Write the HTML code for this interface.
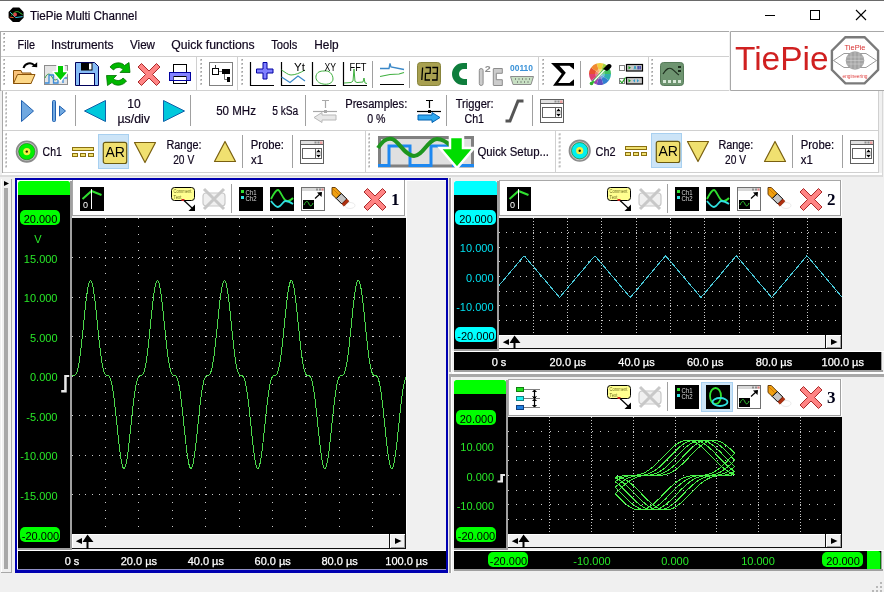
<!DOCTYPE html>
<html><head><meta charset="utf-8"><title>TiePie Multi Channel</title>
<style>html,body{margin:0;padding:0;width:884px;height:592px;overflow:hidden;background:#f0f0f0}</style>
</head><body><svg width="884" height="592" viewBox="0 0 884 592" style="display:block;will-change:transform"><rect x="0" y="0" width="884" height="592" fill="#f0f0f0" />
<rect x="0" y="0" width="884" height="31" fill="#ffffff" />
<rect x="0" y="0" width="884" height="1" fill="#6a6a6a" />
<text x="30" y="20" font-family="Liberation Sans" font-size="12" fill="#10061e" text-anchor="start" font-weight="normal" textLength="107" lengthAdjust="spacingAndGlyphs" stroke="#10061e" stroke-width="0.2">TiePie Multi Channel</text>
<rect x="765" y="15" width="10" height="1" fill="#000" />
<rect x="810.5" y="10.5" width="9" height="9" fill="none" stroke="#000" stroke-width="1"/>
<path d="M856 10 L866 20 M866 10 L856 20" stroke="#000" stroke-width="1.1"/>
<rect x="0" y="31" width="729" height="60" fill="#ffffff" />
<rect x="0" y="31" width="729" height="1" fill="#a8a8a8" />
<rect x="0" y="56" width="729" height="1" fill="#d0d0d0" />
<rect x="0" y="90" width="729" height="1" fill="#d0d0d0" />
<rect x="0" y="31" width="1" height="60" fill="#a8a8a8" />
<rect x="3" y="33" width="2" height="2" fill="#c8c8c8" />
<rect x="4" y="33" width="1" height="1" fill="#a0a0a0" />
<rect x="3" y="37" width="2" height="2" fill="#c8c8c8" />
<rect x="4" y="37" width="1" height="1" fill="#a0a0a0" />
<rect x="3" y="41" width="2" height="2" fill="#c8c8c8" />
<rect x="4" y="41" width="1" height="1" fill="#a0a0a0" />
<rect x="3" y="45" width="2" height="2" fill="#c8c8c8" />
<rect x="4" y="45" width="1" height="1" fill="#a0a0a0" />
<rect x="3" y="49" width="2" height="2" fill="#c8c8c8" />
<rect x="4" y="49" width="1" height="1" fill="#a0a0a0" />
<text x="17.5" y="49" font-family="Liberation Sans" font-size="12" fill="#10061e" text-anchor="start" font-weight="normal" textLength="17.5" lengthAdjust="spacingAndGlyphs" stroke="#10061e" stroke-width="0.2">File</text>
<text x="51" y="49" font-family="Liberation Sans" font-size="12" fill="#10061e" text-anchor="start" font-weight="normal" textLength="62.6" lengthAdjust="spacingAndGlyphs" stroke="#10061e" stroke-width="0.2">Instruments</text>
<text x="130" y="49" font-family="Liberation Sans" font-size="12" fill="#10061e" text-anchor="start" font-weight="normal" textLength="25" lengthAdjust="spacingAndGlyphs" stroke="#10061e" stroke-width="0.2">View</text>
<text x="171.3" y="49" font-family="Liberation Sans" font-size="12" fill="#10061e" text-anchor="start" font-weight="normal" textLength="83.3" lengthAdjust="spacingAndGlyphs" stroke="#10061e" stroke-width="0.2">Quick functions</text>
<text x="271.3" y="49" font-family="Liberation Sans" font-size="12" fill="#10061e" text-anchor="start" font-weight="normal" textLength="26" lengthAdjust="spacingAndGlyphs" stroke="#10061e" stroke-width="0.2">Tools</text>
<text x="314.3" y="49" font-family="Liberation Sans" font-size="12" fill="#10061e" text-anchor="start" font-weight="normal" textLength="24.4" lengthAdjust="spacingAndGlyphs" stroke="#10061e" stroke-width="0.2">Help</text>
<rect x="196" y="57" width="1" height="33" fill="#d0d0d0" />
<rect x="237" y="57" width="1" height="33" fill="#d0d0d0" />
<rect x="538" y="57" width="1" height="33" fill="#d0d0d0" />
<rect x="648" y="57" width="1" height="33" fill="#d0d0d0" />
<rect x="3" y="59" width="2" height="2" fill="#c8c8c8" />
<rect x="4" y="59" width="1" height="1" fill="#a0a0a0" />
<rect x="3" y="63" width="2" height="2" fill="#c8c8c8" />
<rect x="4" y="63" width="1" height="1" fill="#a0a0a0" />
<rect x="3" y="67" width="2" height="2" fill="#c8c8c8" />
<rect x="4" y="67" width="1" height="1" fill="#a0a0a0" />
<rect x="3" y="71" width="2" height="2" fill="#c8c8c8" />
<rect x="4" y="71" width="1" height="1" fill="#a0a0a0" />
<rect x="3" y="75" width="2" height="2" fill="#c8c8c8" />
<rect x="4" y="75" width="1" height="1" fill="#a0a0a0" />
<rect x="3" y="79" width="2" height="2" fill="#c8c8c8" />
<rect x="4" y="79" width="1" height="1" fill="#a0a0a0" />
<rect x="3" y="83" width="2" height="2" fill="#c8c8c8" />
<rect x="4" y="83" width="1" height="1" fill="#a0a0a0" />
<rect x="200" y="59" width="2" height="2" fill="#c8c8c8" />
<rect x="201" y="59" width="1" height="1" fill="#a0a0a0" />
<rect x="200" y="63" width="2" height="2" fill="#c8c8c8" />
<rect x="201" y="63" width="1" height="1" fill="#a0a0a0" />
<rect x="200" y="67" width="2" height="2" fill="#c8c8c8" />
<rect x="201" y="67" width="1" height="1" fill="#a0a0a0" />
<rect x="200" y="71" width="2" height="2" fill="#c8c8c8" />
<rect x="201" y="71" width="1" height="1" fill="#a0a0a0" />
<rect x="200" y="75" width="2" height="2" fill="#c8c8c8" />
<rect x="201" y="75" width="1" height="1" fill="#a0a0a0" />
<rect x="200" y="79" width="2" height="2" fill="#c8c8c8" />
<rect x="201" y="79" width="1" height="1" fill="#a0a0a0" />
<rect x="200" y="83" width="2" height="2" fill="#c8c8c8" />
<rect x="201" y="83" width="1" height="1" fill="#a0a0a0" />
<rect x="241" y="59" width="2" height="2" fill="#c8c8c8" />
<rect x="242" y="59" width="1" height="1" fill="#a0a0a0" />
<rect x="241" y="63" width="2" height="2" fill="#c8c8c8" />
<rect x="242" y="63" width="1" height="1" fill="#a0a0a0" />
<rect x="241" y="67" width="2" height="2" fill="#c8c8c8" />
<rect x="242" y="67" width="1" height="1" fill="#a0a0a0" />
<rect x="241" y="71" width="2" height="2" fill="#c8c8c8" />
<rect x="242" y="71" width="1" height="1" fill="#a0a0a0" />
<rect x="241" y="75" width="2" height="2" fill="#c8c8c8" />
<rect x="242" y="75" width="1" height="1" fill="#a0a0a0" />
<rect x="241" y="79" width="2" height="2" fill="#c8c8c8" />
<rect x="242" y="79" width="1" height="1" fill="#a0a0a0" />
<rect x="241" y="83" width="2" height="2" fill="#c8c8c8" />
<rect x="242" y="83" width="1" height="1" fill="#a0a0a0" />
<rect x="542" y="59" width="2" height="2" fill="#c8c8c8" />
<rect x="543" y="59" width="1" height="1" fill="#a0a0a0" />
<rect x="542" y="63" width="2" height="2" fill="#c8c8c8" />
<rect x="543" y="63" width="1" height="1" fill="#a0a0a0" />
<rect x="542" y="67" width="2" height="2" fill="#c8c8c8" />
<rect x="543" y="67" width="1" height="1" fill="#a0a0a0" />
<rect x="542" y="71" width="2" height="2" fill="#c8c8c8" />
<rect x="543" y="71" width="1" height="1" fill="#a0a0a0" />
<rect x="542" y="75" width="2" height="2" fill="#c8c8c8" />
<rect x="543" y="75" width="1" height="1" fill="#a0a0a0" />
<rect x="542" y="79" width="2" height="2" fill="#c8c8c8" />
<rect x="543" y="79" width="1" height="1" fill="#a0a0a0" />
<rect x="542" y="83" width="2" height="2" fill="#c8c8c8" />
<rect x="543" y="83" width="1" height="1" fill="#a0a0a0" />
<rect x="651" y="59" width="2" height="2" fill="#c8c8c8" />
<rect x="652" y="59" width="1" height="1" fill="#a0a0a0" />
<rect x="651" y="63" width="2" height="2" fill="#c8c8c8" />
<rect x="652" y="63" width="1" height="1" fill="#a0a0a0" />
<rect x="651" y="67" width="2" height="2" fill="#c8c8c8" />
<rect x="652" y="67" width="1" height="1" fill="#a0a0a0" />
<rect x="651" y="71" width="2" height="2" fill="#c8c8c8" />
<rect x="652" y="71" width="1" height="1" fill="#a0a0a0" />
<rect x="651" y="75" width="2" height="2" fill="#c8c8c8" />
<rect x="652" y="75" width="1" height="1" fill="#a0a0a0" />
<rect x="651" y="79" width="2" height="2" fill="#c8c8c8" />
<rect x="652" y="79" width="1" height="1" fill="#a0a0a0" />
<rect x="651" y="83" width="2" height="2" fill="#c8c8c8" />
<rect x="652" y="83" width="1" height="1" fill="#a0a0a0" />
<rect x="730" y="31" width="154" height="60" fill="#ffffff" />
<path d="M884 31.5 H730.5 V90.5 H884" fill="none" stroke="#a8a8a8"/>
<text x="735" y="70" font-family="Liberation Sans" font-size="33.4" fill="#d02020" text-anchor="start" font-weight="normal" textLength="93.5" lengthAdjust="spacingAndGlyphs" >TiePie</text>
<rect x="0" y="91" width="884" height="87" fill="#f0f0f0" />
<rect x="2" y="91" width="877" height="39" fill="#ffffff" />
<rect x="2" y="131" width="877" height="41" fill="#ffffff" />
<rect x="2" y="130" width="877" height="1" fill="#d0d0d0" />
<rect x="2" y="172" width="877" height="1" fill="#d0d0d0" />
<rect x="2" y="173" width="880" height="2" fill="#ffffff" />
<rect x="0" y="175" width="882" height="2" fill="#dcdcdc" />
<rect x="2" y="91" width="1" height="82" fill="#a8a8a8" />
<rect x="878" y="91" width="1" height="82" fill="#d0d0d0" />
<rect x="882" y="91" width="1" height="86" fill="#d8d8d8" />
<rect x="5" y="92.5" width="2" height="2" fill="#c8c8c8" />
<rect x="6" y="92.5" width="1" height="1" fill="#a0a0a0" />
<rect x="5" y="96.5" width="2" height="2" fill="#c8c8c8" />
<rect x="6" y="96.5" width="1" height="1" fill="#a0a0a0" />
<rect x="5" y="100.5" width="2" height="2" fill="#c8c8c8" />
<rect x="6" y="100.5" width="1" height="1" fill="#a0a0a0" />
<rect x="5" y="104.5" width="2" height="2" fill="#c8c8c8" />
<rect x="6" y="104.5" width="1" height="1" fill="#a0a0a0" />
<rect x="5" y="108.5" width="2" height="2" fill="#c8c8c8" />
<rect x="6" y="108.5" width="1" height="1" fill="#a0a0a0" />
<rect x="5" y="112.5" width="2" height="2" fill="#c8c8c8" />
<rect x="6" y="112.5" width="1" height="1" fill="#a0a0a0" />
<rect x="5" y="116.5" width="2" height="2" fill="#c8c8c8" />
<rect x="6" y="116.5" width="1" height="1" fill="#a0a0a0" />
<rect x="5" y="120.5" width="2" height="2" fill="#c8c8c8" />
<rect x="6" y="120.5" width="1" height="1" fill="#a0a0a0" />
<rect x="5" y="124.5" width="2" height="2" fill="#c8c8c8" />
<rect x="6" y="124.5" width="1" height="1" fill="#a0a0a0" />
<rect x="5" y="133.5" width="2" height="2" fill="#c8c8c8" />
<rect x="6" y="133.5" width="1" height="1" fill="#a0a0a0" />
<rect x="5" y="137.5" width="2" height="2" fill="#c8c8c8" />
<rect x="6" y="137.5" width="1" height="1" fill="#a0a0a0" />
<rect x="5" y="141.5" width="2" height="2" fill="#c8c8c8" />
<rect x="6" y="141.5" width="1" height="1" fill="#a0a0a0" />
<rect x="5" y="145.5" width="2" height="2" fill="#c8c8c8" />
<rect x="6" y="145.5" width="1" height="1" fill="#a0a0a0" />
<rect x="5" y="149.5" width="2" height="2" fill="#c8c8c8" />
<rect x="6" y="149.5" width="1" height="1" fill="#a0a0a0" />
<rect x="5" y="153.5" width="2" height="2" fill="#c8c8c8" />
<rect x="6" y="153.5" width="1" height="1" fill="#a0a0a0" />
<rect x="5" y="157.5" width="2" height="2" fill="#c8c8c8" />
<rect x="6" y="157.5" width="1" height="1" fill="#a0a0a0" />
<rect x="5" y="161.5" width="2" height="2" fill="#c8c8c8" />
<rect x="6" y="161.5" width="1" height="1" fill="#a0a0a0" />
<rect x="5" y="165.5" width="2" height="2" fill="#c8c8c8" />
<rect x="6" y="165.5" width="1" height="1" fill="#a0a0a0" />
<rect x="365" y="131" width="1" height="41" fill="#d0d0d0" />
<rect x="368" y="133.5" width="2" height="2" fill="#c8c8c8" />
<rect x="369" y="133.5" width="1" height="1" fill="#a0a0a0" />
<rect x="368" y="137.5" width="2" height="2" fill="#c8c8c8" />
<rect x="369" y="137.5" width="1" height="1" fill="#a0a0a0" />
<rect x="368" y="141.5" width="2" height="2" fill="#c8c8c8" />
<rect x="369" y="141.5" width="1" height="1" fill="#a0a0a0" />
<rect x="368" y="145.5" width="2" height="2" fill="#c8c8c8" />
<rect x="369" y="145.5" width="1" height="1" fill="#a0a0a0" />
<rect x="368" y="149.5" width="2" height="2" fill="#c8c8c8" />
<rect x="369" y="149.5" width="1" height="1" fill="#a0a0a0" />
<rect x="368" y="153.5" width="2" height="2" fill="#c8c8c8" />
<rect x="369" y="153.5" width="1" height="1" fill="#a0a0a0" />
<rect x="368" y="157.5" width="2" height="2" fill="#c8c8c8" />
<rect x="369" y="157.5" width="1" height="1" fill="#a0a0a0" />
<rect x="368" y="161.5" width="2" height="2" fill="#c8c8c8" />
<rect x="369" y="161.5" width="1" height="1" fill="#a0a0a0" />
<rect x="368" y="165.5" width="2" height="2" fill="#c8c8c8" />
<rect x="369" y="165.5" width="1" height="1" fill="#a0a0a0" />
<rect x="555" y="131" width="1" height="41" fill="#d0d0d0" />
<rect x="558.5" y="133.5" width="2" height="2" fill="#c8c8c8" />
<rect x="559.5" y="133.5" width="1" height="1" fill="#a0a0a0" />
<rect x="558.5" y="137.5" width="2" height="2" fill="#c8c8c8" />
<rect x="559.5" y="137.5" width="1" height="1" fill="#a0a0a0" />
<rect x="558.5" y="141.5" width="2" height="2" fill="#c8c8c8" />
<rect x="559.5" y="141.5" width="1" height="1" fill="#a0a0a0" />
<rect x="558.5" y="145.5" width="2" height="2" fill="#c8c8c8" />
<rect x="559.5" y="145.5" width="1" height="1" fill="#a0a0a0" />
<rect x="558.5" y="149.5" width="2" height="2" fill="#c8c8c8" />
<rect x="559.5" y="149.5" width="1" height="1" fill="#a0a0a0" />
<rect x="558.5" y="153.5" width="2" height="2" fill="#c8c8c8" />
<rect x="559.5" y="153.5" width="1" height="1" fill="#a0a0a0" />
<rect x="558.5" y="157.5" width="2" height="2" fill="#c8c8c8" />
<rect x="559.5" y="157.5" width="1" height="1" fill="#a0a0a0" />
<rect x="558.5" y="161.5" width="2" height="2" fill="#c8c8c8" />
<rect x="559.5" y="161.5" width="1" height="1" fill="#a0a0a0" />
<rect x="558.5" y="165.5" width="2" height="2" fill="#c8c8c8" />
<rect x="559.5" y="165.5" width="1" height="1" fill="#a0a0a0" />
<text x="134" y="108" font-family="Liberation Sans" font-size="12" fill="#10061e" text-anchor="middle" font-weight="normal" stroke="#10061e" stroke-width="0.2">10</text>
<text x="117.5" y="122.6" font-family="Liberation Sans" font-size="12" fill="#10061e" text-anchor="start" font-weight="normal" textLength="32.5" lengthAdjust="spacingAndGlyphs" stroke="#10061e" stroke-width="0.2">µs/div</text>
<text x="216.2" y="114.5" font-family="Liberation Sans" font-size="12" fill="#10061e" text-anchor="start" font-weight="normal" textLength="39.7" lengthAdjust="spacingAndGlyphs" stroke="#10061e" stroke-width="0.2">50 MHz</text>
<text x="272.2" y="114.5" font-family="Liberation Sans" font-size="12" fill="#10061e" text-anchor="start" font-weight="normal" textLength="26.1" lengthAdjust="spacingAndGlyphs" stroke="#10061e" stroke-width="0.2">5 kSa</text>
<text x="345.2" y="107.8" font-family="Liberation Sans" font-size="12" fill="#10061e" text-anchor="start" font-weight="normal" textLength="62.1" lengthAdjust="spacingAndGlyphs" stroke="#10061e" stroke-width="0.2">Presamples:</text>
<text x="367.2" y="122.6" font-family="Liberation Sans" font-size="12" fill="#10061e" text-anchor="start" font-weight="normal" textLength="18.3" lengthAdjust="spacingAndGlyphs" stroke="#10061e" stroke-width="0.2">0 %</text>
<text x="455.7" y="107.8" font-family="Liberation Sans" font-size="12" fill="#10061e" text-anchor="start" font-weight="normal" textLength="38" lengthAdjust="spacingAndGlyphs" stroke="#10061e" stroke-width="0.2">Trigger:</text>
<text x="464.5" y="122.6" font-family="Liberation Sans" font-size="12" fill="#10061e" text-anchor="start" font-weight="normal" textLength="19.5" lengthAdjust="spacingAndGlyphs" stroke="#10061e" stroke-width="0.2">Ch1</text>
<rect x="75" y="95" width="1" height="31" fill="#a0a0a0" />
<rect x="190" y="95" width="1" height="31" fill="#a0a0a0" />
<rect x="305" y="95" width="1" height="31" fill="#a0a0a0" />
<rect x="446" y="95" width="1" height="31" fill="#a0a0a0" />
<rect x="532" y="95" width="1" height="31" fill="#a0a0a0" />
<text x="42.6" y="155.6" font-family="Liberation Sans" font-size="12" fill="#10061e" text-anchor="start" font-weight="normal" textLength="19.2" lengthAdjust="spacingAndGlyphs" stroke="#10061e" stroke-width="0.2">Ch1</text>
<text x="166.5" y="148.6" font-family="Liberation Sans" font-size="12" fill="#10061e" text-anchor="start" font-weight="normal" textLength="35" lengthAdjust="spacingAndGlyphs" stroke="#10061e" stroke-width="0.2">Range:</text>
<text x="173.2" y="163.7" font-family="Liberation Sans" font-size="12" fill="#10061e" text-anchor="start" font-weight="normal" textLength="21" lengthAdjust="spacingAndGlyphs" stroke="#10061e" stroke-width="0.2">20 V</text>
<text x="250.7" y="148.6" font-family="Liberation Sans" font-size="12" fill="#10061e" text-anchor="start" font-weight="normal" textLength="33.3" lengthAdjust="spacingAndGlyphs" stroke="#10061e" stroke-width="0.2">Probe:</text>
<text x="251" y="163.7" font-family="Liberation Sans" font-size="12" fill="#10061e" text-anchor="start" font-weight="normal" textLength="12" lengthAdjust="spacingAndGlyphs" stroke="#10061e" stroke-width="0.2">x1</text>
<text x="477.4" y="156.1" font-family="Liberation Sans" font-size="12" fill="#10061e" text-anchor="start" font-weight="normal" textLength="71.6" lengthAdjust="spacingAndGlyphs" stroke="#10061e" stroke-width="0.2">Quick Setup...</text>
<text x="595.6" y="155.6" font-family="Liberation Sans" font-size="12" fill="#10061e" text-anchor="start" font-weight="normal" textLength="20" lengthAdjust="spacingAndGlyphs" stroke="#10061e" stroke-width="0.2">Ch2</text>
<text x="718.4" y="148.6" font-family="Liberation Sans" font-size="12" fill="#10061e" text-anchor="start" font-weight="normal" textLength="35" lengthAdjust="spacingAndGlyphs" stroke="#10061e" stroke-width="0.2">Range:</text>
<text x="725" y="163.7" font-family="Liberation Sans" font-size="12" fill="#10061e" text-anchor="start" font-weight="normal" textLength="21" lengthAdjust="spacingAndGlyphs" stroke="#10061e" stroke-width="0.2">20 V</text>
<text x="800.8" y="148.6" font-family="Liberation Sans" font-size="12" fill="#10061e" text-anchor="start" font-weight="normal" textLength="33.3" lengthAdjust="spacingAndGlyphs" stroke="#10061e" stroke-width="0.2">Probe:</text>
<text x="800.8" y="163.7" font-family="Liberation Sans" font-size="12" fill="#10061e" text-anchor="start" font-weight="normal" textLength="12" lengthAdjust="spacingAndGlyphs" stroke="#10061e" stroke-width="0.2">x1</text>
<rect x="242" y="135" width="1" height="33" fill="#a0a0a0" />
<rect x="292" y="135" width="1" height="33" fill="#a0a0a0" />
<rect x="792" y="135" width="1" height="33" fill="#a0a0a0" />
<rect x="842" y="135" width="1" height="33" fill="#a0a0a0" />
<rect x="0" y="177" width="884" height="415" fill="#f0f0f0" />
<rect x="1" y="179" width="1" height="393" fill="#ffffff" />
<rect x="11" y="179" width="1" height="394" fill="#a8a8a8" />
<rect x="1" y="572" width="11" height="1" fill="#a8a8a8" />
<rect x="4" y="188" width="4" height="381" fill="#a8a8a8" />
<path d="M4 181 L9 183.5 L4 186 Z" fill="#000"/>
<rect x="15" y="178" width="433" height="395" fill="#0000b0" />
<rect x="17" y="180" width="429" height="390" fill="#f0f0f0" />
<rect x="17" y="180" width="1" height="390" fill="#ffffff" />
<rect x="17" y="180" width="429" height="1" fill="#ffffff" />
<rect x="18" y="181" width="52" height="14" fill="#ffffff" />
<rect x="18" y="195" width="52" height="353" fill="#000" />
<path d="M18 183.5 Q18 181 20.5 181 H67.5 Q70 181 70 183.5 V195 H18 Z" fill="#00ff00"/>
<rect x="70" y="181" width="2" height="369" fill="#a0a0a0" />
<rect x="18" y="548" width="54" height="2" fill="#a0a0a0" />
<rect x="72" y="180" width="332" height="35" fill="#ffffff" />
<rect x="72" y="180" width="1" height="35" fill="#a8a8a8" />
<rect x="72" y="215" width="333" height="1" fill="#a0a0a0" />
<rect x="404" y="180" width="1" height="36" fill="#a0a0a0" />
<rect x="405" y="180" width="1" height="36" fill="#ffffff" />
<rect x="406" y="181" width="1" height="353" fill="#ffffff" />
<rect x="72" y="218" width="334" height="316" fill="#000" />
<path d="M105 218h1v1h-1zM105 226h1v1h-1zM105 234h1v1h-1zM105 242h1v1h-1zM105 250h1v1h-1zM105 258h1v1h-1zM105 265h1v1h-1zM105 273h1v1h-1zM105 281h1v1h-1zM105 289h1v1h-1zM105 297h1v1h-1zM105 305h1v1h-1zM105 313h1v1h-1zM105 321h1v1h-1zM105 329h1v1h-1zM105 336h1v1h-1zM105 344h1v1h-1zM105 352h1v1h-1zM105 360h1v1h-1zM105 368h1v1h-1zM105 376h1v1h-1zM105 384h1v1h-1zM105 392h1v1h-1zM105 400h1v1h-1zM105 408h1v1h-1zM105 416h1v1h-1zM105 423h1v1h-1zM105 431h1v1h-1zM105 439h1v1h-1zM105 447h1v1h-1zM105 455h1v1h-1zM105 463h1v1h-1zM105 471h1v1h-1zM105 479h1v1h-1zM105 487h1v1h-1zM105 494h1v1h-1zM105 502h1v1h-1zM105 510h1v1h-1zM105 518h1v1h-1zM105 526h1v1h-1zM138 218h1v1h-1zM138 226h1v1h-1zM138 234h1v1h-1zM138 242h1v1h-1zM138 250h1v1h-1zM138 258h1v1h-1zM138 265h1v1h-1zM138 273h1v1h-1zM138 281h1v1h-1zM138 289h1v1h-1zM138 297h1v1h-1zM138 305h1v1h-1zM138 313h1v1h-1zM138 321h1v1h-1zM138 329h1v1h-1zM138 336h1v1h-1zM138 344h1v1h-1zM138 352h1v1h-1zM138 360h1v1h-1zM138 368h1v1h-1zM138 376h1v1h-1zM138 384h1v1h-1zM138 392h1v1h-1zM138 400h1v1h-1zM138 408h1v1h-1zM138 416h1v1h-1zM138 423h1v1h-1zM138 431h1v1h-1zM138 439h1v1h-1zM138 447h1v1h-1zM138 455h1v1h-1zM138 463h1v1h-1zM138 471h1v1h-1zM138 479h1v1h-1zM138 487h1v1h-1zM138 494h1v1h-1zM138 502h1v1h-1zM138 510h1v1h-1zM138 518h1v1h-1zM138 526h1v1h-1zM172 218h1v1h-1zM172 226h1v1h-1zM172 234h1v1h-1zM172 242h1v1h-1zM172 250h1v1h-1zM172 258h1v1h-1zM172 265h1v1h-1zM172 273h1v1h-1zM172 281h1v1h-1zM172 289h1v1h-1zM172 297h1v1h-1zM172 305h1v1h-1zM172 313h1v1h-1zM172 321h1v1h-1zM172 329h1v1h-1zM172 336h1v1h-1zM172 344h1v1h-1zM172 352h1v1h-1zM172 360h1v1h-1zM172 368h1v1h-1zM172 376h1v1h-1zM172 384h1v1h-1zM172 392h1v1h-1zM172 400h1v1h-1zM172 408h1v1h-1zM172 416h1v1h-1zM172 423h1v1h-1zM172 431h1v1h-1zM172 439h1v1h-1zM172 447h1v1h-1zM172 455h1v1h-1zM172 463h1v1h-1zM172 471h1v1h-1zM172 479h1v1h-1zM172 487h1v1h-1zM172 494h1v1h-1zM172 502h1v1h-1zM172 510h1v1h-1zM172 518h1v1h-1zM172 526h1v1h-1zM205 218h1v1h-1zM205 226h1v1h-1zM205 234h1v1h-1zM205 242h1v1h-1zM205 250h1v1h-1zM205 258h1v1h-1zM205 265h1v1h-1zM205 273h1v1h-1zM205 281h1v1h-1zM205 289h1v1h-1zM205 297h1v1h-1zM205 305h1v1h-1zM205 313h1v1h-1zM205 321h1v1h-1zM205 329h1v1h-1zM205 336h1v1h-1zM205 344h1v1h-1zM205 352h1v1h-1zM205 360h1v1h-1zM205 368h1v1h-1zM205 376h1v1h-1zM205 384h1v1h-1zM205 392h1v1h-1zM205 400h1v1h-1zM205 408h1v1h-1zM205 416h1v1h-1zM205 423h1v1h-1zM205 431h1v1h-1zM205 439h1v1h-1zM205 447h1v1h-1zM205 455h1v1h-1zM205 463h1v1h-1zM205 471h1v1h-1zM205 479h1v1h-1zM205 487h1v1h-1zM205 494h1v1h-1zM205 502h1v1h-1zM205 510h1v1h-1zM205 518h1v1h-1zM205 526h1v1h-1zM239 218h1v1h-1zM239 226h1v1h-1zM239 234h1v1h-1zM239 242h1v1h-1zM239 250h1v1h-1zM239 258h1v1h-1zM239 265h1v1h-1zM239 273h1v1h-1zM239 281h1v1h-1zM239 289h1v1h-1zM239 297h1v1h-1zM239 305h1v1h-1zM239 313h1v1h-1zM239 321h1v1h-1zM239 329h1v1h-1zM239 336h1v1h-1zM239 344h1v1h-1zM239 352h1v1h-1zM239 360h1v1h-1zM239 368h1v1h-1zM239 376h1v1h-1zM239 384h1v1h-1zM239 392h1v1h-1zM239 400h1v1h-1zM239 408h1v1h-1zM239 416h1v1h-1zM239 423h1v1h-1zM239 431h1v1h-1zM239 439h1v1h-1zM239 447h1v1h-1zM239 455h1v1h-1zM239 463h1v1h-1zM239 471h1v1h-1zM239 479h1v1h-1zM239 487h1v1h-1zM239 494h1v1h-1zM239 502h1v1h-1zM239 510h1v1h-1zM239 518h1v1h-1zM239 526h1v1h-1zM272 218h1v1h-1zM272 226h1v1h-1zM272 234h1v1h-1zM272 242h1v1h-1zM272 250h1v1h-1zM272 258h1v1h-1zM272 265h1v1h-1zM272 273h1v1h-1zM272 281h1v1h-1zM272 289h1v1h-1zM272 297h1v1h-1zM272 305h1v1h-1zM272 313h1v1h-1zM272 321h1v1h-1zM272 329h1v1h-1zM272 336h1v1h-1zM272 344h1v1h-1zM272 352h1v1h-1zM272 360h1v1h-1zM272 368h1v1h-1zM272 376h1v1h-1zM272 384h1v1h-1zM272 392h1v1h-1zM272 400h1v1h-1zM272 408h1v1h-1zM272 416h1v1h-1zM272 423h1v1h-1zM272 431h1v1h-1zM272 439h1v1h-1zM272 447h1v1h-1zM272 455h1v1h-1zM272 463h1v1h-1zM272 471h1v1h-1zM272 479h1v1h-1zM272 487h1v1h-1zM272 494h1v1h-1zM272 502h1v1h-1zM272 510h1v1h-1zM272 518h1v1h-1zM272 526h1v1h-1zM305 218h1v1h-1zM305 226h1v1h-1zM305 234h1v1h-1zM305 242h1v1h-1zM305 250h1v1h-1zM305 258h1v1h-1zM305 265h1v1h-1zM305 273h1v1h-1zM305 281h1v1h-1zM305 289h1v1h-1zM305 297h1v1h-1zM305 305h1v1h-1zM305 313h1v1h-1zM305 321h1v1h-1zM305 329h1v1h-1zM305 336h1v1h-1zM305 344h1v1h-1zM305 352h1v1h-1zM305 360h1v1h-1zM305 368h1v1h-1zM305 376h1v1h-1zM305 384h1v1h-1zM305 392h1v1h-1zM305 400h1v1h-1zM305 408h1v1h-1zM305 416h1v1h-1zM305 423h1v1h-1zM305 431h1v1h-1zM305 439h1v1h-1zM305 447h1v1h-1zM305 455h1v1h-1zM305 463h1v1h-1zM305 471h1v1h-1zM305 479h1v1h-1zM305 487h1v1h-1zM305 494h1v1h-1zM305 502h1v1h-1zM305 510h1v1h-1zM305 518h1v1h-1zM305 526h1v1h-1zM339 218h1v1h-1zM339 226h1v1h-1zM339 234h1v1h-1zM339 242h1v1h-1zM339 250h1v1h-1zM339 258h1v1h-1zM339 265h1v1h-1zM339 273h1v1h-1zM339 281h1v1h-1zM339 289h1v1h-1zM339 297h1v1h-1zM339 305h1v1h-1zM339 313h1v1h-1zM339 321h1v1h-1zM339 329h1v1h-1zM339 336h1v1h-1zM339 344h1v1h-1zM339 352h1v1h-1zM339 360h1v1h-1zM339 368h1v1h-1zM339 376h1v1h-1zM339 384h1v1h-1zM339 392h1v1h-1zM339 400h1v1h-1zM339 408h1v1h-1zM339 416h1v1h-1zM339 423h1v1h-1zM339 431h1v1h-1zM339 439h1v1h-1zM339 447h1v1h-1zM339 455h1v1h-1zM339 463h1v1h-1zM339 471h1v1h-1zM339 479h1v1h-1zM339 487h1v1h-1zM339 494h1v1h-1zM339 502h1v1h-1zM339 510h1v1h-1zM339 518h1v1h-1zM339 526h1v1h-1zM372 218h1v1h-1zM372 226h1v1h-1zM372 234h1v1h-1zM372 242h1v1h-1zM372 250h1v1h-1zM372 258h1v1h-1zM372 265h1v1h-1zM372 273h1v1h-1zM372 281h1v1h-1zM372 289h1v1h-1zM372 297h1v1h-1zM372 305h1v1h-1zM372 313h1v1h-1zM372 321h1v1h-1zM372 329h1v1h-1zM372 336h1v1h-1zM372 344h1v1h-1zM372 352h1v1h-1zM372 360h1v1h-1zM372 368h1v1h-1zM372 376h1v1h-1zM372 384h1v1h-1zM372 392h1v1h-1zM372 400h1v1h-1zM372 408h1v1h-1zM372 416h1v1h-1zM372 423h1v1h-1zM372 431h1v1h-1zM372 439h1v1h-1zM372 447h1v1h-1zM372 455h1v1h-1zM372 463h1v1h-1zM372 471h1v1h-1zM372 479h1v1h-1zM372 487h1v1h-1zM372 494h1v1h-1zM372 502h1v1h-1zM372 510h1v1h-1zM372 518h1v1h-1zM372 526h1v1h-1zM72 257h1v1h-1zM79 257h1v1h-1zM85 257h1v1h-1zM92 257h1v1h-1zM99 257h1v1h-1zM105 257h1v1h-1zM112 257h1v1h-1zM119 257h1v1h-1zM125 257h1v1h-1zM132 257h1v1h-1zM139 257h1v1h-1zM145 257h1v1h-1zM152 257h1v1h-1zM159 257h1v1h-1zM166 257h1v1h-1zM172 257h1v1h-1zM179 257h1v1h-1zM186 257h1v1h-1zM192 257h1v1h-1zM199 257h1v1h-1zM206 257h1v1h-1zM212 257h1v1h-1zM219 257h1v1h-1zM226 257h1v1h-1zM232 257h1v1h-1zM239 257h1v1h-1zM246 257h1v1h-1zM252 257h1v1h-1zM259 257h1v1h-1zM266 257h1v1h-1zM272 257h1v1h-1zM279 257h1v1h-1zM286 257h1v1h-1zM292 257h1v1h-1zM299 257h1v1h-1zM306 257h1v1h-1zM312 257h1v1h-1zM319 257h1v1h-1zM326 257h1v1h-1zM333 257h1v1h-1zM339 257h1v1h-1zM346 257h1v1h-1zM353 257h1v1h-1zM359 257h1v1h-1zM366 257h1v1h-1zM373 257h1v1h-1zM379 257h1v1h-1zM386 257h1v1h-1zM393 257h1v1h-1zM399 257h1v1h-1zM72 297h1v1h-1zM79 297h1v1h-1zM85 297h1v1h-1zM92 297h1v1h-1zM99 297h1v1h-1zM105 297h1v1h-1zM112 297h1v1h-1zM119 297h1v1h-1zM125 297h1v1h-1zM132 297h1v1h-1zM139 297h1v1h-1zM145 297h1v1h-1zM152 297h1v1h-1zM159 297h1v1h-1zM166 297h1v1h-1zM172 297h1v1h-1zM179 297h1v1h-1zM186 297h1v1h-1zM192 297h1v1h-1zM199 297h1v1h-1zM206 297h1v1h-1zM212 297h1v1h-1zM219 297h1v1h-1zM226 297h1v1h-1zM232 297h1v1h-1zM239 297h1v1h-1zM246 297h1v1h-1zM252 297h1v1h-1zM259 297h1v1h-1zM266 297h1v1h-1zM272 297h1v1h-1zM279 297h1v1h-1zM286 297h1v1h-1zM292 297h1v1h-1zM299 297h1v1h-1zM306 297h1v1h-1zM312 297h1v1h-1zM319 297h1v1h-1zM326 297h1v1h-1zM333 297h1v1h-1zM339 297h1v1h-1zM346 297h1v1h-1zM353 297h1v1h-1zM359 297h1v1h-1zM366 297h1v1h-1zM373 297h1v1h-1zM379 297h1v1h-1zM386 297h1v1h-1zM393 297h1v1h-1zM399 297h1v1h-1zM72 336h1v1h-1zM79 336h1v1h-1zM85 336h1v1h-1zM92 336h1v1h-1zM99 336h1v1h-1zM105 336h1v1h-1zM112 336h1v1h-1zM119 336h1v1h-1zM125 336h1v1h-1zM132 336h1v1h-1zM139 336h1v1h-1zM145 336h1v1h-1zM152 336h1v1h-1zM159 336h1v1h-1zM166 336h1v1h-1zM172 336h1v1h-1zM179 336h1v1h-1zM186 336h1v1h-1zM192 336h1v1h-1zM199 336h1v1h-1zM206 336h1v1h-1zM212 336h1v1h-1zM219 336h1v1h-1zM226 336h1v1h-1zM232 336h1v1h-1zM239 336h1v1h-1zM246 336h1v1h-1zM252 336h1v1h-1zM259 336h1v1h-1zM266 336h1v1h-1zM272 336h1v1h-1zM279 336h1v1h-1zM286 336h1v1h-1zM292 336h1v1h-1zM299 336h1v1h-1zM306 336h1v1h-1zM312 336h1v1h-1zM319 336h1v1h-1zM326 336h1v1h-1zM333 336h1v1h-1zM339 336h1v1h-1zM346 336h1v1h-1zM353 336h1v1h-1zM359 336h1v1h-1zM366 336h1v1h-1zM373 336h1v1h-1zM379 336h1v1h-1zM386 336h1v1h-1zM393 336h1v1h-1zM399 336h1v1h-1zM72 376h1v1h-1zM79 376h1v1h-1zM85 376h1v1h-1zM92 376h1v1h-1zM99 376h1v1h-1zM105 376h1v1h-1zM112 376h1v1h-1zM119 376h1v1h-1zM125 376h1v1h-1zM132 376h1v1h-1zM139 376h1v1h-1zM145 376h1v1h-1zM152 376h1v1h-1zM159 376h1v1h-1zM166 376h1v1h-1zM172 376h1v1h-1zM179 376h1v1h-1zM186 376h1v1h-1zM192 376h1v1h-1zM199 376h1v1h-1zM206 376h1v1h-1zM212 376h1v1h-1zM219 376h1v1h-1zM226 376h1v1h-1zM232 376h1v1h-1zM239 376h1v1h-1zM246 376h1v1h-1zM252 376h1v1h-1zM259 376h1v1h-1zM266 376h1v1h-1zM272 376h1v1h-1zM279 376h1v1h-1zM286 376h1v1h-1zM292 376h1v1h-1zM299 376h1v1h-1zM306 376h1v1h-1zM312 376h1v1h-1zM319 376h1v1h-1zM326 376h1v1h-1zM333 376h1v1h-1zM339 376h1v1h-1zM346 376h1v1h-1zM353 376h1v1h-1zM359 376h1v1h-1zM366 376h1v1h-1zM373 376h1v1h-1zM379 376h1v1h-1zM386 376h1v1h-1zM393 376h1v1h-1zM399 376h1v1h-1zM72 415h1v1h-1zM79 415h1v1h-1zM85 415h1v1h-1zM92 415h1v1h-1zM99 415h1v1h-1zM105 415h1v1h-1zM112 415h1v1h-1zM119 415h1v1h-1zM125 415h1v1h-1zM132 415h1v1h-1zM139 415h1v1h-1zM145 415h1v1h-1zM152 415h1v1h-1zM159 415h1v1h-1zM166 415h1v1h-1zM172 415h1v1h-1zM179 415h1v1h-1zM186 415h1v1h-1zM192 415h1v1h-1zM199 415h1v1h-1zM206 415h1v1h-1zM212 415h1v1h-1zM219 415h1v1h-1zM226 415h1v1h-1zM232 415h1v1h-1zM239 415h1v1h-1zM246 415h1v1h-1zM252 415h1v1h-1zM259 415h1v1h-1zM266 415h1v1h-1zM272 415h1v1h-1zM279 415h1v1h-1zM286 415h1v1h-1zM292 415h1v1h-1zM299 415h1v1h-1zM306 415h1v1h-1zM312 415h1v1h-1zM319 415h1v1h-1zM326 415h1v1h-1zM333 415h1v1h-1zM339 415h1v1h-1zM346 415h1v1h-1zM353 415h1v1h-1zM359 415h1v1h-1zM366 415h1v1h-1zM373 415h1v1h-1zM379 415h1v1h-1zM386 415h1v1h-1zM393 415h1v1h-1zM399 415h1v1h-1zM72 455h1v1h-1zM79 455h1v1h-1zM85 455h1v1h-1zM92 455h1v1h-1zM99 455h1v1h-1zM105 455h1v1h-1zM112 455h1v1h-1zM119 455h1v1h-1zM125 455h1v1h-1zM132 455h1v1h-1zM139 455h1v1h-1zM145 455h1v1h-1zM152 455h1v1h-1zM159 455h1v1h-1zM166 455h1v1h-1zM172 455h1v1h-1zM179 455h1v1h-1zM186 455h1v1h-1zM192 455h1v1h-1zM199 455h1v1h-1zM206 455h1v1h-1zM212 455h1v1h-1zM219 455h1v1h-1zM226 455h1v1h-1zM232 455h1v1h-1zM239 455h1v1h-1zM246 455h1v1h-1zM252 455h1v1h-1zM259 455h1v1h-1zM266 455h1v1h-1zM272 455h1v1h-1zM279 455h1v1h-1zM286 455h1v1h-1zM292 455h1v1h-1zM299 455h1v1h-1zM306 455h1v1h-1zM312 455h1v1h-1zM319 455h1v1h-1zM326 455h1v1h-1zM333 455h1v1h-1zM339 455h1v1h-1zM346 455h1v1h-1zM353 455h1v1h-1zM359 455h1v1h-1zM366 455h1v1h-1zM373 455h1v1h-1zM379 455h1v1h-1zM386 455h1v1h-1zM393 455h1v1h-1zM399 455h1v1h-1zM72 494h1v1h-1zM79 494h1v1h-1zM85 494h1v1h-1zM92 494h1v1h-1zM99 494h1v1h-1zM105 494h1v1h-1zM112 494h1v1h-1zM119 494h1v1h-1zM125 494h1v1h-1zM132 494h1v1h-1zM139 494h1v1h-1zM145 494h1v1h-1zM152 494h1v1h-1zM159 494h1v1h-1zM166 494h1v1h-1zM172 494h1v1h-1zM179 494h1v1h-1zM186 494h1v1h-1zM192 494h1v1h-1zM199 494h1v1h-1zM206 494h1v1h-1zM212 494h1v1h-1zM219 494h1v1h-1zM226 494h1v1h-1zM232 494h1v1h-1zM239 494h1v1h-1zM246 494h1v1h-1zM252 494h1v1h-1zM259 494h1v1h-1zM266 494h1v1h-1zM272 494h1v1h-1zM279 494h1v1h-1zM286 494h1v1h-1zM292 494h1v1h-1zM299 494h1v1h-1zM306 494h1v1h-1zM312 494h1v1h-1zM319 494h1v1h-1zM326 494h1v1h-1zM333 494h1v1h-1zM339 494h1v1h-1zM346 494h1v1h-1zM353 494h1v1h-1zM359 494h1v1h-1zM366 494h1v1h-1zM373 494h1v1h-1zM379 494h1v1h-1zM386 494h1v1h-1zM393 494h1v1h-1zM399 494h1v1h-1z" fill="#c8c8c8" shape-rendering="crispEdges"/>
<rect x="72" y="534" width="334" height="15" fill="#f0f0f0" />
<rect x="72" y="534" width="334" height="1" fill="#ffffff" />
<rect x="72" y="534" width="1" height="15" fill="#ffffff" />
<rect x="72" y="548" width="334" height="1" fill="#101010" />
<rect x="389" y="534" width="1" height="15" fill="#101010" />
<rect x="390" y="534" width="16" height="15" fill="#f0f0f0" />
<rect x="390" y="534" width="16" height="1" fill="#ffffff" />
<rect x="390" y="534" width="1" height="15" fill="#ffffff" />
<rect x="390" y="548" width="16" height="1" fill="#101010" />
<rect x="405" y="534" width="1" height="15" fill="#101010" />
<rect x="391" y="547" width="14" height="1" fill="#a0a0a0" />
<rect x="404" y="535" width="1" height="13" fill="#a0a0a0" />
<path d="M395 538 L401.5 541 L395 544 Z" fill="#000"/>
<path d="M75.8 541.3 L82 538 L82 544 Z" fill="#000"/>
<path d="M87.5 534.5 L93.5 542 L88.5 542 L88.5 549 L86.5 549 L86.5 542 L82.5 542 Z" fill="#000"/>
<rect x="17" y="550" width="429" height="1" fill="#ffffff" />
<rect x="18" y="551" width="428" height="18" fill="#000" />
<rect x="17" y="569" width="429" height="1" fill="#9090c8" />
<text x="72.0" y="565" font-family="Liberation Sans" font-size="11" fill="#ffffff" text-anchor="middle" font-weight="normal" stroke="#ffffff" stroke-width="0.25">0 s</text>
<text x="138.9" y="565" font-family="Liberation Sans" font-size="11" fill="#ffffff" text-anchor="middle" font-weight="normal" stroke="#ffffff" stroke-width="0.25">20.0 µs</text>
<text x="205.8" y="565" font-family="Liberation Sans" font-size="11" fill="#ffffff" text-anchor="middle" font-weight="normal" stroke="#ffffff" stroke-width="0.25">40.0 µs</text>
<text x="272.70000000000005" y="565" font-family="Liberation Sans" font-size="11" fill="#ffffff" text-anchor="middle" font-weight="normal" stroke="#ffffff" stroke-width="0.25">60.0 µs</text>
<text x="339.6" y="565" font-family="Liberation Sans" font-size="11" fill="#ffffff" text-anchor="middle" font-weight="normal" stroke="#ffffff" stroke-width="0.25">80.0 µs</text>
<text x="406.5" y="565" font-family="Liberation Sans" font-size="11" fill="#ffffff" text-anchor="middle" font-weight="normal" stroke="#ffffff" stroke-width="0.25">100.0 µs</text>
<rect x="20" y="210" width="40" height="15" rx="5" ry="5" fill="#00ff00"/>
<text x="40.5" y="222.6" font-family="Liberation Sans" font-size="11" fill="#000" text-anchor="middle" font-weight="normal" >20.000</text>
<rect x="20" y="527" width="40" height="15" rx="5" ry="5" fill="#00ff00"/>
<text x="40.5" y="539.6" font-family="Liberation Sans" font-size="11" fill="#000" text-anchor="middle" font-weight="normal" >-20.000</text>
<text x="38" y="242.5" font-family="Liberation Sans" font-size="11" fill="#28e828" text-anchor="middle" font-weight="normal" >V</text>
<text x="57.5" y="262.8" font-family="Liberation Sans" font-size="11" fill="#28e828" text-anchor="end" font-weight="normal" >15.000</text>
<text x="57.5" y="302.3" font-family="Liberation Sans" font-size="11" fill="#28e828" text-anchor="end" font-weight="normal" >10.000</text>
<text x="57.5" y="341.8" font-family="Liberation Sans" font-size="11" fill="#28e828" text-anchor="end" font-weight="normal" >5.000</text>
<text x="57.5" y="381.2" font-family="Liberation Sans" font-size="11" fill="#28e828" text-anchor="end" font-weight="normal" >0.000</text>
<text x="57.5" y="420.7" font-family="Liberation Sans" font-size="11" fill="#28e828" text-anchor="end" font-weight="normal" >-5.000</text>
<text x="57.5" y="460.2" font-family="Liberation Sans" font-size="11" fill="#28e828" text-anchor="end" font-weight="normal" >-10.000</text>
<text x="57.5" y="499.7" font-family="Liberation Sans" font-size="11" fill="#28e828" text-anchor="end" font-weight="normal" >-15.000</text>
<path d="M64.2 375 H69.2 V377 H66.7 V392.5 H61.2 V390 H64.2 Z" fill="#e8e8e8"/>
<polyline points="72.0,376.21 72.5,375.79 73.0,375.58 73.5,375.50 74.0,375.50 74.5,375.43 75.0,375.22 75.5,374.80 76.0,374.12 76.5,373.15 77.0,371.85 77.5,370.19 78.0,368.16 78.5,365.76 79.0,362.99 79.5,359.85 80.0,356.35 80.5,352.54 81.0,348.42 81.5,344.05 82.0,339.47 82.5,334.71 83.0,329.84 83.5,324.91 84.0,319.97 84.5,315.09 85.0,310.33 85.5,305.74 86.0,301.39 86.5,297.32 87.0,293.60 87.5,290.26 88.0,287.36 88.5,284.94 89.0,283.02 89.5,281.62 90.0,280.78 90.5,280.50 91.0,280.78 91.5,281.62 92.0,283.02 92.5,284.94 93.0,287.36 93.5,290.26 94.0,293.60 94.5,297.32 95.0,301.39 95.5,305.74 96.0,310.33 96.5,315.09 97.0,319.97 97.5,324.91 98.0,329.84 98.5,334.71 99.0,339.47 99.5,344.05 100.0,348.42 100.5,352.54 101.0,356.35 101.5,359.85 102.0,362.99 102.5,365.76 103.0,368.16 103.5,370.19 104.0,371.85 104.5,373.15 105.0,374.12 105.5,374.80 106.0,375.22 106.5,375.43 107.0,375.50 107.5,375.50 108.0,375.58 108.5,375.79 109.0,376.21 109.5,376.89 110.0,377.86 110.5,379.15 111.0,380.79 111.5,382.79 112.0,385.16 112.5,387.89 113.0,390.99 113.5,394.42 114.0,398.17 114.5,402.21 115.0,406.50 115.5,411.00 116.0,415.67 116.5,420.44 117.0,425.27 117.5,430.10 118.0,434.87 118.5,439.53 119.0,444.01 119.5,448.26 120.0,452.22 120.5,455.85 121.0,459.09 121.5,461.91 122.0,464.26 122.5,466.12 123.0,467.45 123.5,468.25 124.0,468.50 124.5,468.20 125.0,467.34 125.5,465.95 126.0,464.05 126.5,461.65 127.0,458.79 127.5,455.50 128.0,451.84 128.5,447.85 129.0,443.57 129.5,439.07 130.0,434.40 130.5,429.62 131.0,424.78 131.5,419.96 132.0,415.19 132.5,410.55 133.0,406.07 133.5,401.80 134.0,397.79 134.5,394.06 135.0,390.66 135.5,387.60 136.0,384.90 136.5,382.57 137.0,380.61 137.5,379.01 138.0,377.75 138.5,376.81 139.0,376.16 139.5,375.76 140.0,375.56 140.5,375.50 141.0,375.49 141.5,375.42 142.0,375.19 142.5,374.74 143.0,374.04 143.5,373.03 144.0,371.70 144.5,370.00 145.0,367.94 145.5,365.50 146.0,362.69 146.5,359.51 147.0,355.99 147.5,352.14 148.0,348.00 148.5,343.60 149.0,339.00 149.5,334.23 150.0,329.35 150.5,324.41 151.0,319.48 151.5,314.61 152.0,309.86 152.5,305.30 153.0,300.97 153.5,296.93 154.0,293.25 154.5,289.95 155.0,287.10 155.5,284.72 156.0,282.85 156.5,281.52 157.0,280.73 157.5,280.50 158.0,280.84 158.5,281.74 159.0,283.18 159.5,285.16 160.0,287.63 160.5,290.58 161.0,293.95 161.5,297.71 162.0,301.81 162.5,306.19 163.0,310.80 163.5,315.58 164.0,320.47 164.5,325.40 165.0,330.33 165.5,335.19 166.0,339.93 166.5,344.50 167.0,348.85 167.5,352.93 168.0,356.72 168.5,360.18 169.0,363.28 169.5,366.02 170.0,368.38 170.5,370.37 171.0,371.99 171.5,373.26 172.0,374.20 172.5,374.85 173.0,375.25 173.5,375.44 174.0,375.50 174.5,375.51 175.0,375.59 175.5,375.82 176.0,376.27 176.5,376.97 177.0,377.97 177.5,379.30 178.0,380.97 178.5,383.01 179.0,385.42 179.5,388.19 180.0,391.32 180.5,394.78 181.0,398.57 181.5,402.63 182.0,406.95 182.5,411.46 183.0,416.14 183.5,420.92 184.0,425.75 184.5,430.58 185.0,435.34 185.5,439.98 186.0,444.44 186.5,448.67 187.0,452.60 187.5,456.19 188.0,459.40 188.5,462.17 189.0,464.47 189.5,466.27 190.0,467.56 190.5,468.30 191.0,468.49 191.5,468.13 192.0,467.23 192.5,465.79 193.0,463.83 193.5,461.38 194.0,458.48 194.5,455.15 195.0,451.46 195.5,447.43 196.0,443.13 196.5,438.61 197.0,433.92 197.5,429.14 198.0,424.30 198.5,419.48 199.0,414.72 199.5,410.09 200.0,405.63 200.5,401.38 201.0,397.40 201.5,393.71 202.0,390.34 202.5,387.32 203.0,384.65 203.5,382.36 204.0,380.43 204.5,378.86 205.0,377.64 205.5,376.73 206.0,376.11 206.5,375.73 207.0,375.55 207.5,375.50 208.0,375.49 208.5,375.40 209.0,375.15 209.5,374.69 210.0,373.95 210.5,372.92 211.0,371.54 211.5,369.81 212.0,367.71 212.5,365.24 213.0,362.39 213.5,359.18 214.0,355.62 214.5,351.74 215.0,347.57 215.5,343.15 216.0,338.53 216.5,333.74 217.0,328.86 217.5,323.92 218.0,318.99 218.5,314.13 219.0,309.40 219.5,304.85 220.0,300.55 220.5,296.55 221.0,292.90 221.5,289.65 222.0,286.84 222.5,284.51 223.0,282.69 223.5,281.41 224.0,280.68 224.5,280.51 225.0,280.91 225.5,281.86 226.0,283.36 226.5,285.38 227.0,287.91 227.5,290.90 228.0,294.31 228.5,298.11 229.0,302.24 229.5,306.64 230.0,311.27 230.5,316.06 231.0,320.96 231.5,325.90 232.0,330.82 232.5,335.67 233.0,340.40 233.5,344.95 234.0,349.27 234.5,353.33 235.0,357.08 235.5,360.50 236.0,363.57 236.5,366.27 237.0,368.60 237.5,370.55 238.0,372.13 238.5,373.37 239.0,374.28 239.5,374.90 240.0,375.28 240.5,375.45 241.0,375.50 241.5,375.51 242.0,375.60 242.5,375.86 243.0,376.33 243.5,377.06 244.0,378.09 244.5,379.45 245.0,381.16 245.5,383.23 246.0,385.68 246.5,388.48 247.0,391.65 247.5,395.15 248.0,398.96 248.5,403.05 249.0,407.39 249.5,411.93 250.0,416.61 250.5,421.40 251.0,426.24 251.5,431.06 252.0,435.81 252.5,440.44 253.0,444.88 253.5,449.08 254.0,452.98 254.5,456.53 255.0,459.69 255.5,462.42 256.0,464.67 256.5,466.43 257.0,467.66 257.5,468.34 258.0,468.48 258.5,468.07 259.0,467.11 259.5,465.61 260.0,463.61 260.5,461.11 261.0,458.16 261.5,454.80 262.0,451.07 262.5,447.01 263.0,442.69 263.5,438.15 264.0,433.45 264.5,428.65 265.0,423.82 265.5,419.00 266.0,414.25 266.5,409.64 267.0,405.19 267.5,400.97 268.0,397.02 268.5,393.36 269.0,390.02 269.5,387.03 270.0,384.41 270.5,382.15 271.0,380.26 271.5,378.73 272.0,377.53 272.5,376.66 273.0,376.06 273.5,375.71 274.0,375.54 274.5,375.50 275.0,375.49 275.5,375.38 276.0,375.12 276.5,374.62 277.0,373.86 277.5,372.79 278.0,371.39 278.5,369.62 279.0,367.48 279.5,364.97 280.0,362.08 280.5,358.83 281.0,355.24 281.5,351.33 282.0,347.14 282.5,342.70 283.0,338.06 283.5,333.26 284.0,328.36 284.5,323.43 285.0,318.50 285.5,313.65 286.0,308.93 286.5,304.41 287.0,300.14 287.5,296.17 288.0,292.55 288.5,289.35 289.0,286.59 289.5,284.31 290.0,282.54 290.5,281.31 291.0,280.64 291.5,280.53 292.0,280.98 292.5,281.99 293.0,283.54 293.5,285.61 294.0,288.19 294.5,291.22 295.0,294.68 295.5,298.51 296.0,302.67 296.5,307.10 297.0,311.74 297.5,316.55 298.0,321.45 298.5,326.39 299.0,331.31 299.5,336.15 300.0,340.86 300.5,345.39 301.0,349.69 301.5,353.72 302.0,357.44 302.5,360.83 303.0,363.86 303.5,366.52 304.0,368.81 304.5,370.72 305.0,372.27 305.5,373.47 306.0,374.36 306.5,374.95 307.0,375.30 307.5,375.46 308.0,375.50 308.5,375.51 309.0,375.62 309.5,375.89 310.0,376.39 310.5,377.15 311.0,378.21 311.5,379.60 312.0,381.35 312.5,383.46 313.0,385.94 313.5,388.78 314.0,391.98 314.5,395.52 315.0,399.36 315.5,403.48 316.0,407.83 316.5,412.39 317.0,417.09 317.5,421.88 318.0,426.72 318.5,431.54 319.0,436.28 319.5,440.89 320.0,445.31 320.5,449.48 321.0,453.35 321.5,456.87 322.0,459.99 322.5,462.67 323.0,464.87 323.5,466.57 324.0,467.75 324.5,468.38 325.0,468.47 325.5,468.00 326.0,466.98 326.5,465.44 327.0,463.38 327.5,460.84 328.0,457.85 328.5,454.44 329.0,450.67 329.5,446.59 330.0,442.24 330.5,437.68 331.0,432.97 331.5,428.17 332.0,423.33 332.5,418.52 333.0,413.79 333.5,409.18 334.0,404.76 334.5,400.57 335.0,396.64 335.5,393.01 336.0,389.71 336.5,386.76 337.0,384.17 337.5,381.95 338.0,380.09 338.5,378.59 339.0,377.43 339.5,376.59 340.0,376.02 340.5,375.68 341.0,375.53 341.5,375.50 342.0,375.48 342.5,375.37 343.0,375.08 343.5,374.56 344.0,373.77 344.5,372.67 345.0,371.23 345.5,369.42 346.0,367.25 346.5,364.70 347.0,361.77 347.5,358.49 348.0,354.87 348.5,350.93 349.0,346.70 349.5,342.24 350.0,337.58 350.5,332.77 351.0,327.87 351.5,322.93 352.0,318.01 352.5,313.17 353.0,308.47 353.5,303.97 354.0,299.72 354.5,295.79 355.0,292.22 355.5,289.05 356.0,286.34 356.5,284.11 357.0,282.39 357.5,281.22 358.0,280.60 358.5,280.55 359.0,281.05 359.5,282.12 360.0,283.72 360.5,285.85 361.0,288.47 361.5,291.55 362.0,295.04 362.5,298.91 363.0,303.10 363.5,307.55 364.0,312.22 364.5,317.04 365.0,321.94 365.5,326.88 366.0,331.80 366.5,336.63 367.0,341.32 367.5,345.83 368.0,350.10 368.5,354.10 369.0,357.79 369.5,361.15 370.0,364.14 370.5,366.77 371.0,369.02 371.5,370.90 372.0,372.41 372.5,373.58 373.0,374.43 373.5,374.99 374.0,375.32 374.5,375.47 375.0,375.50 375.5,375.52 376.0,375.64 376.5,375.93 377.0,376.45 377.5,377.24 378.0,378.33 378.5,379.76 379.0,381.55 379.5,383.69 380.0,386.21 380.5,389.09 381.0,392.32 381.5,395.89 382.0,399.76 382.5,403.90 383.0,408.28 383.5,412.85 384.0,417.56 384.5,422.37 385.0,427.20 385.5,432.02 386.0,436.75 386.5,441.34 387.0,445.74 387.5,449.88 388.0,453.72 388.5,457.20 389.0,460.27 389.5,462.91 390.0,465.06 390.5,466.72 391.0,467.84 391.5,468.42 392.0,468.44 392.5,467.92 393.0,466.85 393.5,465.25 394.0,463.15 394.5,460.56 395.0,457.52 395.5,454.08 396.0,450.28 396.5,446.17 397.0,441.79 397.5,437.22 398.0,432.50 398.5,427.69 399.0,422.85 399.5,418.04 400.0,413.32 400.5,408.73 401.0,404.33 401.5,400.16 402.0,396.26 402.5,392.66 403.0,389.40 403.5,386.48 404.0,383.93 404.5,381.74 405.0,379.92 405.5,378.46 406.0,377.33" fill="none" stroke="#4cd84c" stroke-width="1" shape-rendering="crispEdges"/>
<rect x="449" y="178" width="2" height="395" fill="#a8a8a8" />
<rect x="451" y="178" width="1" height="395" fill="#ffffff" />
<rect x="454" y="181" width="43" height="14" fill="#ffffff" />
<rect x="454" y="195" width="43" height="154" fill="#000" />
<path d="M454 183.5 Q454 181 456.5 181 H494.5 Q497 181 497 183.5 V195 H454 Z" fill="#00ffff"/>
<rect x="497" y="181" width="2" height="170" fill="#a0a0a0" />
<rect x="454" y="349" width="45" height="2" fill="#a0a0a0" />
<rect x="499" y="180" width="341" height="35" fill="#ffffff" />
<rect x="499" y="180" width="341" height="1" fill="#a8a8a8" />
<rect x="499" y="180" width="1" height="35" fill="#a8a8a8" />
<rect x="499" y="215" width="342" height="1" fill="#a0a0a0" />
<rect x="840" y="180" width="1" height="36" fill="#a0a0a0" />
<rect x="841" y="180" width="1" height="36" fill="#ffffff" />
<rect x="499" y="218" width="343" height="117" fill="#000" />
<path d="M533 218h1v1h-1zM533 221h1v1h-1zM533 224h1v1h-1zM533 227h1v1h-1zM533 230h1v1h-1zM533 233h1v1h-1zM533 236h1v1h-1zM533 238h1v1h-1zM533 241h1v1h-1zM533 244h1v1h-1zM533 247h1v1h-1zM533 250h1v1h-1zM533 253h1v1h-1zM533 256h1v1h-1zM533 259h1v1h-1zM533 262h1v1h-1zM533 265h1v1h-1zM533 268h1v1h-1zM533 271h1v1h-1zM533 274h1v1h-1zM533 276h1v1h-1zM533 279h1v1h-1zM533 282h1v1h-1zM533 285h1v1h-1zM533 288h1v1h-1zM533 291h1v1h-1zM533 294h1v1h-1zM533 297h1v1h-1zM533 300h1v1h-1zM533 303h1v1h-1zM533 306h1v1h-1zM533 309h1v1h-1zM533 312h1v1h-1zM533 315h1v1h-1zM533 317h1v1h-1zM533 320h1v1h-1zM533 323h1v1h-1zM533 326h1v1h-1zM533 329h1v1h-1zM533 332h1v1h-1zM567 218h1v1h-1zM567 221h1v1h-1zM567 224h1v1h-1zM567 227h1v1h-1zM567 230h1v1h-1zM567 233h1v1h-1zM567 236h1v1h-1zM567 238h1v1h-1zM567 241h1v1h-1zM567 244h1v1h-1zM567 247h1v1h-1zM567 250h1v1h-1zM567 253h1v1h-1zM567 256h1v1h-1zM567 259h1v1h-1zM567 262h1v1h-1zM567 265h1v1h-1zM567 268h1v1h-1zM567 271h1v1h-1zM567 274h1v1h-1zM567 276h1v1h-1zM567 279h1v1h-1zM567 282h1v1h-1zM567 285h1v1h-1zM567 288h1v1h-1zM567 291h1v1h-1zM567 294h1v1h-1zM567 297h1v1h-1zM567 300h1v1h-1zM567 303h1v1h-1zM567 306h1v1h-1zM567 309h1v1h-1zM567 312h1v1h-1zM567 315h1v1h-1zM567 317h1v1h-1zM567 320h1v1h-1zM567 323h1v1h-1zM567 326h1v1h-1zM567 329h1v1h-1zM567 332h1v1h-1zM601 218h1v1h-1zM601 221h1v1h-1zM601 224h1v1h-1zM601 227h1v1h-1zM601 230h1v1h-1zM601 233h1v1h-1zM601 236h1v1h-1zM601 238h1v1h-1zM601 241h1v1h-1zM601 244h1v1h-1zM601 247h1v1h-1zM601 250h1v1h-1zM601 253h1v1h-1zM601 256h1v1h-1zM601 259h1v1h-1zM601 262h1v1h-1zM601 265h1v1h-1zM601 268h1v1h-1zM601 271h1v1h-1zM601 274h1v1h-1zM601 276h1v1h-1zM601 279h1v1h-1zM601 282h1v1h-1zM601 285h1v1h-1zM601 288h1v1h-1zM601 291h1v1h-1zM601 294h1v1h-1zM601 297h1v1h-1zM601 300h1v1h-1zM601 303h1v1h-1zM601 306h1v1h-1zM601 309h1v1h-1zM601 312h1v1h-1zM601 315h1v1h-1zM601 317h1v1h-1zM601 320h1v1h-1zM601 323h1v1h-1zM601 326h1v1h-1zM601 329h1v1h-1zM601 332h1v1h-1zM636 218h1v1h-1zM636 221h1v1h-1zM636 224h1v1h-1zM636 227h1v1h-1zM636 230h1v1h-1zM636 233h1v1h-1zM636 236h1v1h-1zM636 238h1v1h-1zM636 241h1v1h-1zM636 244h1v1h-1zM636 247h1v1h-1zM636 250h1v1h-1zM636 253h1v1h-1zM636 256h1v1h-1zM636 259h1v1h-1zM636 262h1v1h-1zM636 265h1v1h-1zM636 268h1v1h-1zM636 271h1v1h-1zM636 274h1v1h-1zM636 276h1v1h-1zM636 279h1v1h-1zM636 282h1v1h-1zM636 285h1v1h-1zM636 288h1v1h-1zM636 291h1v1h-1zM636 294h1v1h-1zM636 297h1v1h-1zM636 300h1v1h-1zM636 303h1v1h-1zM636 306h1v1h-1zM636 309h1v1h-1zM636 312h1v1h-1zM636 315h1v1h-1zM636 317h1v1h-1zM636 320h1v1h-1zM636 323h1v1h-1zM636 326h1v1h-1zM636 329h1v1h-1zM636 332h1v1h-1zM670 218h1v1h-1zM670 221h1v1h-1zM670 224h1v1h-1zM670 227h1v1h-1zM670 230h1v1h-1zM670 233h1v1h-1zM670 236h1v1h-1zM670 238h1v1h-1zM670 241h1v1h-1zM670 244h1v1h-1zM670 247h1v1h-1zM670 250h1v1h-1zM670 253h1v1h-1zM670 256h1v1h-1zM670 259h1v1h-1zM670 262h1v1h-1zM670 265h1v1h-1zM670 268h1v1h-1zM670 271h1v1h-1zM670 274h1v1h-1zM670 276h1v1h-1zM670 279h1v1h-1zM670 282h1v1h-1zM670 285h1v1h-1zM670 288h1v1h-1zM670 291h1v1h-1zM670 294h1v1h-1zM670 297h1v1h-1zM670 300h1v1h-1zM670 303h1v1h-1zM670 306h1v1h-1zM670 309h1v1h-1zM670 312h1v1h-1zM670 315h1v1h-1zM670 317h1v1h-1zM670 320h1v1h-1zM670 323h1v1h-1zM670 326h1v1h-1zM670 329h1v1h-1zM670 332h1v1h-1zM704 218h1v1h-1zM704 221h1v1h-1zM704 224h1v1h-1zM704 227h1v1h-1zM704 230h1v1h-1zM704 233h1v1h-1zM704 236h1v1h-1zM704 238h1v1h-1zM704 241h1v1h-1zM704 244h1v1h-1zM704 247h1v1h-1zM704 250h1v1h-1zM704 253h1v1h-1zM704 256h1v1h-1zM704 259h1v1h-1zM704 262h1v1h-1zM704 265h1v1h-1zM704 268h1v1h-1zM704 271h1v1h-1zM704 274h1v1h-1zM704 276h1v1h-1zM704 279h1v1h-1zM704 282h1v1h-1zM704 285h1v1h-1zM704 288h1v1h-1zM704 291h1v1h-1zM704 294h1v1h-1zM704 297h1v1h-1zM704 300h1v1h-1zM704 303h1v1h-1zM704 306h1v1h-1zM704 309h1v1h-1zM704 312h1v1h-1zM704 315h1v1h-1zM704 317h1v1h-1zM704 320h1v1h-1zM704 323h1v1h-1zM704 326h1v1h-1zM704 329h1v1h-1zM704 332h1v1h-1zM739 218h1v1h-1zM739 221h1v1h-1zM739 224h1v1h-1zM739 227h1v1h-1zM739 230h1v1h-1zM739 233h1v1h-1zM739 236h1v1h-1zM739 238h1v1h-1zM739 241h1v1h-1zM739 244h1v1h-1zM739 247h1v1h-1zM739 250h1v1h-1zM739 253h1v1h-1zM739 256h1v1h-1zM739 259h1v1h-1zM739 262h1v1h-1zM739 265h1v1h-1zM739 268h1v1h-1zM739 271h1v1h-1zM739 274h1v1h-1zM739 276h1v1h-1zM739 279h1v1h-1zM739 282h1v1h-1zM739 285h1v1h-1zM739 288h1v1h-1zM739 291h1v1h-1zM739 294h1v1h-1zM739 297h1v1h-1zM739 300h1v1h-1zM739 303h1v1h-1zM739 306h1v1h-1zM739 309h1v1h-1zM739 312h1v1h-1zM739 315h1v1h-1zM739 317h1v1h-1zM739 320h1v1h-1zM739 323h1v1h-1zM739 326h1v1h-1zM739 329h1v1h-1zM739 332h1v1h-1zM773 218h1v1h-1zM773 221h1v1h-1zM773 224h1v1h-1zM773 227h1v1h-1zM773 230h1v1h-1zM773 233h1v1h-1zM773 236h1v1h-1zM773 238h1v1h-1zM773 241h1v1h-1zM773 244h1v1h-1zM773 247h1v1h-1zM773 250h1v1h-1zM773 253h1v1h-1zM773 256h1v1h-1zM773 259h1v1h-1zM773 262h1v1h-1zM773 265h1v1h-1zM773 268h1v1h-1zM773 271h1v1h-1zM773 274h1v1h-1zM773 276h1v1h-1zM773 279h1v1h-1zM773 282h1v1h-1zM773 285h1v1h-1zM773 288h1v1h-1zM773 291h1v1h-1zM773 294h1v1h-1zM773 297h1v1h-1zM773 300h1v1h-1zM773 303h1v1h-1zM773 306h1v1h-1zM773 309h1v1h-1zM773 312h1v1h-1zM773 315h1v1h-1zM773 317h1v1h-1zM773 320h1v1h-1zM773 323h1v1h-1zM773 326h1v1h-1zM773 329h1v1h-1zM773 332h1v1h-1zM807 218h1v1h-1zM807 221h1v1h-1zM807 224h1v1h-1zM807 227h1v1h-1zM807 230h1v1h-1zM807 233h1v1h-1zM807 236h1v1h-1zM807 238h1v1h-1zM807 241h1v1h-1zM807 244h1v1h-1zM807 247h1v1h-1zM807 250h1v1h-1zM807 253h1v1h-1zM807 256h1v1h-1zM807 259h1v1h-1zM807 262h1v1h-1zM807 265h1v1h-1zM807 268h1v1h-1zM807 271h1v1h-1zM807 274h1v1h-1zM807 276h1v1h-1zM807 279h1v1h-1zM807 282h1v1h-1zM807 285h1v1h-1zM807 288h1v1h-1zM807 291h1v1h-1zM807 294h1v1h-1zM807 297h1v1h-1zM807 300h1v1h-1zM807 303h1v1h-1zM807 306h1v1h-1zM807 309h1v1h-1zM807 312h1v1h-1zM807 315h1v1h-1zM807 317h1v1h-1zM807 320h1v1h-1zM807 323h1v1h-1zM807 326h1v1h-1zM807 329h1v1h-1zM807 332h1v1h-1zM499 232h1v1h-1zM506 232h1v1h-1zM513 232h1v1h-1zM520 232h1v1h-1zM526 232h1v1h-1zM533 232h1v1h-1zM540 232h1v1h-1zM547 232h1v1h-1zM554 232h1v1h-1zM561 232h1v1h-1zM568 232h1v1h-1zM574 232h1v1h-1zM581 232h1v1h-1zM588 232h1v1h-1zM595 232h1v1h-1zM602 232h1v1h-1zM609 232h1v1h-1zM616 232h1v1h-1zM622 232h1v1h-1zM629 232h1v1h-1zM636 232h1v1h-1zM643 232h1v1h-1zM650 232h1v1h-1zM657 232h1v1h-1zM664 232h1v1h-1zM670 232h1v1h-1zM677 232h1v1h-1zM684 232h1v1h-1zM691 232h1v1h-1zM698 232h1v1h-1zM705 232h1v1h-1zM712 232h1v1h-1zM719 232h1v1h-1zM725 232h1v1h-1zM732 232h1v1h-1zM739 232h1v1h-1zM746 232h1v1h-1zM753 232h1v1h-1zM760 232h1v1h-1zM767 232h1v1h-1zM773 232h1v1h-1zM780 232h1v1h-1zM787 232h1v1h-1zM794 232h1v1h-1zM801 232h1v1h-1zM808 232h1v1h-1zM815 232h1v1h-1zM821 232h1v1h-1zM828 232h1v1h-1zM835 232h1v1h-1zM499 247h1v1h-1zM506 247h1v1h-1zM513 247h1v1h-1zM520 247h1v1h-1zM526 247h1v1h-1zM533 247h1v1h-1zM540 247h1v1h-1zM547 247h1v1h-1zM554 247h1v1h-1zM561 247h1v1h-1zM568 247h1v1h-1zM574 247h1v1h-1zM581 247h1v1h-1zM588 247h1v1h-1zM595 247h1v1h-1zM602 247h1v1h-1zM609 247h1v1h-1zM616 247h1v1h-1zM622 247h1v1h-1zM629 247h1v1h-1zM636 247h1v1h-1zM643 247h1v1h-1zM650 247h1v1h-1zM657 247h1v1h-1zM664 247h1v1h-1zM670 247h1v1h-1zM677 247h1v1h-1zM684 247h1v1h-1zM691 247h1v1h-1zM698 247h1v1h-1zM705 247h1v1h-1zM712 247h1v1h-1zM719 247h1v1h-1zM725 247h1v1h-1zM732 247h1v1h-1zM739 247h1v1h-1zM746 247h1v1h-1zM753 247h1v1h-1zM760 247h1v1h-1zM767 247h1v1h-1zM773 247h1v1h-1zM780 247h1v1h-1zM787 247h1v1h-1zM794 247h1v1h-1zM801 247h1v1h-1zM808 247h1v1h-1zM815 247h1v1h-1zM821 247h1v1h-1zM828 247h1v1h-1zM835 247h1v1h-1zM499 261h1v1h-1zM506 261h1v1h-1zM513 261h1v1h-1zM520 261h1v1h-1zM526 261h1v1h-1zM533 261h1v1h-1zM540 261h1v1h-1zM547 261h1v1h-1zM554 261h1v1h-1zM561 261h1v1h-1zM568 261h1v1h-1zM574 261h1v1h-1zM581 261h1v1h-1zM588 261h1v1h-1zM595 261h1v1h-1zM602 261h1v1h-1zM609 261h1v1h-1zM616 261h1v1h-1zM622 261h1v1h-1zM629 261h1v1h-1zM636 261h1v1h-1zM643 261h1v1h-1zM650 261h1v1h-1zM657 261h1v1h-1zM664 261h1v1h-1zM670 261h1v1h-1zM677 261h1v1h-1zM684 261h1v1h-1zM691 261h1v1h-1zM698 261h1v1h-1zM705 261h1v1h-1zM712 261h1v1h-1zM719 261h1v1h-1zM725 261h1v1h-1zM732 261h1v1h-1zM739 261h1v1h-1zM746 261h1v1h-1zM753 261h1v1h-1zM760 261h1v1h-1zM767 261h1v1h-1zM773 261h1v1h-1zM780 261h1v1h-1zM787 261h1v1h-1zM794 261h1v1h-1zM801 261h1v1h-1zM808 261h1v1h-1zM815 261h1v1h-1zM821 261h1v1h-1zM828 261h1v1h-1zM835 261h1v1h-1zM499 276h1v1h-1zM506 276h1v1h-1zM513 276h1v1h-1zM520 276h1v1h-1zM526 276h1v1h-1zM533 276h1v1h-1zM540 276h1v1h-1zM547 276h1v1h-1zM554 276h1v1h-1zM561 276h1v1h-1zM568 276h1v1h-1zM574 276h1v1h-1zM581 276h1v1h-1zM588 276h1v1h-1zM595 276h1v1h-1zM602 276h1v1h-1zM609 276h1v1h-1zM616 276h1v1h-1zM622 276h1v1h-1zM629 276h1v1h-1zM636 276h1v1h-1zM643 276h1v1h-1zM650 276h1v1h-1zM657 276h1v1h-1zM664 276h1v1h-1zM670 276h1v1h-1zM677 276h1v1h-1zM684 276h1v1h-1zM691 276h1v1h-1zM698 276h1v1h-1zM705 276h1v1h-1zM712 276h1v1h-1zM719 276h1v1h-1zM725 276h1v1h-1zM732 276h1v1h-1zM739 276h1v1h-1zM746 276h1v1h-1zM753 276h1v1h-1zM760 276h1v1h-1zM767 276h1v1h-1zM773 276h1v1h-1zM780 276h1v1h-1zM787 276h1v1h-1zM794 276h1v1h-1zM801 276h1v1h-1zM808 276h1v1h-1zM815 276h1v1h-1zM821 276h1v1h-1zM828 276h1v1h-1zM835 276h1v1h-1zM499 291h1v1h-1zM506 291h1v1h-1zM513 291h1v1h-1zM520 291h1v1h-1zM526 291h1v1h-1zM533 291h1v1h-1zM540 291h1v1h-1zM547 291h1v1h-1zM554 291h1v1h-1zM561 291h1v1h-1zM568 291h1v1h-1zM574 291h1v1h-1zM581 291h1v1h-1zM588 291h1v1h-1zM595 291h1v1h-1zM602 291h1v1h-1zM609 291h1v1h-1zM616 291h1v1h-1zM622 291h1v1h-1zM629 291h1v1h-1zM636 291h1v1h-1zM643 291h1v1h-1zM650 291h1v1h-1zM657 291h1v1h-1zM664 291h1v1h-1zM670 291h1v1h-1zM677 291h1v1h-1zM684 291h1v1h-1zM691 291h1v1h-1zM698 291h1v1h-1zM705 291h1v1h-1zM712 291h1v1h-1zM719 291h1v1h-1zM725 291h1v1h-1zM732 291h1v1h-1zM739 291h1v1h-1zM746 291h1v1h-1zM753 291h1v1h-1zM760 291h1v1h-1zM767 291h1v1h-1zM773 291h1v1h-1zM780 291h1v1h-1zM787 291h1v1h-1zM794 291h1v1h-1zM801 291h1v1h-1zM808 291h1v1h-1zM815 291h1v1h-1zM821 291h1v1h-1zM828 291h1v1h-1zM835 291h1v1h-1zM499 305h1v1h-1zM506 305h1v1h-1zM513 305h1v1h-1zM520 305h1v1h-1zM526 305h1v1h-1zM533 305h1v1h-1zM540 305h1v1h-1zM547 305h1v1h-1zM554 305h1v1h-1zM561 305h1v1h-1zM568 305h1v1h-1zM574 305h1v1h-1zM581 305h1v1h-1zM588 305h1v1h-1zM595 305h1v1h-1zM602 305h1v1h-1zM609 305h1v1h-1zM616 305h1v1h-1zM622 305h1v1h-1zM629 305h1v1h-1zM636 305h1v1h-1zM643 305h1v1h-1zM650 305h1v1h-1zM657 305h1v1h-1zM664 305h1v1h-1zM670 305h1v1h-1zM677 305h1v1h-1zM684 305h1v1h-1zM691 305h1v1h-1zM698 305h1v1h-1zM705 305h1v1h-1zM712 305h1v1h-1zM719 305h1v1h-1zM725 305h1v1h-1zM732 305h1v1h-1zM739 305h1v1h-1zM746 305h1v1h-1zM753 305h1v1h-1zM760 305h1v1h-1zM767 305h1v1h-1zM773 305h1v1h-1zM780 305h1v1h-1zM787 305h1v1h-1zM794 305h1v1h-1zM801 305h1v1h-1zM808 305h1v1h-1zM815 305h1v1h-1zM821 305h1v1h-1zM828 305h1v1h-1zM835 305h1v1h-1zM499 320h1v1h-1zM506 320h1v1h-1zM513 320h1v1h-1zM520 320h1v1h-1zM526 320h1v1h-1zM533 320h1v1h-1zM540 320h1v1h-1zM547 320h1v1h-1zM554 320h1v1h-1zM561 320h1v1h-1zM568 320h1v1h-1zM574 320h1v1h-1zM581 320h1v1h-1zM588 320h1v1h-1zM595 320h1v1h-1zM602 320h1v1h-1zM609 320h1v1h-1zM616 320h1v1h-1zM622 320h1v1h-1zM629 320h1v1h-1zM636 320h1v1h-1zM643 320h1v1h-1zM650 320h1v1h-1zM657 320h1v1h-1zM664 320h1v1h-1zM670 320h1v1h-1zM677 320h1v1h-1zM684 320h1v1h-1zM691 320h1v1h-1zM698 320h1v1h-1zM705 320h1v1h-1zM712 320h1v1h-1zM719 320h1v1h-1zM725 320h1v1h-1zM732 320h1v1h-1zM739 320h1v1h-1zM746 320h1v1h-1zM753 320h1v1h-1zM760 320h1v1h-1zM767 320h1v1h-1zM773 320h1v1h-1zM780 320h1v1h-1zM787 320h1v1h-1zM794 320h1v1h-1zM801 320h1v1h-1zM808 320h1v1h-1zM815 320h1v1h-1zM821 320h1v1h-1zM828 320h1v1h-1zM835 320h1v1h-1z" fill="#c8c8c8" shape-rendering="crispEdges"/>
<rect x="499" y="335" width="343" height="14" fill="#f0f0f0" />
<rect x="499" y="335" width="343" height="1" fill="#ffffff" />
<rect x="499" y="335" width="1" height="14" fill="#ffffff" />
<rect x="499" y="348" width="343" height="1" fill="#101010" />
<rect x="825" y="335" width="1" height="14" fill="#101010" />
<rect x="826" y="335" width="16" height="14" fill="#f0f0f0" />
<rect x="826" y="335" width="16" height="1" fill="#ffffff" />
<rect x="826" y="335" width="1" height="14" fill="#ffffff" />
<rect x="826" y="348" width="16" height="1" fill="#101010" />
<rect x="841" y="335" width="1" height="14" fill="#101010" />
<rect x="827" y="347" width="14" height="1" fill="#a0a0a0" />
<rect x="840" y="336" width="1" height="12" fill="#a0a0a0" />
<path d="M831 339 L837.5 342 L831 345 Z" fill="#000"/>
<path d="M502.8 342.3 L509 339 L509 345 Z" fill="#000"/>
<path d="M514.5 335.5 L520.5 343 L515.5 343 L515.5 349 L513.5 349 L513.5 343 L509.5 343 Z" fill="#000"/>
<rect x="452" y="351" width="432" height="1" fill="#ffffff" />
<rect x="454" y="352" width="427" height="18" fill="#000" />
<rect x="454" y="370" width="429" height="2" fill="#a0a0a0" />
<rect x="881" y="352" width="1" height="20" fill="#a0a0a0" />
<text x="499.0" y="366" font-family="Liberation Sans" font-size="11" fill="#ffffff" text-anchor="middle" font-weight="normal" stroke="#ffffff" stroke-width="0.25">0 s</text>
<text x="567.75" y="366" font-family="Liberation Sans" font-size="11" fill="#ffffff" text-anchor="middle" font-weight="normal" stroke="#ffffff" stroke-width="0.25">20.0 µs</text>
<text x="636.5" y="366" font-family="Liberation Sans" font-size="11" fill="#ffffff" text-anchor="middle" font-weight="normal" stroke="#ffffff" stroke-width="0.25">40.0 µs</text>
<text x="705.25" y="366" font-family="Liberation Sans" font-size="11" fill="#ffffff" text-anchor="middle" font-weight="normal" stroke="#ffffff" stroke-width="0.25">60.0 µs</text>
<text x="774.0" y="366" font-family="Liberation Sans" font-size="11" fill="#ffffff" text-anchor="middle" font-weight="normal" stroke="#ffffff" stroke-width="0.25">80.0 µs</text>
<text x="842.75" y="366" font-family="Liberation Sans" font-size="11" fill="#ffffff" text-anchor="middle" font-weight="normal" stroke="#ffffff" stroke-width="0.25">100.0 µs</text>
<rect x="455" y="210" width="41" height="15" rx="5" ry="5" fill="#00ffff"/>
<text x="476.0" y="222.6" font-family="Liberation Sans" font-size="11" fill="#000" text-anchor="middle" font-weight="normal" >20.000</text>
<rect x="455" y="327" width="41" height="15" rx="5" ry="5" fill="#00ffff"/>
<text x="476.0" y="339.6" font-family="Liberation Sans" font-size="11" fill="#000" text-anchor="middle" font-weight="normal" >-20.000</text>
<text x="493.5" y="252.39999999999998" font-family="Liberation Sans" font-size="11" fill="#00e0f0" text-anchor="end" font-weight="normal" >10.000</text>
<text x="493.5" y="281.8" font-family="Liberation Sans" font-size="11" fill="#00e0f0" text-anchor="end" font-weight="normal" >0.000</text>
<text x="493.5" y="311.2" font-family="Liberation Sans" font-size="11" fill="#00e0f0" text-anchor="end" font-weight="normal" >-10.000</text>
<polyline points="499.0,285.50 499.5,284.91 500.0,284.32 500.5,283.73 501.0,283.14 501.5,282.55 502.0,281.95 502.5,281.36 503.0,280.77 503.5,280.18 504.0,279.59 504.5,279.00 505.0,278.40 505.5,277.81 506.0,277.22 506.5,276.63 507.0,276.04 507.5,275.45 508.0,274.85 508.5,274.26 509.0,273.67 509.5,273.08 510.0,272.49 510.5,271.90 511.0,271.31 511.5,270.71 512.0,270.12 512.5,269.53 513.0,268.94 513.5,268.35 514.0,267.76 514.5,267.16 515.0,266.57 515.5,265.98 516.0,265.39 516.5,264.80 517.0,264.21 517.5,263.61 518.0,263.02 518.5,262.43 519.0,261.84 519.5,261.25 520.0,260.66 520.5,260.06 521.0,259.47 521.5,258.88 522.0,258.29 522.5,257.70 523.0,257.11 523.5,256.51 524.0,255.92 524.5,256.04 525.0,256.63 525.5,257.22 526.0,257.82 526.5,258.41 527.0,259.00 527.5,259.59 528.0,260.18 528.5,260.77 529.0,261.37 529.5,261.96 530.0,262.55 530.5,263.14 531.0,263.73 531.5,264.32 532.0,264.92 532.5,265.51 533.0,266.10 533.5,266.69 534.0,267.28 534.5,267.87 535.0,268.47 535.5,269.06 536.0,269.65 536.5,270.24 537.0,270.83 537.5,271.42 538.0,272.01 538.5,272.61 539.0,273.20 539.5,273.79 540.0,274.38 540.5,274.97 541.0,275.56 541.5,276.16 542.0,276.75 542.5,277.34 543.0,277.93 543.5,278.52 544.0,279.11 544.5,279.71 545.0,280.30 545.5,280.89 546.0,281.48 546.5,282.07 547.0,282.66 547.5,283.26 548.0,283.85 548.5,284.44 549.0,285.03 549.5,285.62 550.0,286.21 550.5,286.81 551.0,287.40 551.5,287.99 552.0,288.58 552.5,289.17 553.0,289.76 553.5,290.36 554.0,290.95 554.5,291.54 555.0,292.13 555.5,292.72 556.0,293.31 556.5,293.90 557.0,294.50 557.5,295.09 558.0,295.68 558.5,296.27 559.0,296.86 559.5,297.45 560.0,296.98 560.5,296.39 561.0,295.80 561.5,295.21 562.0,294.61 562.5,294.02 563.0,293.43 563.5,292.84 564.0,292.25 564.5,291.66 565.0,291.07 565.5,290.47 566.0,289.88 566.5,289.29 567.0,288.70 567.5,288.11 568.0,287.52 568.5,286.92 569.0,286.33 569.5,285.74 570.0,285.15 570.5,284.56 571.0,283.97 571.5,283.37 572.0,282.78 572.5,282.19 573.0,281.60 573.5,281.01 574.0,280.42 574.5,279.82 575.0,279.23 575.5,278.64 576.0,278.05 576.5,277.46 577.0,276.87 577.5,276.27 578.0,275.68 578.5,275.09 579.0,274.50 579.5,273.91 580.0,273.32 580.5,272.72 581.0,272.13 581.5,271.54 582.0,270.95 582.5,270.36 583.0,269.77 583.5,269.18 584.0,268.58 584.5,267.99 585.0,267.40 585.5,266.81 586.0,266.22 586.5,265.63 587.0,265.03 587.5,264.44 588.0,263.85 588.5,263.26 589.0,262.67 589.5,262.08 590.0,261.48 590.5,260.89 591.0,260.30 591.5,259.71 592.0,259.12 592.5,258.53 593.0,257.93 593.5,257.34 594.0,256.75 594.5,256.16 595.0,255.80 595.5,256.40 596.0,256.99 596.5,257.58 597.0,258.17 597.5,258.76 598.0,259.35 598.5,259.95 599.0,260.54 599.5,261.13 600.0,261.72 600.5,262.31 601.0,262.90 601.5,263.50 602.0,264.09 602.5,264.68 603.0,265.27 603.5,265.86 604.0,266.45 604.5,267.05 605.0,267.64 605.5,268.23 606.0,268.82 606.5,269.41 607.0,270.00 607.5,270.60 608.0,271.19 608.5,271.78 609.0,272.37 609.5,272.96 610.0,273.55 610.5,274.14 611.0,274.74 611.5,275.33 612.0,275.92 612.5,276.51 613.0,277.10 613.5,277.69 614.0,278.29 614.5,278.88 615.0,279.47 615.5,280.06 616.0,280.65 616.5,281.24 617.0,281.84 617.5,282.43 618.0,283.02 618.5,283.61 619.0,284.20 619.5,284.79 620.0,285.39 620.5,285.98 621.0,286.57 621.5,287.16 622.0,287.75 622.5,288.34 623.0,288.94 623.5,289.53 624.0,290.12 624.5,290.71 625.0,291.30 625.5,291.89 626.0,292.48 626.5,293.08 627.0,293.67 627.5,294.26 628.0,294.85 628.5,295.44 629.0,296.03 629.5,296.63 630.0,297.22 630.5,297.22 631.0,296.63 631.5,296.03 632.0,295.44 632.5,294.85 633.0,294.26 633.5,293.67 634.0,293.08 634.5,292.48 635.0,291.89 635.5,291.30 636.0,290.71 636.5,290.12 637.0,289.53 637.5,288.94 638.0,288.34 638.5,287.75 639.0,287.16 639.5,286.57 640.0,285.98 640.5,285.39 641.0,284.79 641.5,284.20 642.0,283.61 642.5,283.02 643.0,282.43 643.5,281.84 644.0,281.24 644.5,280.65 645.0,280.06 645.5,279.47 646.0,278.88 646.5,278.29 647.0,277.69 647.5,277.10 648.0,276.51 648.5,275.92 649.0,275.33 649.5,274.74 650.0,274.14 650.5,273.55 651.0,272.96 651.5,272.37 652.0,271.78 652.5,271.19 653.0,270.60 653.5,270.00 654.0,269.41 654.5,268.82 655.0,268.23 655.5,267.64 656.0,267.05 656.5,266.45 657.0,265.86 657.5,265.27 658.0,264.68 658.5,264.09 659.0,263.50 659.5,262.90 660.0,262.31 660.5,261.72 661.0,261.13 661.5,260.54 662.0,259.95 662.5,259.35 663.0,258.76 663.5,258.17 664.0,257.58 664.5,256.99 665.0,256.40 665.5,255.80 666.0,256.16 666.5,256.75 667.0,257.34 667.5,257.93 668.0,258.53 668.5,259.12 669.0,259.71 669.5,260.30 670.0,260.89 670.5,261.48 671.0,262.08 671.5,262.67 672.0,263.26 672.5,263.85 673.0,264.44 673.5,265.03 674.0,265.63 674.5,266.22 675.0,266.81 675.5,267.40 676.0,267.99 676.5,268.58 677.0,269.18 677.5,269.77 678.0,270.36 678.5,270.95 679.0,271.54 679.5,272.13 680.0,272.72 680.5,273.32 681.0,273.91 681.5,274.50 682.0,275.09 682.5,275.68 683.0,276.27 683.5,276.87 684.0,277.46 684.5,278.05 685.0,278.64 685.5,279.23 686.0,279.82 686.5,280.42 687.0,281.01 687.5,281.60 688.0,282.19 688.5,282.78 689.0,283.37 689.5,283.97 690.0,284.56 690.5,285.15 691.0,285.74 691.5,286.33 692.0,286.92 692.5,287.52 693.0,288.11 693.5,288.70 694.0,289.29 694.5,289.88 695.0,290.47 695.5,291.07 696.0,291.66 696.5,292.25 697.0,292.84 697.5,293.43 698.0,294.02 698.5,294.61 699.0,295.21 699.5,295.80 700.0,296.39 700.5,296.98 701.0,297.45 701.5,296.86 702.0,296.27 702.5,295.68 703.0,295.09 703.5,294.50 704.0,293.90 704.5,293.31 705.0,292.72 705.5,292.13 706.0,291.54 706.5,290.95 707.0,290.36 707.5,289.76 708.0,289.17 708.5,288.58 709.0,287.99 709.5,287.40 710.0,286.81 710.5,286.21 711.0,285.62 711.5,285.03 712.0,284.44 712.5,283.85 713.0,283.26 713.5,282.66 714.0,282.07 714.5,281.48 715.0,280.89 715.5,280.30 716.0,279.71 716.5,279.11 717.0,278.52 717.5,277.93 718.0,277.34 718.5,276.75 719.0,276.16 719.5,275.56 720.0,274.97 720.5,274.38 721.0,273.79 721.5,273.20 722.0,272.61 722.5,272.01 723.0,271.42 723.5,270.83 724.0,270.24 724.5,269.65 725.0,269.06 725.5,268.47 726.0,267.87 726.5,267.28 727.0,266.69 727.5,266.10 728.0,265.51 728.5,264.92 729.0,264.32 729.5,263.73 730.0,263.14 730.5,262.55 731.0,261.96 731.5,261.37 732.0,260.77 732.5,260.18 733.0,259.59 733.5,259.00 734.0,258.41 734.5,257.82 735.0,257.22 735.5,256.63 736.0,256.04 736.5,255.92 737.0,256.51 737.5,257.11 738.0,257.70 738.5,258.29 739.0,258.88 739.5,259.47 740.0,260.06 740.5,260.66 741.0,261.25 741.5,261.84 742.0,262.43 742.5,263.02 743.0,263.61 743.5,264.21 744.0,264.80 744.5,265.39 745.0,265.98 745.5,266.57 746.0,267.16 746.5,267.76 747.0,268.35 747.5,268.94 748.0,269.53 748.5,270.12 749.0,270.71 749.5,271.31 750.0,271.90 750.5,272.49 751.0,273.08 751.5,273.67 752.0,274.26 752.5,274.85 753.0,275.45 753.5,276.04 754.0,276.63 754.5,277.22 755.0,277.81 755.5,278.40 756.0,279.00 756.5,279.59 757.0,280.18 757.5,280.77 758.0,281.36 758.5,281.95 759.0,282.55 759.5,283.14 760.0,283.73 760.5,284.32 761.0,284.91 761.5,285.50 762.0,286.10 762.5,286.69 763.0,287.28 763.5,287.87 764.0,288.46 764.5,289.05 765.0,289.65 765.5,290.24 766.0,290.83 766.5,291.42 767.0,292.01 767.5,292.60 768.0,293.19 768.5,293.79 769.0,294.38 769.5,294.97 770.0,295.56 770.5,296.15 771.0,296.74 771.5,297.34 772.0,297.10 772.5,296.51 773.0,295.92 773.5,295.32 774.0,294.73 774.5,294.14 775.0,293.55 775.5,292.96 776.0,292.37 776.5,291.78 777.0,291.18 777.5,290.59 778.0,290.00 778.5,289.41 779.0,288.82 779.5,288.23 780.0,287.63 780.5,287.04 781.0,286.45 781.5,285.86 782.0,285.27 782.5,284.68 783.0,284.08 783.5,283.49 784.0,282.90 784.5,282.31 785.0,281.72 785.5,281.13 786.0,280.53 786.5,279.94 787.0,279.35 787.5,278.76 788.0,278.17 788.5,277.58 789.0,276.98 789.5,276.39 790.0,275.80 790.5,275.21 791.0,274.62 791.5,274.03 792.0,273.43 792.5,272.84 793.0,272.25 793.5,271.66 794.0,271.07 794.5,270.48 795.0,269.89 795.5,269.29 796.0,268.70 796.5,268.11 797.0,267.52 797.5,266.93 798.0,266.34 798.5,265.74 799.0,265.15 799.5,264.56 800.0,263.97 800.5,263.38 801.0,262.79 801.5,262.19 802.0,261.60 802.5,261.01 803.0,260.42 803.5,259.83 804.0,259.24 804.5,258.64 805.0,258.05 805.5,257.46 806.0,256.87 806.5,256.28 807.0,255.69 807.5,256.28 808.0,256.87 808.5,257.46 809.0,258.05 809.5,258.64 810.0,259.24 810.5,259.83 811.0,260.42 811.5,261.01 812.0,261.60 812.5,262.19 813.0,262.79 813.5,263.38 814.0,263.97 814.5,264.56 815.0,265.15 815.5,265.74 816.0,266.34 816.5,266.93 817.0,267.52 817.5,268.11 818.0,268.70 818.5,269.29 819.0,269.89 819.5,270.48 820.0,271.07 820.5,271.66 821.0,272.25 821.5,272.84 822.0,273.43 822.5,274.03 823.0,274.62 823.5,275.21 824.0,275.80 824.5,276.39 825.0,276.98 825.5,277.58 826.0,278.17 826.5,278.76 827.0,279.35 827.5,279.94 828.0,280.53 828.5,281.13 829.0,281.72 829.5,282.31 830.0,282.90 830.5,283.49 831.0,284.08 831.5,284.68 832.0,285.27 832.5,285.86 833.0,286.45 833.5,287.04 834.0,287.63 834.5,288.23 835.0,288.82 835.5,289.41 836.0,290.00 836.5,290.59 837.0,291.18 837.5,291.78 838.0,292.37 838.5,292.96 839.0,293.55 839.5,294.14 840.0,294.73 840.5,295.32 841.0,295.92 841.5,296.51 842.0,297.10" fill="none" stroke="#48c8d8" stroke-width="1" shape-rendering="crispEdges"/>
<rect x="449" y="372" width="435" height="5" fill="#f0f0f0" />
<rect x="452" y="372" width="432" height="2" fill="#ffffff" />
<rect x="449" y="374" width="435" height="3" fill="#a8a8a8" />
<rect x="454" y="380" width="52" height="14" fill="#ffffff" />
<rect x="454" y="394" width="52" height="154" fill="#000" />
<path d="M454 382.5 Q454 380 456.5 380 H503.5 Q506 380 506 382.5 V394 H454 Z" fill="#00ff00"/>
<rect x="506" y="380" width="2" height="170" fill="#a0a0a0" />
<rect x="454" y="548" width="54" height="2" fill="#a0a0a0" />
<rect x="508" y="379" width="332" height="36" fill="#ffffff" />
<rect x="508" y="379" width="332" height="1" fill="#a8a8a8" />
<rect x="508" y="379" width="1" height="36" fill="#a8a8a8" />
<rect x="508" y="415" width="333" height="1" fill="#a0a0a0" />
<rect x="840" y="379" width="1" height="37" fill="#a0a0a0" />
<rect x="841" y="379" width="1" height="37" fill="#ffffff" />
<rect x="508" y="417" width="334" height="117" fill="#000" />
<path d="M549 417h1v1h-1zM549 420h1v1h-1zM549 423h1v1h-1zM549 426h1v1h-1zM549 429h1v1h-1zM549 432h1v1h-1zM549 435h1v1h-1zM549 437h1v1h-1zM549 440h1v1h-1zM549 443h1v1h-1zM549 446h1v1h-1zM549 449h1v1h-1zM549 452h1v1h-1zM549 455h1v1h-1zM549 458h1v1h-1zM549 461h1v1h-1zM549 464h1v1h-1zM549 467h1v1h-1zM549 470h1v1h-1zM549 473h1v1h-1zM549 476h1v1h-1zM549 478h1v1h-1zM549 481h1v1h-1zM549 484h1v1h-1zM549 487h1v1h-1zM549 490h1v1h-1zM549 493h1v1h-1zM549 496h1v1h-1zM549 499h1v1h-1zM549 502h1v1h-1zM549 505h1v1h-1zM549 508h1v1h-1zM549 511h1v1h-1zM549 514h1v1h-1zM549 516h1v1h-1zM549 519h1v1h-1zM549 522h1v1h-1zM549 525h1v1h-1zM549 528h1v1h-1zM549 531h1v1h-1zM591 417h1v1h-1zM591 420h1v1h-1zM591 423h1v1h-1zM591 426h1v1h-1zM591 429h1v1h-1zM591 432h1v1h-1zM591 435h1v1h-1zM591 437h1v1h-1zM591 440h1v1h-1zM591 443h1v1h-1zM591 446h1v1h-1zM591 449h1v1h-1zM591 452h1v1h-1zM591 455h1v1h-1zM591 458h1v1h-1zM591 461h1v1h-1zM591 464h1v1h-1zM591 467h1v1h-1zM591 470h1v1h-1zM591 473h1v1h-1zM591 476h1v1h-1zM591 478h1v1h-1zM591 481h1v1h-1zM591 484h1v1h-1zM591 487h1v1h-1zM591 490h1v1h-1zM591 493h1v1h-1zM591 496h1v1h-1zM591 499h1v1h-1zM591 502h1v1h-1zM591 505h1v1h-1zM591 508h1v1h-1zM591 511h1v1h-1zM591 514h1v1h-1zM591 516h1v1h-1zM591 519h1v1h-1zM591 522h1v1h-1zM591 525h1v1h-1zM591 528h1v1h-1zM591 531h1v1h-1zM633 417h1v1h-1zM633 420h1v1h-1zM633 423h1v1h-1zM633 426h1v1h-1zM633 429h1v1h-1zM633 432h1v1h-1zM633 435h1v1h-1zM633 437h1v1h-1zM633 440h1v1h-1zM633 443h1v1h-1zM633 446h1v1h-1zM633 449h1v1h-1zM633 452h1v1h-1zM633 455h1v1h-1zM633 458h1v1h-1zM633 461h1v1h-1zM633 464h1v1h-1zM633 467h1v1h-1zM633 470h1v1h-1zM633 473h1v1h-1zM633 476h1v1h-1zM633 478h1v1h-1zM633 481h1v1h-1zM633 484h1v1h-1zM633 487h1v1h-1zM633 490h1v1h-1zM633 493h1v1h-1zM633 496h1v1h-1zM633 499h1v1h-1zM633 502h1v1h-1zM633 505h1v1h-1zM633 508h1v1h-1zM633 511h1v1h-1zM633 514h1v1h-1zM633 516h1v1h-1zM633 519h1v1h-1zM633 522h1v1h-1zM633 525h1v1h-1zM633 528h1v1h-1zM633 531h1v1h-1zM675 417h1v1h-1zM675 420h1v1h-1zM675 423h1v1h-1zM675 426h1v1h-1zM675 429h1v1h-1zM675 432h1v1h-1zM675 435h1v1h-1zM675 437h1v1h-1zM675 440h1v1h-1zM675 443h1v1h-1zM675 446h1v1h-1zM675 449h1v1h-1zM675 452h1v1h-1zM675 455h1v1h-1zM675 458h1v1h-1zM675 461h1v1h-1zM675 464h1v1h-1zM675 467h1v1h-1zM675 470h1v1h-1zM675 473h1v1h-1zM675 476h1v1h-1zM675 478h1v1h-1zM675 481h1v1h-1zM675 484h1v1h-1zM675 487h1v1h-1zM675 490h1v1h-1zM675 493h1v1h-1zM675 496h1v1h-1zM675 499h1v1h-1zM675 502h1v1h-1zM675 505h1v1h-1zM675 508h1v1h-1zM675 511h1v1h-1zM675 514h1v1h-1zM675 516h1v1h-1zM675 519h1v1h-1zM675 522h1v1h-1zM675 525h1v1h-1zM675 528h1v1h-1zM675 531h1v1h-1zM716 417h1v1h-1zM716 420h1v1h-1zM716 423h1v1h-1zM716 426h1v1h-1zM716 429h1v1h-1zM716 432h1v1h-1zM716 435h1v1h-1zM716 437h1v1h-1zM716 440h1v1h-1zM716 443h1v1h-1zM716 446h1v1h-1zM716 449h1v1h-1zM716 452h1v1h-1zM716 455h1v1h-1zM716 458h1v1h-1zM716 461h1v1h-1zM716 464h1v1h-1zM716 467h1v1h-1zM716 470h1v1h-1zM716 473h1v1h-1zM716 476h1v1h-1zM716 478h1v1h-1zM716 481h1v1h-1zM716 484h1v1h-1zM716 487h1v1h-1zM716 490h1v1h-1zM716 493h1v1h-1zM716 496h1v1h-1zM716 499h1v1h-1zM716 502h1v1h-1zM716 505h1v1h-1zM716 508h1v1h-1zM716 511h1v1h-1zM716 514h1v1h-1zM716 516h1v1h-1zM716 519h1v1h-1zM716 522h1v1h-1zM716 525h1v1h-1zM716 528h1v1h-1zM716 531h1v1h-1zM758 417h1v1h-1zM758 420h1v1h-1zM758 423h1v1h-1zM758 426h1v1h-1zM758 429h1v1h-1zM758 432h1v1h-1zM758 435h1v1h-1zM758 437h1v1h-1zM758 440h1v1h-1zM758 443h1v1h-1zM758 446h1v1h-1zM758 449h1v1h-1zM758 452h1v1h-1zM758 455h1v1h-1zM758 458h1v1h-1zM758 461h1v1h-1zM758 464h1v1h-1zM758 467h1v1h-1zM758 470h1v1h-1zM758 473h1v1h-1zM758 476h1v1h-1zM758 478h1v1h-1zM758 481h1v1h-1zM758 484h1v1h-1zM758 487h1v1h-1zM758 490h1v1h-1zM758 493h1v1h-1zM758 496h1v1h-1zM758 499h1v1h-1zM758 502h1v1h-1zM758 505h1v1h-1zM758 508h1v1h-1zM758 511h1v1h-1zM758 514h1v1h-1zM758 516h1v1h-1zM758 519h1v1h-1zM758 522h1v1h-1zM758 525h1v1h-1zM758 528h1v1h-1zM758 531h1v1h-1zM800 417h1v1h-1zM800 420h1v1h-1zM800 423h1v1h-1zM800 426h1v1h-1zM800 429h1v1h-1zM800 432h1v1h-1zM800 435h1v1h-1zM800 437h1v1h-1zM800 440h1v1h-1zM800 443h1v1h-1zM800 446h1v1h-1zM800 449h1v1h-1zM800 452h1v1h-1zM800 455h1v1h-1zM800 458h1v1h-1zM800 461h1v1h-1zM800 464h1v1h-1zM800 467h1v1h-1zM800 470h1v1h-1zM800 473h1v1h-1zM800 476h1v1h-1zM800 478h1v1h-1zM800 481h1v1h-1zM800 484h1v1h-1zM800 487h1v1h-1zM800 490h1v1h-1zM800 493h1v1h-1zM800 496h1v1h-1zM800 499h1v1h-1zM800 502h1v1h-1zM800 505h1v1h-1zM800 508h1v1h-1zM800 511h1v1h-1zM800 514h1v1h-1zM800 516h1v1h-1zM800 519h1v1h-1zM800 522h1v1h-1zM800 525h1v1h-1zM800 528h1v1h-1zM800 531h1v1h-1zM508 431h1v1h-1zM516 431h1v1h-1zM525 431h1v1h-1zM533 431h1v1h-1zM541 431h1v1h-1zM550 431h1v1h-1zM558 431h1v1h-1zM566 431h1v1h-1zM575 431h1v1h-1zM583 431h1v1h-1zM592 431h1v1h-1zM600 431h1v1h-1zM608 431h1v1h-1zM617 431h1v1h-1zM625 431h1v1h-1zM633 431h1v1h-1zM642 431h1v1h-1zM650 431h1v1h-1zM658 431h1v1h-1zM667 431h1v1h-1zM675 431h1v1h-1zM683 431h1v1h-1zM692 431h1v1h-1zM700 431h1v1h-1zM708 431h1v1h-1zM717 431h1v1h-1zM725 431h1v1h-1zM733 431h1v1h-1zM742 431h1v1h-1zM750 431h1v1h-1zM758 431h1v1h-1zM767 431h1v1h-1zM775 431h1v1h-1zM784 431h1v1h-1zM792 431h1v1h-1zM800 431h1v1h-1zM809 431h1v1h-1zM817 431h1v1h-1zM825 431h1v1h-1zM834 431h1v1h-1zM508 446h1v1h-1zM516 446h1v1h-1zM525 446h1v1h-1zM533 446h1v1h-1zM541 446h1v1h-1zM550 446h1v1h-1zM558 446h1v1h-1zM566 446h1v1h-1zM575 446h1v1h-1zM583 446h1v1h-1zM592 446h1v1h-1zM600 446h1v1h-1zM608 446h1v1h-1zM617 446h1v1h-1zM625 446h1v1h-1zM633 446h1v1h-1zM642 446h1v1h-1zM650 446h1v1h-1zM658 446h1v1h-1zM667 446h1v1h-1zM675 446h1v1h-1zM683 446h1v1h-1zM692 446h1v1h-1zM700 446h1v1h-1zM708 446h1v1h-1zM717 446h1v1h-1zM725 446h1v1h-1zM733 446h1v1h-1zM742 446h1v1h-1zM750 446h1v1h-1zM758 446h1v1h-1zM767 446h1v1h-1zM775 446h1v1h-1zM784 446h1v1h-1zM792 446h1v1h-1zM800 446h1v1h-1zM809 446h1v1h-1zM817 446h1v1h-1zM825 446h1v1h-1zM834 446h1v1h-1zM508 460h1v1h-1zM516 460h1v1h-1zM525 460h1v1h-1zM533 460h1v1h-1zM541 460h1v1h-1zM550 460h1v1h-1zM558 460h1v1h-1zM566 460h1v1h-1zM575 460h1v1h-1zM583 460h1v1h-1zM592 460h1v1h-1zM600 460h1v1h-1zM608 460h1v1h-1zM617 460h1v1h-1zM625 460h1v1h-1zM633 460h1v1h-1zM642 460h1v1h-1zM650 460h1v1h-1zM658 460h1v1h-1zM667 460h1v1h-1zM675 460h1v1h-1zM683 460h1v1h-1zM692 460h1v1h-1zM700 460h1v1h-1zM708 460h1v1h-1zM717 460h1v1h-1zM725 460h1v1h-1zM733 460h1v1h-1zM742 460h1v1h-1zM750 460h1v1h-1zM758 460h1v1h-1zM767 460h1v1h-1zM775 460h1v1h-1zM784 460h1v1h-1zM792 460h1v1h-1zM800 460h1v1h-1zM809 460h1v1h-1zM817 460h1v1h-1zM825 460h1v1h-1zM834 460h1v1h-1zM508 475h1v1h-1zM516 475h1v1h-1zM525 475h1v1h-1zM533 475h1v1h-1zM541 475h1v1h-1zM550 475h1v1h-1zM558 475h1v1h-1zM566 475h1v1h-1zM575 475h1v1h-1zM583 475h1v1h-1zM592 475h1v1h-1zM600 475h1v1h-1zM608 475h1v1h-1zM617 475h1v1h-1zM625 475h1v1h-1zM633 475h1v1h-1zM642 475h1v1h-1zM650 475h1v1h-1zM658 475h1v1h-1zM667 475h1v1h-1zM675 475h1v1h-1zM683 475h1v1h-1zM692 475h1v1h-1zM700 475h1v1h-1zM708 475h1v1h-1zM717 475h1v1h-1zM725 475h1v1h-1zM733 475h1v1h-1zM742 475h1v1h-1zM750 475h1v1h-1zM758 475h1v1h-1zM767 475h1v1h-1zM775 475h1v1h-1zM784 475h1v1h-1zM792 475h1v1h-1zM800 475h1v1h-1zM809 475h1v1h-1zM817 475h1v1h-1zM825 475h1v1h-1zM834 475h1v1h-1zM508 490h1v1h-1zM516 490h1v1h-1zM525 490h1v1h-1zM533 490h1v1h-1zM541 490h1v1h-1zM550 490h1v1h-1zM558 490h1v1h-1zM566 490h1v1h-1zM575 490h1v1h-1zM583 490h1v1h-1zM592 490h1v1h-1zM600 490h1v1h-1zM608 490h1v1h-1zM617 490h1v1h-1zM625 490h1v1h-1zM633 490h1v1h-1zM642 490h1v1h-1zM650 490h1v1h-1zM658 490h1v1h-1zM667 490h1v1h-1zM675 490h1v1h-1zM683 490h1v1h-1zM692 490h1v1h-1zM700 490h1v1h-1zM708 490h1v1h-1zM717 490h1v1h-1zM725 490h1v1h-1zM733 490h1v1h-1zM742 490h1v1h-1zM750 490h1v1h-1zM758 490h1v1h-1zM767 490h1v1h-1zM775 490h1v1h-1zM784 490h1v1h-1zM792 490h1v1h-1zM800 490h1v1h-1zM809 490h1v1h-1zM817 490h1v1h-1zM825 490h1v1h-1zM834 490h1v1h-1zM508 504h1v1h-1zM516 504h1v1h-1zM525 504h1v1h-1zM533 504h1v1h-1zM541 504h1v1h-1zM550 504h1v1h-1zM558 504h1v1h-1zM566 504h1v1h-1zM575 504h1v1h-1zM583 504h1v1h-1zM592 504h1v1h-1zM600 504h1v1h-1zM608 504h1v1h-1zM617 504h1v1h-1zM625 504h1v1h-1zM633 504h1v1h-1zM642 504h1v1h-1zM650 504h1v1h-1zM658 504h1v1h-1zM667 504h1v1h-1zM675 504h1v1h-1zM683 504h1v1h-1zM692 504h1v1h-1zM700 504h1v1h-1zM708 504h1v1h-1zM717 504h1v1h-1zM725 504h1v1h-1zM733 504h1v1h-1zM742 504h1v1h-1zM750 504h1v1h-1zM758 504h1v1h-1zM767 504h1v1h-1zM775 504h1v1h-1zM784 504h1v1h-1zM792 504h1v1h-1zM800 504h1v1h-1zM809 504h1v1h-1zM817 504h1v1h-1zM825 504h1v1h-1zM834 504h1v1h-1zM508 519h1v1h-1zM516 519h1v1h-1zM525 519h1v1h-1zM533 519h1v1h-1zM541 519h1v1h-1zM550 519h1v1h-1zM558 519h1v1h-1zM566 519h1v1h-1zM575 519h1v1h-1zM583 519h1v1h-1zM592 519h1v1h-1zM600 519h1v1h-1zM608 519h1v1h-1zM617 519h1v1h-1zM625 519h1v1h-1zM633 519h1v1h-1zM642 519h1v1h-1zM650 519h1v1h-1zM658 519h1v1h-1zM667 519h1v1h-1zM675 519h1v1h-1zM683 519h1v1h-1zM692 519h1v1h-1zM700 519h1v1h-1zM708 519h1v1h-1zM717 519h1v1h-1zM725 519h1v1h-1zM733 519h1v1h-1zM742 519h1v1h-1zM750 519h1v1h-1zM758 519h1v1h-1zM767 519h1v1h-1zM775 519h1v1h-1zM784 519h1v1h-1zM792 519h1v1h-1zM800 519h1v1h-1zM809 519h1v1h-1zM817 519h1v1h-1zM825 519h1v1h-1zM834 519h1v1h-1z" fill="#c8c8c8" shape-rendering="crispEdges"/>
<rect x="508" y="534" width="334" height="14" fill="#f0f0f0" />
<rect x="508" y="534" width="334" height="1" fill="#ffffff" />
<rect x="508" y="534" width="1" height="14" fill="#ffffff" />
<rect x="508" y="547" width="334" height="1" fill="#101010" />
<rect x="825" y="534" width="1" height="14" fill="#101010" />
<rect x="826" y="534" width="16" height="14" fill="#f0f0f0" />
<rect x="826" y="534" width="16" height="1" fill="#ffffff" />
<rect x="826" y="534" width="1" height="14" fill="#ffffff" />
<rect x="826" y="547" width="16" height="1" fill="#101010" />
<rect x="841" y="534" width="1" height="14" fill="#101010" />
<rect x="827" y="546" width="14" height="1" fill="#a0a0a0" />
<rect x="840" y="535" width="1" height="12" fill="#a0a0a0" />
<path d="M831 538 L837.5 541 L831 544 Z" fill="#000"/>
<path d="M511.8 541.3 L518 538 L518 544 Z" fill="#000"/>
<path d="M523.5 534.5 L529.5 542 L524.5 542 L524.5 548 L522.5 548 L522.5 542 L518.5 542 Z" fill="#000"/>
<rect x="452" y="550" width="432" height="1" fill="#ffffff" />
<rect x="454" y="551" width="427" height="18" fill="#000" />
<rect x="454" y="569" width="429" height="2" fill="#a0a0a0" />
<rect x="881" y="551" width="1" height="20" fill="#a0a0a0" />
<rect x="456" y="410" width="40" height="15" rx="5" ry="5" fill="#00ff00"/>
<text x="476.5" y="422.6" font-family="Liberation Sans" font-size="11" fill="#000" text-anchor="middle" font-weight="normal" >20.000</text>
<rect x="456" y="527" width="40" height="15" rx="5" ry="5" fill="#00ff00"/>
<text x="476.5" y="539.6" font-family="Liberation Sans" font-size="11" fill="#000" text-anchor="middle" font-weight="normal" >-20.000</text>
<text x="494" y="451.2" font-family="Liberation Sans" font-size="11" fill="#28e828" text-anchor="end" font-weight="normal" >10.000</text>
<text x="494" y="481.2" font-family="Liberation Sans" font-size="11" fill="#28e828" text-anchor="end" font-weight="normal" >0.000</text>
<text x="494" y="510.2" font-family="Liberation Sans" font-size="11" fill="#28e828" text-anchor="end" font-weight="normal" >-10.000</text>
<rect x="488" y="552" width="40" height="15" rx="5" ry="5" fill="#00ff00"/>
<text x="508.5" y="564.6" font-family="Liberation Sans" font-size="11" fill="#000" text-anchor="middle" font-weight="normal" >-20.000</text>
<rect x="822" y="552" width="41" height="15" rx="5" ry="5" fill="#00ff00"/>
<text x="843.0" y="564.6" font-family="Liberation Sans" font-size="11" fill="#000" text-anchor="middle" font-weight="normal" >20.000</text>
<text x="592" y="565" font-family="Liberation Sans" font-size="11" fill="#28e828" text-anchor="middle" font-weight="normal" >-10.000</text>
<text x="675" y="565" font-family="Liberation Sans" font-size="11" fill="#28e828" text-anchor="middle" font-weight="normal" >0.000</text>
<text x="758" y="565" font-family="Liberation Sans" font-size="11" fill="#28e828" text-anchor="middle" font-weight="normal" >10.000</text>
<path d="M867 551 H878 Q880.5 551 880.5 553.5 V569 H867 Z" fill="#00ff00"/>
<path d="M500.3 474 H505 V476 H503 V482.5 H497.5 V480.5 H500.3 Z" fill="#e8e8e8"/>
<polyline points="649.58,475.76 650.02,475.72 650.45,475.68 650.88,475.64 651.32,475.61 651.75,475.58 652.18,475.56 652.62,475.54 653.05,475.53 653.48,475.52 653.92,475.51 654.35,475.50 654.79,475.50 655.22,475.50 655.65,475.50 656.09,475.50 656.52,475.50 656.95,475.50 657.39,475.49 657.82,475.48 658.25,475.47 658.69,475.46 659.12,475.44 659.55,475.42 659.99,475.40 660.42,475.36 660.86,475.33 661.29,475.29 661.72,475.24 662.16,475.19 662.59,475.13 663.02,475.06 663.46,474.99 663.89,474.91 664.32,474.82 664.76,474.73 665.19,474.63 665.63,474.52 666.06,474.40 666.49,474.28 666.93,474.15 667.36,474.01 667.79,473.86 668.23,473.70 668.66,473.53 669.09,473.36 669.53,473.18 669.96,472.98 670.39,472.78 670.83,472.58 671.26,472.36 671.70,472.13 672.13,471.90 672.56,471.65 673.00,471.40 673.43,471.14 673.86,470.87 674.30,470.59 674.73,470.30 675.16,470.01 675.60,469.70 676.03,469.39 676.47,469.07 676.90,468.75 677.33,468.41 677.77,468.07 678.20,467.72 678.63,467.36 679.07,467.00 679.50,466.63 679.93,466.25 680.37,465.87 680.80,465.48 681.24,465.08 681.67,464.68 682.10,464.27 682.54,463.86 682.97,463.44 683.40,463.02 683.84,462.59 684.27,462.16 684.70,461.72 685.14,461.28 685.57,460.84 686.00,460.40 686.44,459.95 686.87,459.50 687.31,459.05 687.74,458.59 688.17,458.14 688.61,457.68 689.04,457.23 689.47,456.77 689.91,456.31 690.34,455.85 690.77,455.40 691.21,454.94 691.64,454.49 692.08,454.03 692.51,453.58 692.94,453.13 693.38,452.69 693.81,452.25 694.24,451.81 694.68,451.37 695.11,450.94 695.54,450.51 695.98,450.09 696.41,449.67 696.84,449.26 697.28,448.85 697.71,448.45 698.15,448.06 698.58,447.67 699.01,447.29 699.45,446.92 699.88,446.55 700.31,446.20 700.75,445.85 701.18,445.51 701.61,445.18 702.05,444.85 702.48,444.54 702.92,444.24 703.35,443.94 703.78,443.66 704.22,443.38 704.65,443.12 705.08,442.87 705.52,442.63 705.95,442.40 706.38,442.18 706.82,441.97 707.25,441.77 707.68,441.59 708.12,441.42 708.55,441.26 708.99,441.11 709.42,440.97 709.85,440.85 710.29,440.74 710.72,440.65 711.15,440.56 711.59,440.49 712.02,440.43 712.45,440.38 712.89,440.35 713.32,440.33 713.76,440.33 714.19,440.33 714.62,440.35 715.06,440.38 715.49,440.43 715.92,440.49 716.36,440.56 716.79,440.65 717.22,440.74 717.66,440.85 718.09,440.97 718.52,441.11 718.96,441.26 719.39,441.42 719.83,441.59 720.26,441.77 720.69,441.97 721.13,442.18 721.56,442.40 721.99,442.63 722.43,442.87 722.86,443.12 723.29,443.38 723.73,443.66 724.16,443.94 724.60,444.24 725.03,444.54 725.46,444.85 725.90,445.18 726.33,445.51 726.76,445.85 727.20,446.20 727.63,446.55 728.06,446.92 728.50,447.29 728.93,447.67 729.36,448.06 729.80,448.45 730.23,448.85 730.67,449.26 731.10,449.67 731.53,450.09 731.97,450.51 732.40,450.94 732.83,451.37 733.27,451.81 733.70,452.25 734.13,452.69 734.57,453.13 734.40,453.58 733.97,454.03 733.54,454.49 733.10,454.94 732.67,455.40 732.24,455.85 731.80,456.31 731.37,456.77 730.93,457.23 730.50,457.68 730.07,458.14 729.63,458.59 729.20,459.05 728.77,459.50 728.33,459.95 727.90,460.40 727.47,460.84 727.03,461.28 726.60,461.72 726.16,462.16 725.73,462.59 725.30,463.02 724.86,463.44 724.43,463.86 724.00,464.27 723.56,464.68 723.13,465.08 722.70,465.48 722.26,465.87 721.83,466.25 721.40,466.63 720.96,467.00 720.53,467.36 720.09,467.72 719.66,468.07 719.23,468.41 718.79,468.75 718.36,469.07 717.93,469.39 717.49,469.70 717.06,470.01 716.63,470.30 716.19,470.59 715.76,470.87 715.32,471.14 714.89,471.40 714.46,471.65 714.02,471.90 713.59,472.13 713.16,472.36 712.72,472.58 712.29,472.78 711.86,472.98 711.42,473.18 710.99,473.36 710.56,473.53 710.12,473.70 709.69,473.86 709.25,474.01 708.82,474.15 708.39,474.28 707.95,474.40 707.52,474.52 707.09,474.63 706.65,474.73 706.22,474.82 705.79,474.91 705.35,474.99 704.92,475.06 704.48,475.13 704.05,475.19 703.62,475.24 703.18,475.29 702.75,475.33 702.32,475.36 701.88,475.40 701.45,475.42 701.02,475.44 700.58,475.46 700.15,475.47 699.72,475.48 699.28,475.49 698.85,475.50 698.41,475.50 697.98,475.50 697.55,475.50 697.11,475.50 696.68,475.50 696.25,475.50 695.81,475.51 695.38,475.52 694.95,475.53 694.51,475.54 694.08,475.56 693.64,475.58 693.21,475.61 692.78,475.64 692.34,475.68 691.91,475.72 691.48,475.76 691.04,475.82 690.61,475.88 690.18,475.94 689.74,476.01 689.31,476.09 688.88,476.18 688.44,476.27 688.01,476.37 687.57,476.48 687.14,476.60 686.71,476.72 686.27,476.85 685.84,476.99 685.41,477.14 684.97,477.29 684.54,477.46 684.11,477.63 683.67,477.81 683.24,478.00 682.80,478.20 682.37,478.41 681.94,478.62 681.50,478.84 681.07,479.08 680.64,479.32 680.20,479.57 679.77,479.82 679.34,480.09 678.90,480.36 678.47,480.65 678.04,480.94 677.60,481.23 677.17,481.54 676.73,481.85 676.30,482.18 675.87,482.51 675.43,482.84 675.00,483.19 674.57,483.54 674.13,483.90 673.70,484.26 673.27,484.63 672.83,485.01 672.40,485.39 671.96,485.78 671.53,486.17 671.10,486.57 670.66,486.98 670.23,487.39 669.80,487.80 669.36,488.22 668.93,488.65 668.50,489.07 668.06,489.50 667.63,489.94 667.20,490.37 666.76,490.81 666.33,491.25 665.89,491.69 665.46,492.14 665.03,492.58 664.59,493.03 664.16,493.48 663.73,493.93 663.29,494.37 662.86,494.82 662.43,495.27 661.99,495.72 661.56,496.16 661.12,496.60 660.69,497.04 660.26,497.48 659.82,497.92 659.39,498.35 658.96,498.78 658.52,499.21 658.09,499.63 657.66,500.05 657.22,500.46 656.79,500.87 656.36,501.27 655.92,501.66 655.49,502.05 655.05,502.44 654.62,502.82 654.19,503.19 653.75,503.55 653.32,503.91 652.89,504.26 652.45,504.60 652.02,504.93 651.59,505.25 651.15,505.56 650.72,505.87 650.28,506.16 649.85,506.45 649.42,506.73 648.98,506.99 648.55,507.25 648.12,507.49 647.68,507.73 647.25,507.95 646.82,508.16 646.38,508.36 645.95,508.55 645.52,508.73 645.08,508.90 644.65,509.05 644.21,509.19 643.78,509.32 643.35,509.44 642.91,509.55 642.48,509.64 642.05,509.72 641.61,509.79 641.18,509.84 640.75,509.88 640.31,509.91 639.88,509.93 639.44,509.93 639.01,509.92 638.58,509.90 638.14,509.87 637.71,509.82 637.28,509.76 636.84,509.69 636.41,509.60 635.98,509.51 635.54,509.40 635.11,509.27 634.68,509.14 634.24,508.99 633.81,508.83 633.37,508.66 632.94,508.48 632.51,508.29 632.07,508.08 631.64,507.86 631.21,507.64 630.77,507.40 630.34,507.15 629.91,506.89 629.47,506.62 629.04,506.34 628.60,506.05 628.17,505.75 627.74,505.44 627.30,505.12 626.87,504.80 626.44,504.46 626.00,504.12 625.57,503.77 625.14,503.41 624.70,503.04 624.27,502.67 623.84,502.29 623.40,501.90 622.97,501.51 622.53,501.11 622.10,500.70 621.67,500.29 621.23,499.88 620.80,499.46 620.37,499.04 619.93,498.61 619.50,498.18 619.07,497.74 618.63,497.31 618.20,496.87 617.76,496.43 617.33,495.98 616.90,495.54 616.46,495.09 616.03,494.64 615.60,494.20 615.43,493.75 615.87,493.30 616.30,492.85 616.73,492.41 617.17,491.96 617.60,491.52 618.03,491.07 618.47,490.63 618.90,490.20 619.33,489.76 619.77,489.33 620.20,488.90 620.64,488.48 621.07,488.05 621.50,487.64 621.94,487.22 622.37,486.82 622.80,486.41 623.24,486.02 623.67,485.62 624.10,485.24 624.54,484.86 624.97,484.48 625.40,484.11 625.84,483.75 626.27,483.40 626.71,483.05 627.14,482.71 627.57,482.37 628.01,482.05 628.44,481.73 628.87,481.42 629.31,481.11 629.74,480.82 630.17,480.53 630.61,480.25 631.04,479.98 631.48,479.72 631.91,479.46 632.34,479.22 632.78,478.98 633.21,478.75 633.64,478.53 634.08,478.32 634.51,478.12 634.94,477.92 635.38,477.74 635.81,477.56 636.24,477.39 636.68,477.23 637.11,477.08 637.55,476.93 637.98,476.80 638.41,476.67 638.85,476.55 639.28,476.44 639.71,476.33 640.15,476.23 640.58,476.14 641.01,476.06 641.45,475.98 641.88,475.91 642.32,475.85 642.75,475.80 643.18,475.74 643.62,475.70 644.05,475.66 644.48,475.63 644.92,475.60 645.35,475.57 645.78,475.55 646.22,475.54 646.65,475.52 647.08,475.51 647.52,475.51 647.95,475.50 648.39,475.50 648.82,475.50 649.25,475.50 649.69,475.50 650.12,475.50 650.55,475.49 650.99,475.49 651.42,475.48 651.85,475.47 652.29,475.45 652.72,475.43 653.16,475.41 653.59,475.38 654.02,475.35 654.46,475.31 654.89,475.27 655.32,475.22 655.76,475.16 656.19,475.10 656.62,475.03 657.06,474.96 657.49,474.88 657.92,474.79 658.36,474.69 658.79,474.59 659.23,474.48 659.66,474.36 660.09,474.23 660.53,474.09 660.96,473.95 661.39,473.80 661.83,473.63 662.26,473.47 662.69,473.29 663.13,473.10 663.56,472.91 664.00,472.70 664.43,472.49 664.86,472.27 665.30,472.04 665.73,471.80 666.16,471.55 666.60,471.30 667.03,471.03 667.46,470.76 667.90,470.48 668.33,470.19 668.76,469.89 669.20,469.58 669.63,469.27 670.07,468.94 670.50,468.61 670.93,468.28 671.37,467.93 671.80,467.58 672.23,467.22 672.67,466.85 673.10,466.48 673.53,466.10 673.97,465.71 674.40,465.32 674.84,464.92 675.27,464.51 675.70,464.10 676.14,463.69 676.57,463.27 677.00,462.85 677.44,462.42 677.87,461.98 678.30,461.55 678.74,461.11 679.17,460.67 679.61,460.22 680.04,459.77 680.47,459.32 680.91,458.87 681.34,458.41 681.77,457.96 682.21,457.50 682.64,457.04 683.07,456.59 683.51,456.13 683.94,455.67 684.37,455.21 684.81,454.76 685.24,454.31 685.68,453.85 686.11,453.40 686.54,452.96 686.98,452.51 687.41,452.07 687.84,451.63 688.28,451.20 688.71,450.77 689.14,450.34 689.58,449.92 690.01,449.51 690.45,449.10 690.88,448.69 691.31,448.30 691.75,447.90 692.18,447.52 692.61,447.14 693.05,446.77 693.48,446.41 693.91,446.06 694.35,445.71 694.78,445.37 695.21,445.05 695.65,444.73 696.08,444.42 696.52,444.12 696.95,443.83 697.38,443.55 697.82,443.28 698.25,443.02 698.68,442.77 699.12,442.53 699.55,442.31 699.98,442.09 700.42,441.89 700.85,441.70 701.29,441.52 701.72,441.35 702.15,441.20 702.59,441.05 703.02,440.92 703.45,440.81 703.89,440.70 704.32,440.61 704.75,440.53 705.19,440.46 705.62,440.41 706.05,440.37 706.49,440.34 706.92,440.33 707.36,440.33 707.79,440.34 708.22,440.36 708.66,440.40 709.09,440.45 709.52,440.52 709.96,440.59 710.39,440.68 710.82,440.78 711.26,440.90 711.69,441.03 712.13,441.17 712.56,441.32 712.99,441.48 713.43,441.66 713.86,441.85 714.29,442.05 714.73,442.26 715.16,442.49 715.59,442.72 716.03,442.97 716.46,443.22 716.89,443.49 717.33,443.77 717.76,444.06 718.20,444.36 718.63,444.66 719.06,444.98 719.50,445.31 719.93,445.64 720.36,445.99 720.80,446.34 721.23,446.70 721.66,447.07 722.10,447.44 722.53,447.83 722.97,448.22 723.40,448.61 723.83,449.02 724.27,449.42 724.70,449.84 725.13,450.26 725.57,450.68 726.00,451.11 726.43,451.54 726.87,451.98 727.30,452.42 727.73,452.87 728.17,453.31 728.60,453.76 729.04,454.21 729.47,454.67 729.90,455.12 730.34,455.58 730.77,456.04 731.20,456.49 731.64,456.95 732.07,457.41 732.50,457.87 732.94,458.32 733.37,458.78 733.81,459.23 734.24,459.68 734.67,460.13 734.30,460.58 733.87,461.02 733.43,461.46 733.00,461.90 732.56,462.33 732.13,462.76 731.70,463.19 731.26,463.61 730.83,464.02 730.40,464.43 729.96,464.84 729.53,465.24 729.10,465.63 728.66,466.02 728.23,466.40 727.79,466.78 727.36,467.14 726.93,467.51 726.49,467.86 726.06,468.21 725.63,468.55 725.19,468.88 724.76,469.20 724.33,469.52 723.89,469.83 723.46,470.13 723.03,470.42 722.59,470.70 722.16,470.98 721.72,471.24 721.29,471.50 720.86,471.75 720.42,471.99 719.99,472.22 719.56,472.45 719.12,472.66 718.69,472.87 718.26,473.06 717.82,473.25 717.39,473.43 716.95,473.60 716.52,473.76 716.09,473.92 715.65,474.06 715.22,474.20 714.79,474.33 714.35,474.45 713.92,474.57 713.49,474.67 713.05,474.77 712.62,474.86 712.19,474.94 711.75,475.02 711.32,475.09 710.88,475.15 710.45,475.21 710.02,475.26 709.58,475.30 709.15,475.34 708.72,475.38 708.28,475.41 707.85,475.43 707.42,475.45 706.98,475.47 706.55,475.48 706.11,475.49 705.68,475.49 705.25,475.50 704.81,475.50 704.38,475.50 703.95,475.50 703.51,475.50 703.08,475.50 702.65,475.51 702.21,475.51 701.78,475.52 701.35,475.53 700.91,475.55 700.48,475.57 700.04,475.59 699.61,475.62 699.18,475.65 698.74,475.69 698.31,475.74 697.88,475.78 697.44,475.84 697.01,475.90 696.58,475.97 696.14,476.04 695.71,476.13 695.27,476.22 694.84,476.31 694.41,476.42 693.97,476.53 693.54,476.64 693.11,476.77 692.67,476.91 692.24,477.05 691.81,477.20 691.37,477.36 690.94,477.53 690.51,477.70 690.07,477.89 689.64,478.08 689.20,478.28 688.77,478.49 688.34,478.71 687.90,478.94 687.47,479.17 687.04,479.42 686.60,479.67 686.17,479.93 685.74,480.20 685.30,480.47 684.87,480.76 684.43,481.05 684.00,481.36 683.57,481.67 683.13,481.98 682.70,482.31 682.27,482.64 681.83,482.98 681.40,483.33 680.97,483.68 680.53,484.04 680.10,484.41 679.67,484.78 679.23,485.16 678.80,485.55 678.36,485.94 677.93,486.33 677.50,486.74 677.06,487.14 676.63,487.55 676.20,487.97 675.76,488.39 675.33,488.82 674.90,489.24 674.46,489.68 674.03,490.11 673.59,490.55 673.16,490.99 672.73,491.43 672.29,491.87 671.86,492.32 671.43,492.76 670.99,493.21 670.56,493.66 670.13,494.11 669.69,494.55 669.26,495.00 668.83,495.45 668.39,495.89 667.96,496.34 667.52,496.78 667.09,497.22 666.66,497.66 666.22,498.09 665.79,498.52 665.36,498.95 664.92,499.38 664.49,499.80 664.06,500.21 663.62,500.62 663.19,501.03 662.75,501.43 662.32,501.82 661.89,502.21 661.45,502.59 661.02,502.97 660.59,503.33 660.15,503.69 659.72,504.05 659.29,504.39 658.85,504.73 658.42,505.06 657.99,505.38 657.55,505.69 657.12,505.99 656.68,506.28 656.25,506.56 655.82,506.83 655.38,507.10 654.95,507.35 654.52,507.59 654.08,507.82 653.65,508.04 653.22,508.25 652.78,508.44 652.35,508.63 651.91,508.80 651.48,508.96 651.05,509.11 650.61,509.25 650.18,509.37 649.75,509.48 649.31,509.58 648.88,509.67 648.45,509.75 648.01,509.81 647.58,509.86 647.15,509.90 646.71,509.92 646.28,509.93 645.84,509.93 645.41,509.92 644.98,509.89 644.54,509.85 644.11,509.80 643.68,509.73 643.24,509.66 642.81,509.57 642.38,509.46 641.94,509.35 641.51,509.22 641.07,509.08 640.64,508.93 640.21,508.77 639.77,508.59 639.34,508.40 638.91,508.20 638.47,507.99 638.04,507.77 637.61,507.54 637.17,507.30 636.74,507.04 636.31,506.78 635.87,506.51 635.44,506.22 635.00,505.93 634.57,505.63 634.14,505.31 633.70,504.99 633.27,504.66 632.84,504.32 632.40,503.98 631.97,503.62 631.54,503.26 631.10,502.89 630.67,502.52 630.23,502.13 629.80,501.74 629.37,501.35 628.93,500.95 628.50,500.54 628.07,500.13 627.63,499.71 627.20,499.29 626.77,498.87 626.33,498.44 625.90,498.00 625.47,497.57 625.03,497.13 624.60,496.69 624.16,496.25 623.73,495.80 623.30,495.36 622.86,494.91 622.43,494.46 622.00,494.02 621.56,493.57 621.13,493.12 620.70,492.67 620.26,492.23 619.83,491.78 619.39,491.34 618.96,490.90 618.53,490.46 618.09,490.02 617.66,489.59 617.23,489.16 616.79,488.73 616.36,488.31 615.93,487.89 615.49,487.47 615.54,487.06 615.97,486.66 616.40,486.25 616.84,485.86 617.27,485.47 617.70,485.08 618.14,484.71 618.57,484.33 619.01,483.97 619.44,483.61 619.87,483.26 620.31,482.91 620.74,482.57 621.17,482.24 621.61,481.92 622.04,481.60 622.47,481.29 622.91,480.99 623.34,480.70 623.77,480.42 624.21,480.14 624.64,479.88 625.08,479.62 625.51,479.37 625.94,479.12 626.38,478.89 626.81,478.66 627.24,478.45 627.68,478.24 628.11,478.04 628.54,477.85 628.98,477.67 629.41,477.49 629.85,477.33 630.28,477.17 630.71,477.02 631.15,476.88 631.58,476.75 632.01,476.62 632.45,476.50 632.88,476.39 633.31,476.29 633.75,476.20 634.18,476.11 634.61,476.03 635.05,475.96 635.48,475.89 635.92,475.83 636.35,475.77 636.78,475.73 637.22,475.68 637.65,475.65 638.08,475.61 638.52,475.59 638.95,475.56 639.38,475.55 639.82,475.53 640.25,475.52 640.69,475.51 641.12,475.51 641.55,475.50 641.99,475.50 642.42,475.50 642.85,475.50 643.29,475.50 643.72,475.50 644.15,475.49 644.59,475.49 645.02,475.48 645.45,475.46 645.89,475.45 646.32,475.43 646.76,475.40 647.19,475.37 647.62,475.34 648.06,475.30 648.49,475.25 648.92,475.20 649.36,475.14 649.79,475.08 650.22,475.01 650.66,474.93 651.09,474.84 651.53,474.75 651.96,474.65 652.39,474.54 652.83,474.43 653.26,474.31 653.69,474.17 654.13,474.04 654.56,473.89 654.99,473.73 655.43,473.57 655.86,473.39 656.29,473.21 656.73,473.02 657.16,472.82 657.60,472.62 658.03,472.40 658.46,472.18 658.90,471.94 659.33,471.70 659.76,471.45 660.20,471.19 660.63,470.92 661.06,470.65 661.50,470.36 661.93,470.07 662.37,469.77 662.80,469.46 663.23,469.14 663.67,468.81 664.10,468.48 664.53,468.14 664.97,467.79 665.40,467.43 665.83,467.07 666.27,466.70 666.70,466.33 667.13,465.94 667.57,465.55 668.00,465.16 668.44,464.76 668.87,464.35 669.30,463.94 669.74,463.52 670.17,463.10 670.60,462.68 671.04,462.24 671.47,461.81 671.90,461.37 672.34,460.93 672.77,460.49 673.21,460.04 673.64,459.59 674.07,459.14 674.51,458.69 674.94,458.23 675.37,457.77 675.81,457.32 676.24,456.86 676.67,456.40 677.11,455.94 677.54,455.49 677.98,455.03 678.41,454.58 678.84,454.12 679.28,453.67 679.71,453.22 680.14,452.78 680.58,452.33 681.01,451.89 681.44,451.46 681.88,451.03 682.31,450.60 682.74,450.17 683.18,449.76 683.61,449.34 684.05,448.93 684.48,448.53 684.91,448.14 685.35,447.75 685.78,447.37 686.21,446.99 686.65,446.63 687.08,446.27 687.51,445.92 687.95,445.57 688.38,445.24 688.82,444.92 689.25,444.60 689.68,444.30 690.12,444.00 690.55,443.71 690.98,443.44 691.42,443.17 691.85,442.92 692.28,442.67 692.72,442.44 693.15,442.22 693.58,442.01 694.02,441.81 694.45,441.63 694.89,441.45 695.32,441.29 695.75,441.14 696.19,441.00 696.62,440.88 697.05,440.76 697.49,440.66 697.92,440.58 698.35,440.50 698.79,440.44 699.22,440.39 699.66,440.36 700.09,440.34 700.52,440.33 700.96,440.33 701.39,440.35 701.82,440.38 702.26,440.42 702.69,440.48 703.12,440.55 703.56,440.63 703.99,440.72 704.42,440.83 704.86,440.95 705.29,441.08 705.73,441.23 706.16,441.38 706.59,441.55 707.03,441.74 707.46,441.93 707.89,442.13 708.33,442.35 708.76,442.58 709.19,442.82 709.63,443.07 710.06,443.33 710.50,443.60 710.93,443.88 711.36,444.18 711.80,444.48 712.23,444.79 712.66,445.11 713.10,445.44 713.53,445.78 713.96,446.13 714.40,446.48 714.83,446.85 715.26,447.22 715.70,447.60 716.13,447.98 716.57,448.37 717.00,448.77 717.43,449.18 717.87,449.59 718.30,450.01 718.73,450.43 719.17,450.85 719.60,451.28 720.03,451.72 720.47,452.16 720.90,452.60 721.34,453.05 721.77,453.49 722.20,453.94 722.64,454.40 723.07,454.85 723.50,455.31 723.94,455.76 724.37,456.22 724.80,456.68 725.24,457.13 725.67,457.59 726.10,458.05 726.54,458.50 726.97,458.96 727.41,459.41 727.84,459.86 728.27,460.31 728.71,460.75 729.14,461.20 729.57,461.64 730.01,462.07 730.44,462.50 730.87,462.93 731.31,463.35 731.74,463.77 732.18,464.19 732.61,464.60 733.04,465.00 733.48,465.40 733.91,465.79 734.34,466.17 734.63,466.55 734.19,466.92 733.76,467.29 733.33,467.65 732.89,468.00 732.46,468.34 732.03,468.68 731.59,469.01 731.16,469.33 730.73,469.64 730.29,469.95 729.86,470.24 729.42,470.53 728.99,470.81 728.56,471.08 728.12,471.35 727.69,471.60 727.26,471.85 726.82,472.08 726.39,472.31 725.96,472.53 725.52,472.74 725.09,472.95 724.66,473.14 724.22,473.32 723.79,473.50 723.35,473.67 722.92,473.83 722.49,473.98 722.05,474.12 721.62,474.25 721.19,474.38 720.75,474.50 720.32,474.61 719.89,474.71 719.45,474.81 719.02,474.89 718.58,474.97 718.15,475.05 717.72,475.12 717.28,475.18 716.85,475.23 716.42,475.28 715.98,475.32 715.55,475.36 715.12,475.39 714.68,475.42 714.25,475.44 713.82,475.46 713.38,475.47 712.95,475.48 712.51,475.49 712.08,475.50 711.65,475.50 711.21,475.50 710.78,475.50 710.35,475.50 709.91,475.50 709.48,475.50 709.05,475.51 708.61,475.52 708.18,475.53 707.74,475.54 707.31,475.56 706.88,475.58 706.44,475.60 706.01,475.63 705.58,475.67 705.14,475.71 704.71,475.75 704.28,475.81 703.84,475.86 703.41,475.93 702.98,476.00 702.54,476.08 702.11,476.16 701.67,476.25 701.24,476.35 700.81,476.46 700.37,476.57 699.94,476.69 699.51,476.82 699.07,476.96 698.64,477.11 698.21,477.26 697.77,477.42 697.34,477.60 696.90,477.77 696.47,477.96 696.04,478.16 695.60,478.36 695.17,478.58 694.74,478.80 694.30,479.03 693.87,479.27 693.44,479.52 693.00,479.77 692.57,480.03 692.14,480.31 691.70,480.59 691.27,480.88 690.83,481.17 690.40,481.48 689.97,481.79 689.53,482.11 689.10,482.44 688.67,482.77 688.23,483.12 687.80,483.47 687.37,483.82 686.93,484.19 686.50,484.56 686.06,484.93 685.63,485.31 685.20,485.70 684.76,486.10 684.33,486.49 683.90,486.90 683.46,487.31 683.03,487.72 682.60,488.14 682.16,488.56 681.73,488.99 681.30,489.42 680.86,489.85 680.43,490.28 679.99,490.72 679.56,491.16 679.13,491.61 678.69,492.05 678.26,492.50 677.83,492.94 677.39,493.39 676.96,493.84 676.53,494.29 676.09,494.73 675.66,495.18 675.22,495.63 674.79,496.07 674.36,496.51 673.92,496.96 673.49,497.39 673.06,497.83 672.62,498.26 672.19,498.69 671.76,499.12 671.32,499.54 670.89,499.96 670.46,500.38 670.02,500.78 669.59,501.19 669.15,501.59 668.72,501.98 668.29,502.36 667.85,502.74 667.42,503.11 666.99,503.48 666.55,503.84 666.12,504.19 665.69,504.53 665.25,504.86 664.82,505.19 664.38,505.50 663.95,505.81 663.52,506.11 663.08,506.39 662.65,506.67 662.22,506.94 661.78,507.20 661.35,507.45 660.92,507.68 660.48,507.91 660.05,508.12 659.62,508.32 659.18,508.52 658.75,508.70 658.31,508.87 657.88,509.02 657.45,509.17 657.01,509.30 656.58,509.42 656.15,509.53 655.71,509.62 655.28,509.70 654.85,509.77 654.41,509.83 653.98,509.88 653.54,509.91 653.11,509.93 652.68,509.93 652.24,509.93 651.81,509.91 651.38,509.88 650.94,509.83 650.51,509.77 650.08,509.70 649.64,509.62 649.21,509.53 648.78,509.42 648.34,509.30 647.91,509.17 647.47,509.02 647.04,508.87 646.61,508.70 646.17,508.52 645.74,508.32 645.31,508.12 644.87,507.91 644.44,507.68 644.01,507.45 643.57,507.20 643.14,506.94 642.70,506.67 642.27,506.39 641.84,506.11 641.40,505.81 640.97,505.50 640.54,505.19 640.10,504.86 639.67,504.53 639.24,504.19 638.80,503.84 638.37,503.48 637.94,503.11 637.50,502.74 637.07,502.36 636.63,501.98 636.20,501.59 635.77,501.19 635.33,500.78 634.90,500.38 634.47,499.96 634.03,499.54 633.60,499.12 633.17,498.69 632.73,498.26 632.30,497.83 631.86,497.39 631.43,496.96 631.00,496.51 630.56,496.07 630.13,495.63 629.70,495.18 629.26,494.73 628.83,494.29 628.40,493.84 627.96,493.39 627.53,492.94 627.10,492.50 626.66,492.05 626.23,491.61 625.79,491.16 625.36,490.72 624.93,490.28 624.49,489.85 624.06,489.42 623.63,488.99 623.19,488.56 622.76,488.14 622.33,487.72 621.89,487.31 621.46,486.90 621.02,486.49 620.59,486.10 620.16,485.70 619.72,485.31 619.29,484.93 618.86,484.56 618.42,484.19 617.99,483.82 617.56,483.47 617.12,483.12 616.69,482.77 616.25,482.44 615.82,482.11 615.39,481.79 615.64,481.48 616.07,481.17 616.51,480.88 616.94,480.59 617.38,480.31 617.81,480.03 618.24,479.77 618.68,479.52 619.11,479.27 619.54,479.03 619.98,478.80 620.41,478.58 620.84,478.36 621.28,478.16 621.71,477.96 622.14,477.77 622.58,477.60 623.01,477.42 623.45,477.26 623.88,477.11 624.31,476.96 624.75,476.82 625.18,476.69 625.61,476.57 626.05,476.46 626.48,476.35 626.91,476.25 627.35,476.16 627.78,476.08 628.22,476.00 628.65,475.93 629.08,475.86 629.52,475.81 629.95,475.75 630.38,475.71 630.82,475.67 631.25,475.63 631.68,475.60 632.12,475.58 632.55,475.56 632.98,475.54 633.42,475.53 633.85,475.52 634.29,475.51 634.72,475.50 635.15,475.50 635.59,475.50 636.02,475.50 636.45,475.50 636.89,475.50 637.32,475.50 637.75,475.49 638.19,475.48 638.62,475.47 639.06,475.46 639.49,475.44 639.92,475.42 640.36,475.39 640.79,475.36 641.22,475.32 641.66,475.28 642.09,475.23 642.52,475.18 642.96,475.12 643.39,475.05 643.82,474.97 644.26,474.89 644.69,474.81 645.13,474.71 645.56,474.61 645.99,474.50 646.43,474.38 646.86,474.25 647.29,474.12 647.73,473.98 648.16,473.83 648.59,473.67 649.03,473.50 649.46,473.32 649.90,473.14 650.33,472.95 650.76,472.74 651.20,472.53 651.63,472.31 652.06,472.08 652.50,471.85 652.93,471.60 653.36,471.35 653.80,471.08 654.23,470.81 654.66,470.53 655.10,470.24 655.53,469.95 655.97,469.64 656.40,469.33 656.83,469.01 657.27,468.68 657.70,468.34 658.13,468.00 658.57,467.65 659.00,467.29 659.43,466.92 659.87,466.55 660.30,466.17 660.74,465.79 661.17,465.40 661.60,465.00 662.04,464.60 662.47,464.19 662.90,463.77 663.34,463.35 663.77,462.93 664.20,462.50 664.64,462.07 665.07,461.64 665.51,461.20 665.94,460.75 666.37,460.31 666.81,459.86 667.24,459.41 667.67,458.96 668.11,458.50 668.54,458.05 668.97,457.59 669.41,457.13 669.84,456.68 670.27,456.22 670.71,455.76 671.14,455.31 671.58,454.85 672.01,454.40 672.44,453.94 672.88,453.49 673.31,453.05 673.74,452.60 674.18,452.16 674.61,451.72 675.04,451.28 675.48,450.85 675.91,450.43 676.35,450.01 676.78,449.59 677.21,449.18 677.65,448.77 678.08,448.37 678.51,447.98 678.95,447.60 679.38,447.22 679.81,446.85 680.25,446.48 680.68,446.13 681.11,445.78 681.55,445.44 681.98,445.11 682.42,444.79 682.85,444.48 683.28,444.18 683.72,443.88 684.15,443.60 684.58,443.33 685.02,443.07 685.45,442.82 685.88,442.58 686.32,442.35 686.75,442.13 687.19,441.93 687.62,441.74 688.05,441.55 688.49,441.38 688.92,441.23 689.35,441.08 689.79,440.95 690.22,440.83 690.65,440.72 691.09,440.63 691.52,440.55 691.95,440.48 692.39,440.42 692.82,440.38 693.26,440.35 693.69,440.33 694.12,440.33 694.56,440.34 694.99,440.36 695.42,440.39 695.86,440.44 696.29,440.50 696.72,440.58 697.16,440.66 697.59,440.76 698.03,440.88 698.46,441.00 698.89,441.14 699.33,441.29 699.76,441.45 700.19,441.63 700.63,441.81 701.06,442.01 701.49,442.22 701.93,442.44 702.36,442.67 702.79,442.92 703.23,443.17 703.66,443.44 704.10,443.71 704.53,444.00 704.96,444.30 705.40,444.60 705.83,444.92 706.26,445.24 706.70,445.57 707.13,445.92 707.56,446.27 708.00,446.63 708.43,446.99 708.87,447.37 709.30,447.75 709.73,448.14 710.17,448.53 710.60,448.93 711.03,449.34 711.47,449.76 711.90,450.17 712.33,450.60 712.77,451.03 713.20,451.46 713.63,451.89 714.07,452.33 714.50,452.78 714.94,453.22 715.37,453.67 715.80,454.12 716.24,454.58 716.67,455.03 717.10,455.49 717.54,455.94 717.97,456.40 718.40,456.86 718.84,457.32 719.27,457.77 719.71,458.23 720.14,458.69 720.57,459.14 721.01,459.59 721.44,460.04 721.87,460.49 722.31,460.93 722.74,461.37 723.17,461.81 723.61,462.24 724.04,462.68 724.47,463.10 724.91,463.52 725.34,463.94 725.78,464.35 726.21,464.76 726.64,465.16 727.08,465.55 727.51,465.94 727.94,466.33 728.38,466.70 728.81,467.07 729.24,467.43 729.68,467.79 730.11,468.14 730.55,468.48 730.98,468.81 731.41,469.14 731.85,469.46 732.28,469.77 732.71,470.07 733.15,470.36 733.58,470.65 734.01,470.92 734.45,471.19 734.52,471.45 734.09,471.70 733.66,471.94 733.22,472.18 732.79,472.40 732.36,472.62 731.92,472.82 731.49,473.02 731.05,473.21 730.62,473.39 730.19,473.57 729.75,473.73 729.32,473.89 728.89,474.04 728.45,474.17 728.02,474.31 727.59,474.43 727.15,474.54 726.72,474.65 726.29,474.75 725.85,474.84 725.42,474.93 724.98,475.01 724.55,475.08 724.12,475.14 723.68,475.20 723.25,475.25 722.82,475.30 722.38,475.34 721.95,475.37 721.52,475.40 721.08,475.43 720.65,475.45 720.21,475.46 719.78,475.48 719.35,475.49 718.91,475.49 718.48,475.50 718.05,475.50 717.61,475.50 717.18,475.50 716.75,475.50 716.31,475.50 715.88,475.51 715.45,475.51 715.01,475.52 714.58,475.53 714.14,475.55 713.71,475.56 713.28,475.59 712.84,475.61 712.41,475.65 711.98,475.68 711.54,475.73 711.11,475.77 710.68,475.83 710.24,475.89 709.81,475.96 709.37,476.03 708.94,476.11 708.51,476.20 708.07,476.29 707.64,476.39 707.21,476.50 706.77,476.62 706.34,476.75 705.91,476.88 705.47,477.02 705.04,477.17 704.61,477.33 704.17,477.49 703.74,477.67 703.30,477.85 702.87,478.04 702.44,478.24 702.00,478.45 701.57,478.66 701.14,478.89 700.70,479.12 700.27,479.37 699.84,479.62 699.40,479.88 698.97,480.14 698.53,480.42 698.10,480.70 697.67,480.99 697.23,481.29 696.80,481.60 696.37,481.92 695.93,482.24 695.50,482.57 695.07,482.91 694.63,483.26 694.20,483.61 693.77,483.97 693.33,484.33 692.90,484.71 692.46,485.08 692.03,485.47 691.60,485.86 691.16,486.25 690.73,486.66 690.30,487.06 689.86,487.47 689.43,487.89 689.00,488.31 688.56,488.73 688.13,489.16 687.69,489.59 687.26,490.02 686.83,490.46 686.39,490.90 685.96,491.34 685.53,491.78 685.09,492.23 684.66,492.67 684.23,493.12 683.79,493.57 683.36,494.02 682.93,494.46 682.49,494.91 682.06,495.36 681.62,495.80 681.19,496.25 680.76,496.69 680.32,497.13 679.89,497.57 679.46,498.00 679.02,498.44 678.59,498.87 678.16,499.29 677.72,499.71 677.29,500.13 676.85,500.54 676.42,500.95 675.99,501.35 675.55,501.74 675.12,502.13 674.69,502.52 674.25,502.89 673.82,503.26 673.39,503.62 672.95,503.98 672.52,504.32 672.09,504.66 671.65,504.99 671.22,505.31 670.78,505.63 670.35,505.93 669.92,506.22 669.48,506.51 669.05,506.78 668.62,507.04 668.18,507.30 667.75,507.54 667.32,507.77 666.88,507.99 666.45,508.20 666.01,508.40 665.58,508.59 665.15,508.77 664.71,508.93 664.28,509.08 663.85,509.22 663.41,509.35 662.98,509.46 662.55,509.57 662.11,509.66 661.68,509.73 661.25,509.80 660.81,509.85 660.38,509.89 659.94,509.92 659.51,509.93 659.08,509.93 658.64,509.92 658.21,509.90 657.78,509.86 657.34,509.81 656.91,509.75 656.48,509.67 656.04,509.58 655.61,509.48 655.17,509.37 654.74,509.25 654.31,509.11 653.87,508.96 653.44,508.80 653.01,508.63 652.57,508.44 652.14,508.25 651.71,508.04 651.27,507.82 650.84,507.59 650.41,507.35 649.97,507.10 649.54,506.83 649.10,506.56 648.67,506.28 648.24,505.99 647.80,505.69 647.37,505.38 646.94,505.06 646.50,504.73 646.07,504.39 645.64,504.05 645.20,503.69 644.77,503.33 644.33,502.97 643.90,502.59 643.47,502.21 643.03,501.82 642.60,501.43 642.17,501.03 641.73,500.62 641.30,500.21 640.87,499.80 640.43,499.38 640.00,498.95 639.57,498.52 639.13,498.09 638.70,497.66 638.26,497.22 637.83,496.78 637.40,496.34 636.96,495.89 636.53,495.45 636.10,495.00 635.66,494.55 635.23,494.11 634.80,493.66 634.36,493.21 633.93,492.76 633.49,492.32 633.06,491.87 632.63,491.43 632.19,490.99 631.76,490.55 631.33,490.11 630.89,489.68 630.46,489.24 630.03,488.82 629.59,488.39 629.16,487.97 628.72,487.55 628.29,487.14 627.86,486.74 627.42,486.33 626.99,485.94 626.56,485.55 626.12,485.16 625.69,484.78 625.26,484.41 624.82,484.04 624.39,483.68 623.96,483.33 623.52,482.98 623.09,482.64 622.65,482.31 622.22,481.98 621.79,481.67 621.35,481.36 620.92,481.05 620.49,480.76 620.05,480.47 619.62,480.20 619.19,479.93 618.75,479.67 618.32,479.42 617.88,479.17 617.45,478.94 617.02,478.71 616.58,478.49 616.15,478.28 615.72,478.08 615.31,477.89 615.75,477.70 616.18,477.53 616.61,477.36 617.05,477.20 617.48,477.05 617.91,476.91 618.35,476.77 618.78,476.64 619.21,476.53 619.65,476.42 620.08,476.31 620.51,476.22 620.95,476.13 621.38,476.04 621.82,475.97 622.25,475.90 622.68,475.84 623.12,475.78 623.55,475.74 623.98,475.69 624.42,475.65 624.85,475.62 625.28,475.59 625.72,475.57 626.15,475.55 626.59,475.53 627.02,475.52 627.45,475.51 627.89,475.51 628.32,475.50 628.75,475.50 629.19,475.50 629.62,475.50 630.05,475.50 630.49,475.50 630.92,475.49 631.35,475.49 631.79,475.48 632.22,475.47 632.66,475.45 633.09,475.43 633.52,475.41 633.96,475.38 634.39,475.34 634.82,475.30 635.26,475.26 635.69,475.21 636.12,475.15 636.56,475.09 636.99,475.02 637.43,474.94 637.86,474.86 638.29,474.77 638.73,474.67 639.16,474.57 639.59,474.45 640.03,474.33 640.46,474.20 640.89,474.06 641.33,473.92 641.76,473.76 642.19,473.60 642.63,473.43 643.06,473.25 643.50,473.06 643.93,472.87 644.36,472.66 644.80,472.45 645.23,472.22 645.66,471.99 646.10,471.75 646.53,471.50 646.96,471.24 647.40,470.98 647.83,470.70 648.27,470.42 648.70,470.13 649.13,469.83 649.57,469.52 650.00,469.20 650.43,468.88 650.87,468.55 651.30,468.21 651.73,467.86 652.17,467.51 652.60,467.14 653.03,466.78 653.47,466.40 653.90,466.02 654.34,465.63 654.77,465.24 655.20,464.84 655.64,464.43 656.07,464.02 656.50,463.61 656.94,463.19 657.37,462.76 657.80,462.33 658.24,461.90 658.67,461.46 659.11,461.02 659.54,460.58 659.97,460.13 660.41,459.68 660.84,459.23 661.27,458.78 661.71,458.32 662.14,457.87 662.57,457.41 663.01,456.95 663.44,456.49 663.88,456.04 664.31,455.58 664.74,455.12 665.18,454.67 665.61,454.21 666.04,453.76 666.48,453.31 666.91,452.87 667.34,452.42 667.78,451.98 668.21,451.54 668.64,451.11 669.08,450.68 669.51,450.26 669.95,449.84 670.38,449.42 670.81,449.02 671.25,448.61 671.68,448.22 672.11,447.83 672.55,447.44 672.98,447.07 673.41,446.70 673.85,446.34 674.28,445.99 674.72,445.64 675.15,445.31 675.58,444.98 676.02,444.66 676.45,444.36 676.88,444.06 677.32,443.77 677.75,443.49 678.18,443.22 678.62,442.97 679.05,442.72 679.48,442.49 679.92,442.26 680.35,442.05 680.79,441.85 681.22,441.66 681.65,441.48 682.09,441.32 682.52,441.17 682.95,441.03 683.39,440.90 683.82,440.78 684.25,440.68 684.69,440.59 685.12,440.52 685.56,440.45 685.99,440.40 686.42,440.36 686.86,440.34 687.29,440.33 687.72,440.33 688.16,440.34 688.59,440.37 689.02,440.41 689.46,440.46 689.89,440.53 690.32,440.61 690.76,440.70 691.19,440.81 691.63,440.92 692.06,441.05 692.49,441.20 692.93,441.35 693.36,441.52 693.79,441.70 694.23,441.89 694.66,442.09 695.09,442.31 695.53,442.53 695.96,442.77 696.40,443.02 696.83,443.28 697.26,443.55 697.70,443.83 698.13,444.12 698.56,444.42 699.00,444.73 699.43,445.05 699.86,445.37 700.30,445.71 700.73,446.06 701.16,446.41 701.60,446.77 702.03,447.14 702.47,447.52 702.90,447.90 703.33,448.30 703.77,448.69 704.20,449.10 704.63,449.51 705.07,449.92 705.50,450.34 705.93,450.77 706.37,451.20 706.80,451.63 707.24,452.07 707.67,452.51 708.10,452.96 708.54,453.40 708.97,453.85 709.40,454.31 709.84,454.76 710.27,455.21 710.70,455.67 711.14,456.13 711.57,456.59 712.00,457.04 712.44,457.50 712.87,457.96 713.31,458.41 713.74,458.87 714.17,459.32 714.61,459.77 715.04,460.22 715.47,460.67 715.91,461.11 716.34,461.55 716.77,461.98 717.21,462.42 717.64,462.85 718.08,463.27 718.51,463.69 718.94,464.10 719.38,464.51 719.81,464.92 720.24,465.32 720.68,465.71 721.11,466.10 721.54,466.48 721.98,466.85 722.41,467.22 722.84,467.58 723.28,467.93 723.71,468.28 724.15,468.61 724.58,468.94 725.01,469.27 725.45,469.58 725.88,469.89 726.31,470.19 726.75,470.48 727.18,470.76 727.61,471.03 728.05,471.30 728.48,471.55 728.92,471.80 729.35,472.04 729.78,472.27 730.22,472.49 730.65,472.70 731.08,472.91 731.52,473.10 731.95,473.29 732.38,473.47 732.82,473.63 733.25,473.80 733.68,473.95 734.12,474.09 734.55,474.23 734.42,474.36 733.99,474.48 733.55,474.59 733.12,474.69 732.68,474.79 732.25,474.88 731.82,474.96 731.38,475.03 730.95,475.10 730.52,475.16 730.08,475.22 729.65,475.27 729.22,475.31 728.78,475.35 728.35,475.38 727.92,475.41 727.48,475.43 727.05,475.45 726.61,475.47 726.18,475.48 725.75,475.49 725.31,475.49 724.88,475.50 724.45,475.50 724.01,475.50 723.58,475.50 723.15,475.50 722.71,475.50 722.28,475.51 721.84,475.51 721.41,475.52 720.98,475.54 720.54,475.55 720.11,475.57 719.68,475.60 719.24,475.63 718.81,475.66 718.38,475.70 717.94,475.74 717.51,475.80 717.08,475.85 716.64,475.91 716.21,475.98 715.77,476.06 715.34,476.14 714.91,476.23 714.47,476.33 714.04,476.44 713.61,476.55 713.17,476.67 712.74,476.80 712.31,476.93 711.87,477.08 711.44,477.23 711.00,477.39 710.57,477.56 710.14,477.74 709.70,477.92 709.27,478.12 708.84,478.32 708.40,478.53 707.97,478.75 707.54,478.98 707.10,479.22 706.67,479.46 706.24,479.72 705.80,479.98 705.37,480.25 704.93,480.53 704.50,480.82 704.07,481.11 703.63,481.42 703.20,481.73 702.77,482.05 702.33,482.37 701.90,482.71 701.47,483.05 701.03,483.40 700.60,483.75 700.16,484.11 699.73,484.48 699.30,484.86 698.86,485.24 698.43,485.62 698.00,486.02 697.56,486.41 697.13,486.82 696.70,487.22 696.26,487.64 695.83,488.05 695.40,488.48 694.96,488.90 694.53,489.33 694.09,489.76 693.66,490.20 693.23,490.63 692.79,491.07 692.36,491.52 691.93,491.96 691.49,492.41 691.06,492.85 690.63,493.30 690.19,493.75 689.76,494.20 689.32,494.64 688.89,495.09 688.46,495.54 688.02,495.98 687.59,496.43 687.16,496.87 686.72,497.31 686.29,497.74 685.86,498.18 685.42,498.61 684.99,499.04 684.56,499.46 684.12,499.88 683.69,500.29 683.25,500.70 682.82,501.11 682.39,501.51 681.95,501.90 681.52,502.29 681.09,502.67 680.65,503.04 680.22,503.41 679.79,503.77 679.35,504.12 678.92,504.46 678.48,504.80 678.05,505.12 677.62,505.44 677.18,505.75 676.75,506.05 676.32,506.34 675.88,506.62 675.45,506.89 675.02,507.15 674.58,507.40 674.15,507.64 673.72,507.86 673.28,508.08 672.85,508.29 672.41,508.48 671.98,508.66 671.55,508.83 671.11,508.99 670.68,509.14 670.25,509.27 669.81,509.40 669.38,509.51 668.95,509.60 668.51,509.69 668.08,509.76 667.64,509.82 667.21,509.87 666.78,509.90 666.34,509.92 665.91,509.93 665.48,509.93 665.04,509.91 664.61,509.88 664.18,509.84 663.74,509.79 663.31,509.72 662.88,509.64 662.44,509.55 662.01,509.44 661.57,509.32 661.14,509.19 660.71,509.05 660.27,508.90 659.84,508.73 659.41,508.55 658.97,508.36 658.54,508.16 658.11,507.95 657.67,507.73 657.24,507.49 656.80,507.25 656.37,506.99 655.94,506.73 655.50,506.45 655.07,506.16 654.64,505.87 654.20,505.56 653.77,505.25 653.34,504.93 652.90,504.60 652.47,504.26 652.04,503.91 651.60,503.55 651.17,503.19 650.73,502.82 650.30,502.44 649.87,502.05 649.43,501.66 649.00,501.27 648.57,500.87 648.13,500.46 647.70,500.05 647.27,499.63 646.83,499.21 646.40,498.78 645.96,498.35 645.53,497.92 645.10,497.48 644.66,497.04 644.23,496.60 643.80,496.16 643.36,495.72 642.93,495.27 642.50,494.82 642.06,494.37 641.63,493.93 641.20,493.48 640.76,493.03 640.33,492.58 639.89,492.14 639.46,491.69 639.03,491.25 638.59,490.81 638.16,490.37 637.73,489.94 637.29,489.50 636.86,489.07 636.43,488.65 635.99,488.22 635.56,487.80 635.12,487.39 634.69,486.98 634.26,486.57 633.82,486.17 633.39,485.78 632.96,485.39 632.52,485.01 632.09,484.63 631.66,484.26 631.22,483.90 630.79,483.54 630.35,483.19 629.92,482.84 629.49,482.51 629.05,482.18 628.62,481.85 628.19,481.54 627.75,481.23 627.32,480.94 626.89,480.65 626.45,480.36 626.02,480.09 625.59,479.82 625.15,479.57 624.72,479.32 624.28,479.08 623.85,478.84 623.42,478.62 622.98,478.41 622.55,478.20 622.12,478.00 621.68,477.81 621.25,477.63 620.82,477.46 620.38,477.29 619.95,477.14 619.51,476.99 619.08,476.85 618.65,476.72 618.21,476.60 617.78,476.48 617.35,476.37 616.91,476.27 616.48,476.18" fill="none" stroke="#48f048" stroke-width="1" shape-rendering="crispEdges"/>
<rect x="880" y="582" width="2" height="2" fill="#b8b8b8" />
<rect x="876" y="586" width="2" height="2" fill="#b8b8b8" />
<rect x="880" y="586" width="2" height="2" fill="#b8b8b8" />
<rect x="872" y="590" width="2" height="2" fill="#b8b8b8" />
<rect x="876" y="590" width="2" height="2" fill="#b8b8b8" />
<rect x="880" y="590" width="2" height="2" fill="#b8b8b8" />
<g transform="translate(8.6,7.6)"><polygon points="4.3,0 10.7,0 15,4.3 15,10.2 10.7,14.5 4.3,14.5 0,10.2 0,4.3" fill="#000"/>
<path d="M1.5 4.5 L7 10 L14 9" fill="none" stroke="#30c8e0" stroke-width="1"/>
<path d="M3 8 C5 4 9 3 11 5 L14 7" fill="none" stroke="#30c030" stroke-width="1"/>
<path d="M1 9.5 L5 10" fill="none" stroke="#e06030" stroke-width="1"/>
<ellipse cx="6.5" cy="7" rx="1.8" ry="2" fill="#e04848"/></g>
<g transform="translate(13,62)">
<path d="M0.5 8.5 L0.5 21.5 L18 21.5 L18 11 L9 11 L8 8.5 Z" fill="#f9c27a" stroke="#8a5208" stroke-width="1"/>
<path d="M0.5 21.5 L4.5 12.5 L22 12.5 L18 21.5 Z" fill="#fdd888" stroke="#8a5208" stroke-width="1" stroke-linejoin="round"/>
<path d="M10.5 6 C12 1.5 18 -0.5 21.5 3.5" fill="none" stroke="#000" stroke-width="2"/>
<path d="M24.2 0.2 L24.2 5.2 L18.5 4.8 Z" fill="#000"/>
</g>
<g transform="translate(44,65)">
<rect x="0.5" y="0.5" width="23" height="19" fill="#e4e4e4" stroke="#8c8c8c"/>
<path d="M1 13 C3 8 6 8 8 12 C10 16 13 16 15 11" fill="none" stroke="#3aa03a" stroke-width="1"/>
<path d="M1 18 L5 18 L5 10 L9.5 10 L9.5 18 L14 18 L14 10 L16 10" fill="none" stroke="#3a8ad8" stroke-width="1.3"/>
<path d="M19 18 L19 13 L23 13" fill="none" stroke="#3a8ad8" stroke-width="1.3"/>
<path d="M13.5 0.5 L19.5 0.5 L19.5 7 L23.5 7 L16.5 15.5 L9.5 7 L13.5 7 Z" fill="#ffffff" stroke="#ffffff" stroke-width="2.5" stroke-linejoin="round"/>
<path d="M14 1 L19 1 L19 7.2 L23 7.2 L16.5 15 L10 7.2 L14 7.2 Z" fill="#00cc00"/>
</g>
<g transform="translate(75,62)">
<path d="M0.5 0.5 L19.5 0.5 L23.5 4.5 L23.5 23.5 L0.5 23.5 Z" fill="#86bcf6" stroke="#00005a" stroke-width="1"/>
<rect x="6" y="1" width="11.5" height="7.5" fill="#000"/>
<rect x="14" y="1.5" width="2.5" height="6" fill="#fff"/>
<rect x="4.5" y="11.5" width="15" height="12" fill="#fff" stroke="#00005a" stroke-width="1"/>
</g>
<g transform="translate(106.5,62)">
<path d="M3.5 5 C7 0 15 -0.5 18 3.5 L22.5 0.5 L23.5 10.5 L13.5 10.5 L16.5 7.5 C14 4.5 9 5 7 8 Z" fill="#00b800" stroke="#007000" stroke-width="0.8" stroke-linejoin="round"/>
<path d="M20 19 C16.5 24 8.5 24.5 5.5 20.5 L1 23.5 L0 13.5 L10 13.5 L7 16.5 C9.5 19.5 14.5 19 16.5 16 Z" fill="#00b800" stroke="#007000" stroke-width="0.8" stroke-linejoin="round"/>
</g>
<g transform="translate(138,63)">
<path d="M3.5 0.5 L11 8 L18.5 0.5 L22 4 L14.5 11.5 L22 19 L18.5 22.5 L11 15 L3.5 22.5 L0 19 L7.5 11.5 L0 4 Z" fill="#ff8484" stroke="#a01818" stroke-width="0.9" stroke-linejoin="miter"/>
</g>
<g transform="translate(169,64)">
<rect x="4.5" y="0.5" width="13" height="8" fill="#fff" stroke="#000" stroke-width="1"/>
<rect x="0.5" y="8.5" width="21" height="8" fill="#8484ff" stroke="#0000a0" stroke-width="1"/>
<rect x="4.5" y="12.5" width="13" height="7" fill="#fff" stroke="#000" stroke-width="1"/>
<rect x="1" y="12" width="3.5" height="4" fill="#8484ff"/><rect x="17.5" y="12" width="3.5" height="4" fill="#8484ff"/>
<path d="M0.5 16.5 L21.5 16.5" stroke="#0000a0"/>
</g>
<g transform="translate(209,62)">
<rect x="0.5" y="0.5" width="23" height="23" fill="#fff" stroke="#808080" stroke-width="1"/>
<rect x="3.5" y="6.5" width="6" height="6" fill="#fff" stroke="#000"/>
<path d="M6.5 3 V6.5" stroke="#404040" fill="none"/>
<path d="M10 9.5 H13 M15.5 12 V17.5 H18" stroke="#707070" fill="none"/>
<rect x="13" y="7" width="8" height="5" fill="#000"/>
<rect x="18" y="15" width="3" height="5" fill="#000"/>
</g>
<g transform="translate(250,62)"><path d="M0.5 0 V23.5 H24" fill="none" stroke="#000" stroke-width="1.2"/><path d="M6.5 7 H13 V0.5 H17 V7 H23 V11 H17 V17 H13 V11 H6.5 Z" fill="#8080ff" stroke="#0000a0" stroke-width="1"/></g>
<g transform="translate(281,62)"><path d="M0.5 0 V23.5 H24" fill="none" stroke="#000" stroke-width="1.2"/><path d="M0.5 8 C4 10 7 13 10 13 C14 13 19 11 24 8" fill="none" stroke="#40b040" stroke-width="1"/>
<path d="M0.5 15 L9 20.5 L17 14 L24 19" fill="none" stroke="#3a88c8" stroke-width="1.2"/>
<text x="13" y="8.5" font-family="Liberation Sans" font-size="11" fill="#000" textLength="11" lengthAdjust="spacingAndGlyphs">Yt</text></g>
<g transform="translate(312,62)"><path d="M0.5 0 V23.5 H24" fill="none" stroke="#000" stroke-width="1.2"/><path d="M12 9 C17 8 21 12 21 17 C21 21 16 23 11 22 C6 21 3.5 18 4 14 C5 10 8 9 12 9 Z" fill="none" stroke="#40b040" stroke-width="1"/>
<text x="12.5" y="8.5" font-family="Liberation Sans" font-size="11" fill="#000" textLength="11.5" lengthAdjust="spacingAndGlyphs">XY</text></g>
<g transform="translate(343,62)"><path d="M0.5 0 V23.5 H24" fill="none" stroke="#000" stroke-width="1.2"/><path d="M1 21 L8 20.5 L10 19 L11 7 L12 19.5 L14 20.5 L20 20 L21 16 L22 21 L24 21.5" fill="none" stroke="#40b040" stroke-width="1"/>
<text x="6.5" y="8.5" font-family="Liberation Sans" font-size="11" fill="#000" textLength="17" lengthAdjust="spacingAndGlyphs">FFT</text></g>
<rect x="372" y="61" width="1" height="27" fill="#a0a0a0" />
<g transform="translate(380,62)"><path d="M0 6.5 L9 6.5 L10 1.5 L11 5 L24 7.5" fill="none" stroke="#3a88c8" stroke-width="1.3"/>
<path d="M0 14.5 L10 12.5 L19 12 L24 10.5" fill="none" stroke="#40b040" stroke-width="1.2"/>
<path d="M0 22.5 H24" stroke="#000" stroke-width="1"/></g>
<rect x="409" y="61" width="1" height="27" fill="#a0a0a0" />
<g transform="translate(417,62)"><rect x="0.5" y="0.5" width="23" height="23" rx="3" fill="#a8a050" stroke="#88843c"/>
<path d="M5.6 5.5 L4.8 18 M8.6 5.5 H13.4 L13.1 11.3 H8.5 L8.2 18 H13 M15.3 5.5 H20.5 L20 18 H15 M15.6 11.3 H20.2" fill="none" stroke="#000" stroke-width="1.3" stroke-linejoin="miter"/></g>
<g transform="translate(452,63)"><path d="M15 0 H11 A11 11 0 0 0 11 22 H15 V16 H12 A5 5 0 0 1 12 6 H15 Z" fill="#0e7d3c"/></g>
<g transform="translate(478.8,63)"><rect x="0.5" y="5.5" width="3.8" height="17" rx="1.9" fill="#cccccc" stroke="#8c8c8c"/>
<text x="6" y="8.8" font-family="Liberation Sans" font-size="9.5" font-weight="bold" fill="#8c8c8c" textLength="6" lengthAdjust="spacingAndGlyphs">2</text>
<path d="M15 5.5 H23.5 V10.3 H17.5 V16.7 H23.5 V22.5 H15 Q14.5 22.5 14.5 22 V6 Q14.5 5.5 15 5.5 Z" fill="#cccccc" stroke="#8c8c8c" stroke-linejoin="round"/></g>
<g transform="translate(510,63)"><text x="11.5" y="8" font-family="Liberation Sans" font-size="9" font-weight="bold" fill="#3a92d8" text-anchor="middle" textLength="23" lengthAdjust="spacingAndGlyphs">00110</text>
<path d="M0.5 13.5 H23.5 L21 21.5 H3 Z" fill="#c8e0c4" stroke="#8c8c8c" stroke-linejoin="round"/>
<g fill="#404040"><rect x="5" y="15.5" width="1" height="1"/><rect x="8.5" y="15.5" width="1" height="1"/><rect x="12" y="15.5" width="1" height="1"/><rect x="15.5" y="15.5" width="1" height="1"/><rect x="19" y="15.5" width="1" height="1"/>
<rect x="7" y="18.5" width="1" height="1"/><rect x="10.5" y="18.5" width="1" height="1"/><rect x="14" y="18.5" width="1" height="1"/><rect x="17.5" y="18.5" width="1" height="1"/></g></g>
<g transform="translate(551,62.5)"><path d="M0 0.6 L23 0.6 L23 7 L18.5 3.3 L8.5 3.3 L14.8 10.2 L7.2 20.4 L18.5 20.4 L23 16.8 L23 23.3 L2 23.3 L10.7 11.2 Z" fill="#000"/></g>
<rect x="580" y="61" width="1" height="27" fill="#a0a0a0" />
<g transform="translate(589,63)"><path d="M11 11 L7.60 0.54 A11 11 0 0 1 14.40 0.54 Z" fill="#f0d040"/><path d="M11 11 L14.40 0.54 A11 11 0 0 1 19.90 4.53 Z" fill="#a0d040"/><path d="M11 11 L19.90 4.53 A11 11 0 0 1 22.00 11.00 Z" fill="#40c060"/><path d="M11 11 L22.00 11.00 A11 11 0 0 1 19.90 17.47 Z" fill="#30b0b0"/><path d="M11 11 L19.90 17.47 A11 11 0 0 1 14.40 21.46 Z" fill="#3080d0"/><path d="M11 11 L14.40 21.46 A11 11 0 0 1 7.60 21.46 Z" fill="#6050c0"/><path d="M11 11 L7.60 21.46 A11 11 0 0 1 2.10 17.47 Z" fill="#a040b0"/><path d="M11 11 L2.10 17.47 A11 11 0 0 1 0.00 11.00 Z" fill="#e04070"/><path d="M11 11 L0.00 11.00 A11 11 0 0 1 2.10 4.53 Z" fill="#e85030"/><path d="M11 11 L2.10 4.53 A11 11 0 0 1 7.60 0.54 Z" fill="#f08a30"/><circle cx="11" cy="11" r="5" fill="#ffffff" opacity="0.3"/><circle cx="11" cy="11" r="2.5" fill="#ffffff" opacity="0.3"/>
<path d="M2 21 L16 6" stroke="#40c040" stroke-width="2.5"/>
<path d="M5 18 L16 6.5" stroke="#ffffff" stroke-width="1.2"/>
<path d="M14 6 L18 2 C19.5 0 23 1 22.5 3.5 C22 5 20 6.5 18 8 Z" fill="#000"/>
<circle cx="2.5" cy="20.5" r="1.8" fill="#30b030"/></g>
<g transform="translate(619,64)"><rect x="0.5" y="1.5" width="5" height="5" fill="#fff" stroke="#808080"/>
<rect x="7.5" y="0.5" width="16" height="6.5" fill="#c8c8c8" stroke="#000" stroke-width="1.2"/>
<path d="M9.5 2 L12 3.8 L9.5 5.5 Z" fill="#20a020"/><path d="M15 5.5 L16 2 L17 5.5" fill="none" stroke="#30a0c0"/><rect x="18.5" y="2" width="1.2" height="3.5" fill="#2020a0"/><rect x="20.5" y="2" width="1.2" height="3.5" fill="#2020a0"/>
<rect x="0.5" y="14.5" width="5" height="5" fill="#fff" stroke="#808080"/>
<path d="M1 16.5 L3 19 L6.5 13.5" fill="none" stroke="#20a020" stroke-width="1.2"/>
<rect x="7.5" y="13.5" width="16" height="6.5" fill="#c8c8c8" stroke="#000" stroke-width="1.2"/>
<path d="M9.5 15 L12 16.8 L9.5 18.5 Z" fill="#20a020"/><path d="M16 15 L14 16.8 L16 18.5 Z" fill="#30a0d0"/><path d="M18 15 L20 16.8 L18 18.5 Z" fill="#30a0d0"/></g>
<g transform="translate(660,62)"><rect x="0.5" y="0.5" width="23" height="23" rx="3" fill="#6e9470" stroke="#557a58"/>
<path d="M3 12 C6 7 9 5 12 7 C15 9 17 12 19 13" fill="none" stroke="#1e2e1e" stroke-width="1.2"/>
<rect x="18" y="4" width="3" height="2" fill="#1e2e1e"/><rect x="18" y="8" width="3" height="2" fill="#1e2e1e"/>
<g fill="#d8e8d8"><rect x="3" y="18" width="3" height="3"/><rect x="8" y="18" width="3" height="3"/><rect x="13" y="18" width="3" height="3"/><rect x="18" y="18" width="3" height="3"/></g></g>
<g transform="translate(831,37)"><polygon points="47.10,32.87 33.57,46.40 14.43,46.40 0.90,32.87 0.90,13.73 14.43,0.20 33.57,0.20 47.10,13.73" fill="#fff" stroke="#7a7a7a" stroke-width="2.4"/>
<path d="M2.5 23.5 L13 16.5 L35 16.5 L45.5 23.5 L35 30.5 L13 30.5 Z" fill="none" stroke="#707070" stroke-width="0.7"/>
<circle cx="24" cy="23.5" r="9.3" fill="#a4a4a4"/>
<g stroke="#d8d8d8" stroke-width="0.5"><path d="M16 20 H32 M15.5 23.5 H32.5 M16 27 H32 M20 15 V32 M24 14.5 V32.5 M28 15 V32"/></g>
<text x="24" y="13" font-family="Liberation Sans" font-size="8" fill="#d83030" text-anchor="middle" textLength="21" lengthAdjust="spacingAndGlyphs">TiePie</text>
<text x="24" y="41" font-family="Liberation Sans" font-size="5.5" fill="#e04040" text-anchor="middle" textLength="25" lengthAdjust="spacingAndGlyphs">engineering</text></g>
<g transform="translate(21,100)"><path d="M0.5 0.5 L12.5 11 L0.5 21.5 Z" fill="#70a8e0" stroke="#2060b0" stroke-width="1" stroke-linejoin="round"/></g>
<g transform="translate(52,100)"><rect x="0.5" y="0.5" width="3" height="21" rx="1" fill="#70a8e0" stroke="#2060b0"/>
<path d="M7.5 6 L13.5 11 L7.5 16 Z" fill="#70a8e0" stroke="#2060b0" stroke-linejoin="round"/></g>
<g transform="translate(84,100)"><path d="M21.5 0.5 L0.5 11 L21.5 21.5 Z" fill="#00c8dc" stroke="#1060a8" stroke-width="1" stroke-linejoin="round"/></g>
<g transform="translate(163,100)"><path d="M0.5 0.5 L21.5 11 L0.5 21.5 Z" fill="#00c8dc" stroke="#1060a8" stroke-width="1" stroke-linejoin="round"/></g>
<g transform="translate(313,100)"><path d="M9 0.5 H16 M12.5 0.5 V8" stroke="#a8a8a8" stroke-width="1.2" fill="none"/>
<path d="M0 11.5 H24" stroke="#a8a8a8" stroke-width="1.2"/>
<rect x="11" y="10" width="3" height="3" fill="#a8a8a8"/>
<path d="M23 15 H9 V12.5 L1 17.5 L9 22.5 V20 H23 Z" fill="#e8e8e8" stroke="#b8b8b8" stroke-linejoin="round"/></g>
<g transform="translate(417,100)"><path d="M9 0.5 H16 M12.5 0.5 V8" stroke="#000" stroke-width="1.2" fill="none"/>
<path d="M0 11.5 H24" stroke="#000" stroke-width="1.2"/>
<rect x="11" y="10" width="3" height="3" fill="#000"/>
<path d="M1 15 H15 V12.5 L23 17.5 L15 22.5 V20 H1 Z" fill="#30a8f0" stroke="#0060b0" stroke-linejoin="round"/></g>
<g transform="translate(504,99)"><path d="M1.5 22 H6 L14 2 H19.5" fill="none" stroke="#555" stroke-width="3" stroke-linejoin="miter"/></g>
<g transform="translate(540,99)"><rect x="0.5" y="0.5" width="23" height="23" fill="#fff" stroke="#606060"/>
<rect x="1" y="1" width="22" height="3.5" fill="#e0e0e0"/>
<rect x="14.5" y="1.5" width="2" height="2" fill="#909090"/><rect x="17.5" y="1.5" width="2" height="2" fill="#909090"/><rect x="20" y="1.5" width="2.5" height="2.5" fill="#f0a0a0"/>
<path d="M0.5 4.5 H23.5" stroke="#606060"/>
<rect x="2.5" y="8.5" width="19" height="10" fill="#fff" stroke="#606060"/>
<path d="M15.5 8.5 V18.5" stroke="#606060"/>
<path d="M16.3 12.2 L18.5 9.6 L20.7 12.2 Z M16.3 15 L18.5 17.6 L20.7 15 Z" fill="#000"/>
<path d="M16 13 H21 M16 14.2 H21" stroke="#909090" stroke-width="0.6"/></g>
<circle cx="26.8" cy="151.6" r="10.3" fill="#c4c4c4" stroke="#8a8a8a" stroke-width="1.6"/>
<circle cx="26.8" cy="151.6" r="8.2" fill="#00f000" stroke="#107010" stroke-width="0.6"/>
<circle cx="26.8" cy="151.6" r="3.6" fill="#f0f040"/>
<circle cx="26.8" cy="151.6" r="1.2" fill="#202000"/>
<g transform="translate(72,147)"><rect x="0.5" y="0.5" width="21" height="3" fill="#f0e070" stroke="#8a7010"/>
<rect x="0.5" y="6.5" width="5" height="3" fill="#f0e070" stroke="#8a7010"/>
<rect x="8.5" y="6.5" width="5" height="3" fill="#f0e070" stroke="#8a7010"/>
<rect x="16.5" y="6.5" width="5" height="3" fill="#f0e070" stroke="#8a7010"/></g>
<g transform="translate(98,134)"><rect x="0.5" y="0.5" width="30" height="34" fill="#cce4f7" stroke="#a8d0f0"/>
<rect x="5.3" y="8.3" width="23.4" height="21.2" rx="2" fill="#f0e070" stroke="#6a5a10" stroke-width="1.2"/>
<text x="17.2" y="23.2" font-family="Liberation Sans" font-size="14" fill="#000" text-anchor="middle" textLength="19.5" lengthAdjust="spacingAndGlyphs">AR</text></g>
<g transform="translate(134,142)"><path d="M0.5 0.5 H21.5 L11 20.5 Z" fill="#f0e070" stroke="#7a6010" stroke-width="1.2" stroke-linejoin="round"/></g>
<g transform="translate(214,141)"><path d="M0.5 20.5 H21.5 L11 0.5 Z" fill="#f0e070" stroke="#7a6010" stroke-width="1.2" stroke-linejoin="round"/></g>
<g transform="translate(300,140)"><rect x="0.5" y="0.5" width="23" height="23" fill="#fff" stroke="#606060"/>
<rect x="1" y="1" width="22" height="3.5" fill="#e0e0e0"/>
<rect x="14.5" y="1.5" width="2" height="2" fill="#909090"/><rect x="17.5" y="1.5" width="2" height="2" fill="#909090"/><rect x="20" y="1.5" width="2.5" height="2.5" fill="#f0a0a0"/>
<path d="M0.5 4.5 H23.5" stroke="#606060"/>
<rect x="2.5" y="8.5" width="19" height="10" fill="#fff" stroke="#606060"/>
<path d="M15.5 8.5 V18.5" stroke="#606060"/>
<path d="M16.3 12.2 L18.5 9.6 L20.7 12.2 Z M16.3 15 L18.5 17.6 L20.7 15 Z" fill="#000"/>
<path d="M16 13 H21 M16 14.2 H21" stroke="#909090" stroke-width="0.6"/></g>
<g transform="translate(378,136)"><rect x="1.5" y="1.5" width="93" height="28.5" fill="#e0e0e0" stroke="#808080" stroke-width="3"/>
<path d="M0 29.5 H11 V10 H32 V29.5 H53 V10 H75" fill="none" stroke="#1e88f0" stroke-width="3"/>
<path d="M74 29.5 H96" fill="none" stroke="#1e88f0" stroke-width="3"/>
<path d="M0 12 C5 4 10 2 14 3 C20 4 27 20 36 20 C45 20 50 3 59 3 C65 3 70 7 74 11" fill="none" stroke="#1e961e" stroke-width="4"/>
<path d="M72 1 H85 V12 H96 L79 32 L62 12 H72 Z" fill="#00dd00" stroke="#fff" stroke-width="2.5" stroke-linejoin="miter"/></g>
<circle cx="579.7" cy="150.7" r="10.3" fill="#c4c4c4" stroke="#8a8a8a" stroke-width="1.6"/>
<circle cx="579.7" cy="150.7" r="8.2" fill="#00f0f0" stroke="#107010" stroke-width="0.6"/>
<circle cx="579.7" cy="150.7" r="3.6" fill="#f0f040"/>
<circle cx="579.7" cy="150.7" r="1.2" fill="#202000"/>
<g transform="translate(625,146)"><rect x="0.5" y="0.5" width="21" height="3" fill="#f0e070" stroke="#8a7010"/>
<rect x="0.5" y="6.5" width="5" height="3" fill="#f0e070" stroke="#8a7010"/>
<rect x="8.5" y="6.5" width="5" height="3" fill="#f0e070" stroke="#8a7010"/>
<rect x="16.5" y="6.5" width="5" height="3" fill="#f0e070" stroke="#8a7010"/></g>
<g transform="translate(651,133)"><rect x="0.5" y="0.5" width="30" height="34" fill="#cce4f7" stroke="#a8d0f0"/>
<rect x="5.3" y="8.3" width="23.4" height="21.2" rx="2" fill="#f0e070" stroke="#6a5a10" stroke-width="1.2"/>
<text x="17.2" y="23.2" font-family="Liberation Sans" font-size="14" fill="#000" text-anchor="middle" textLength="19.5" lengthAdjust="spacingAndGlyphs">AR</text></g>
<g transform="translate(687,141)"><path d="M0.5 0.5 H21.5 L11 20.5 Z" fill="#f0e070" stroke="#7a6010" stroke-width="1.2" stroke-linejoin="round"/></g>
<g transform="translate(764,141)"><path d="M0.5 20.5 H21.5 L11 0.5 Z" fill="#f0e070" stroke="#7a6010" stroke-width="1.2" stroke-linejoin="round"/></g>
<g transform="translate(850,140)"><rect x="0.5" y="0.5" width="23" height="23" fill="#fff" stroke="#606060"/>
<rect x="1" y="1" width="22" height="3.5" fill="#e0e0e0"/>
<rect x="14.5" y="1.5" width="2" height="2" fill="#909090"/><rect x="17.5" y="1.5" width="2" height="2" fill="#909090"/><rect x="20" y="1.5" width="2.5" height="2.5" fill="#f0a0a0"/>
<path d="M0.5 4.5 H23.5" stroke="#606060"/>
<rect x="2.5" y="8.5" width="19" height="10" fill="#fff" stroke="#606060"/>
<path d="M15.5 8.5 V18.5" stroke="#606060"/>
<path d="M16.3 12.2 L18.5 9.6 L20.7 12.2 Z M16.3 15 L18.5 17.6 L20.7 15 Z" fill="#000"/>
<path d="M16 13 H21 M16 14.2 H21" stroke="#909090" stroke-width="0.6"/></g>
<g transform="translate(80,187)"><rect x="0" y="0" width="24" height="24" fill="#000"/>
<path d="M2.5 12 L11.5 4 L21.5 8" fill="none" stroke="#30e030" stroke-width="2"/>
<path d="M11.5 2 V22" stroke="#fff" stroke-width="1"/>
<text x="3" y="21" font-family="Liberation Sans" font-size="9" fill="#fff">0</text></g>
<g transform="translate(171,187)"><rect x="0.5" y="0.5" width="23" height="13" rx="3" fill="#ffff90" stroke="#000" stroke-width="1"/>
<text x="2.5" y="6.3" font-family="Liberation Sans" font-size="5.5" fill="#707020" textLength="18" lengthAdjust="spacingAndGlyphs">Comment</text>
<text x="2.5" y="11.8" font-family="Liberation Sans" font-size="5.5" fill="#707020" textLength="8" lengthAdjust="spacingAndGlyphs">Text</text>
<rect x="10.5" y="12" width="3" height="2" fill="#d02020"/>
<path d="M13 13.5 L21 21" stroke="#000" stroke-width="1.2"/>
<path d="M24 24 L17.5 24 L24 17.5 Z" fill="#000"/></g>
<g transform="translate(202,188)"><rect x="1" y="5" width="22" height="13" rx="3" fill="#f0f0f0" stroke="#c8c8c8" stroke-width="1.2"/>
<path d="M2 1 L22 21 M22 1 L2 21" stroke="#c8c8c8" stroke-width="3"/></g>
<rect x="231" y="184" width="1" height="29" fill="#a0a0a0" />
<g transform="translate(239,187)"><rect x="0" y="0" width="24" height="24" fill="#000"/>
<rect x="2" y="3" width="3" height="3" fill="#30e030"/><rect x="2" y="9" width="3" height="3" fill="#30e0e0"/>
<text x="6.5" y="7.5" font-family="Liberation Sans" font-size="7" fill="#d8d8d8" textLength="11" lengthAdjust="spacingAndGlyphs">Ch1</text>
<text x="6.5" y="13.5" font-family="Liberation Sans" font-size="7" fill="#d8d8d8" textLength="11" lengthAdjust="spacingAndGlyphs">Ch2</text></g>
<g transform="translate(270,187)"><rect x="0" y="0" width="24" height="24" fill="#000"/>
<path d="M1 12 C4 6 6 3 8 3 C10 3 12 10 15 13 C17 15 20 14 23 11" fill="none" stroke="#30e030" stroke-width="1.8"/>
<path d="M1 14 C4 18 6 20 8 20 C11 20 13 14 15.5 14 C18 14 20 15 23 17" fill="none" stroke="#30e0e0" stroke-width="1.8"/></g>
<g transform="translate(301,187)"><rect x="0.5" y="0.5" width="23" height="23" fill="#fff" stroke="#707070"/>
<rect x="1" y="1" width="22" height="3" fill="#d8d8d8"/>
<rect x="15" y="1.5" width="2" height="2" fill="#909090"/><rect x="18" y="1.5" width="2" height="2" fill="#909090"/><rect x="20.5" y="1.5" width="2" height="2" fill="#e08080"/>
<rect x="2" y="13" width="11" height="9" fill="#000"/>
<path d="M3 18 C5 13 7 14 8 17 C9 20 11 19 12 16" fill="none" stroke="#30c030" stroke-width="1"/>
<path d="M14 11.5 L20 6" stroke="#000" stroke-width="1.2"/>
<path d="M21 5 L16 5.5 L20.5 10 Z" fill="#000"/></g>
<g transform="translate(331.5,187)"><ellipse cx="18.5" cy="18.5" rx="5" ry="3" fill="none" stroke="#e4e4e4" stroke-width="0.8"/>
<path d="M0.5 0.5 L3.8 0.5 L9.8 6.5 L4.8 11.5 L0.5 7.5 Z" fill="#f0a010" stroke="#5a3000" stroke-width="0.9" stroke-linejoin="round"/>
<path d="M1.5 2 L7 7.5" stroke="#c87000" stroke-width="0.8"/>
<path d="M4.8 11.5 L9.8 6.5 L15.3 12 L10.3 17 Z" fill="#c4c4c4" stroke="#000" stroke-width="1"/>
<path d="M10.3 17 L15.3 12 L17.5 14.2 L12.5 19.2 Z" fill="#b03010" stroke="#802000" stroke-width="0.6"/></g>
<g transform="translate(364,188)">
<path d="M3.5 0.5 L11 8 L18.5 0.5 L22 4 L14.5 11.5 L22 19 L18.5 22.5 L11 15 L3.5 22.5 L0 19 L7.5 11.5 L0 4 Z" fill="#ff8484" stroke="#a01818" stroke-width="0.9" stroke-linejoin="miter"/>
</g>
<text x="391" y="205" font-family="Liberation Serif" font-size="17" font-weight="bold" fill="#000018">1</text>
<g transform="translate(507,187)"><rect x="0" y="0" width="24" height="24" fill="#000"/>
<path d="M2.5 12 L11.5 4 L21.5 8" fill="none" stroke="#30e030" stroke-width="2"/>
<path d="M11.5 2 V22" stroke="#fff" stroke-width="1"/>
<text x="3" y="21" font-family="Liberation Sans" font-size="9" fill="#fff">0</text></g>
<g transform="translate(607,187)"><rect x="0.5" y="0.5" width="23" height="13" rx="3" fill="#ffff90" stroke="#000" stroke-width="1"/>
<text x="2.5" y="6.3" font-family="Liberation Sans" font-size="5.5" fill="#707020" textLength="18" lengthAdjust="spacingAndGlyphs">Comment</text>
<text x="2.5" y="11.8" font-family="Liberation Sans" font-size="5.5" fill="#707020" textLength="8" lengthAdjust="spacingAndGlyphs">Text</text>
<rect x="10.5" y="12" width="3" height="2" fill="#d02020"/>
<path d="M13 13.5 L21 21" stroke="#000" stroke-width="1.2"/>
<path d="M24 24 L17.5 24 L24 17.5 Z" fill="#000"/></g>
<g transform="translate(638,188)"><rect x="1" y="5" width="22" height="13" rx="3" fill="#f0f0f0" stroke="#c8c8c8" stroke-width="1.2"/>
<path d="M2 1 L22 21 M22 1 L2 21" stroke="#c8c8c8" stroke-width="3"/></g>
<rect x="667" y="184" width="1" height="29" fill="#a0a0a0" />
<g transform="translate(675,187)"><rect x="0" y="0" width="24" height="24" fill="#000"/>
<rect x="2" y="3" width="3" height="3" fill="#30e030"/><rect x="2" y="9" width="3" height="3" fill="#30e0e0"/>
<text x="6.5" y="7.5" font-family="Liberation Sans" font-size="7" fill="#d8d8d8" textLength="11" lengthAdjust="spacingAndGlyphs">Ch1</text>
<text x="6.5" y="13.5" font-family="Liberation Sans" font-size="7" fill="#d8d8d8" textLength="11" lengthAdjust="spacingAndGlyphs">Ch2</text></g>
<g transform="translate(706,187)"><rect x="0" y="0" width="24" height="24" fill="#000"/>
<path d="M1 12 C4 6 6 3 8 3 C10 3 12 10 15 13 C17 15 20 14 23 11" fill="none" stroke="#30e030" stroke-width="1.8"/>
<path d="M1 14 C4 18 6 20 8 20 C11 20 13 14 15.5 14 C18 14 20 15 23 17" fill="none" stroke="#30e0e0" stroke-width="1.8"/></g>
<g transform="translate(737,187)"><rect x="0.5" y="0.5" width="23" height="23" fill="#fff" stroke="#707070"/>
<rect x="1" y="1" width="22" height="3" fill="#d8d8d8"/>
<rect x="15" y="1.5" width="2" height="2" fill="#909090"/><rect x="18" y="1.5" width="2" height="2" fill="#909090"/><rect x="20.5" y="1.5" width="2" height="2" fill="#e08080"/>
<rect x="2" y="13" width="11" height="9" fill="#000"/>
<path d="M3 18 C5 13 7 14 8 17 C9 20 11 19 12 16" fill="none" stroke="#30c030" stroke-width="1"/>
<path d="M14 11.5 L20 6" stroke="#000" stroke-width="1.2"/>
<path d="M21 5 L16 5.5 L20.5 10 Z" fill="#000"/></g>
<g transform="translate(767.5,187)"><ellipse cx="18.5" cy="18.5" rx="5" ry="3" fill="none" stroke="#e4e4e4" stroke-width="0.8"/>
<path d="M0.5 0.5 L3.8 0.5 L9.8 6.5 L4.8 11.5 L0.5 7.5 Z" fill="#f0a010" stroke="#5a3000" stroke-width="0.9" stroke-linejoin="round"/>
<path d="M1.5 2 L7 7.5" stroke="#c87000" stroke-width="0.8"/>
<path d="M4.8 11.5 L9.8 6.5 L15.3 12 L10.3 17 Z" fill="#c4c4c4" stroke="#000" stroke-width="1"/>
<path d="M10.3 17 L15.3 12 L17.5 14.2 L12.5 19.2 Z" fill="#b03010" stroke="#802000" stroke-width="0.6"/></g>
<g transform="translate(800,188)">
<path d="M3.5 0.5 L11 8 L18.5 0.5 L22 4 L14.5 11.5 L22 19 L18.5 22.5 L11 15 L3.5 22.5 L0 19 L7.5 11.5 L0 4 Z" fill="#ff8484" stroke="#a01818" stroke-width="0.9" stroke-linejoin="miter"/>
</g>
<text x="827" y="205" font-family="Liberation Serif" font-size="17" font-weight="bold" fill="#000018">2</text>
<g transform="translate(516,387)"><rect x="0.5" y="0.5" width="7" height="4" fill="#20e020" stroke="#108010"/>
<rect x="0.5" y="9.5" width="7" height="4" fill="#20f0f0" stroke="#108080"/>
<rect x="0.5" y="18.5" width="7" height="4" fill="#2080e0" stroke="#104080"/>
<path d="M8 2.5 H24 M8 11.5 H24 M8 20.5 H24" stroke="#808080" stroke-width="1"/>
<path d="M18.5 3 V20" stroke="#000" stroke-width="1.2"/>
<path d="M16.5 5 L18.5 3 L20.5 5 M16.5 9.5 L18.5 11.5 L20.5 9.5 M16.5 14 L18.5 12 L20.5 14 M16.5 18 L18.5 20 L20.5 18" fill="#000" stroke="#000" stroke-width="1"/></g>
<g transform="translate(607,385)"><rect x="0.5" y="0.5" width="23" height="13" rx="3" fill="#ffff90" stroke="#000" stroke-width="1"/>
<text x="2.5" y="6.3" font-family="Liberation Sans" font-size="5.5" fill="#707020" textLength="18" lengthAdjust="spacingAndGlyphs">Comment</text>
<text x="2.5" y="11.8" font-family="Liberation Sans" font-size="5.5" fill="#707020" textLength="8" lengthAdjust="spacingAndGlyphs">Text</text>
<rect x="10.5" y="12" width="3" height="2" fill="#d02020"/>
<path d="M13 13.5 L21 21" stroke="#000" stroke-width="1.2"/>
<path d="M24 24 L17.5 24 L24 17.5 Z" fill="#000"/></g>
<g transform="translate(638,386)"><rect x="1" y="5" width="22" height="13" rx="3" fill="#f0f0f0" stroke="#c8c8c8" stroke-width="1.2"/>
<path d="M2 1 L22 21 M22 1 L2 21" stroke="#c8c8c8" stroke-width="3"/></g>
<rect x="667" y="382" width="1" height="29" fill="#a0a0a0" />
<g transform="translate(675,385)"><rect x="0" y="0" width="24" height="24" fill="#000"/>
<rect x="2" y="3" width="3" height="3" fill="#30e030"/><rect x="2" y="9" width="3" height="3" fill="#30e0e0"/>
<text x="6.5" y="7.5" font-family="Liberation Sans" font-size="7" fill="#d8d8d8" textLength="11" lengthAdjust="spacingAndGlyphs">Ch1</text>
<text x="6.5" y="13.5" font-family="Liberation Sans" font-size="7" fill="#d8d8d8" textLength="11" lengthAdjust="spacingAndGlyphs">Ch2</text></g>
<rect x="701.5" y="382.5" width="31" height="29" fill="#cce4f7" stroke="#a8d0f0"/>
<g transform="translate(706,385)"><rect x="0" y="0" width="24" height="24" fill="#000"/>
<ellipse cx="9.5" cy="11" rx="5.5" ry="8" fill="none" stroke="#30e030" stroke-width="1.8"/>
<ellipse cx="14" cy="17" rx="7.5" ry="4" fill="none" stroke="#30e0e0" stroke-width="1.8"/></g>
<g transform="translate(737,385)"><rect x="0.5" y="0.5" width="23" height="23" fill="#fff" stroke="#707070"/>
<rect x="1" y="1" width="22" height="3" fill="#d8d8d8"/>
<rect x="15" y="1.5" width="2" height="2" fill="#909090"/><rect x="18" y="1.5" width="2" height="2" fill="#909090"/><rect x="20.5" y="1.5" width="2" height="2" fill="#e08080"/>
<rect x="2" y="13" width="11" height="9" fill="#000"/>
<path d="M3 18 C5 13 7 14 8 17 C9 20 11 19 12 16" fill="none" stroke="#30c030" stroke-width="1"/>
<path d="M14 11.5 L20 6" stroke="#000" stroke-width="1.2"/>
<path d="M21 5 L16 5.5 L20.5 10 Z" fill="#000"/></g>
<g transform="translate(767.5,385)"><ellipse cx="18.5" cy="18.5" rx="5" ry="3" fill="none" stroke="#e4e4e4" stroke-width="0.8"/>
<path d="M0.5 0.5 L3.8 0.5 L9.8 6.5 L4.8 11.5 L0.5 7.5 Z" fill="#f0a010" stroke="#5a3000" stroke-width="0.9" stroke-linejoin="round"/>
<path d="M1.5 2 L7 7.5" stroke="#c87000" stroke-width="0.8"/>
<path d="M4.8 11.5 L9.8 6.5 L15.3 12 L10.3 17 Z" fill="#c4c4c4" stroke="#000" stroke-width="1"/>
<path d="M10.3 17 L15.3 12 L17.5 14.2 L12.5 19.2 Z" fill="#b03010" stroke="#802000" stroke-width="0.6"/></g>
<g transform="translate(800,386)">
<path d="M3.5 0.5 L11 8 L18.5 0.5 L22 4 L14.5 11.5 L22 19 L18.5 22.5 L11 15 L3.5 22.5 L0 19 L7.5 11.5 L0 4 Z" fill="#ff8484" stroke="#a01818" stroke-width="0.9" stroke-linejoin="miter"/>
</g>
<text x="827" y="403" font-family="Liberation Serif" font-size="17" font-weight="bold" fill="#000018">3</text></svg></body></html>
